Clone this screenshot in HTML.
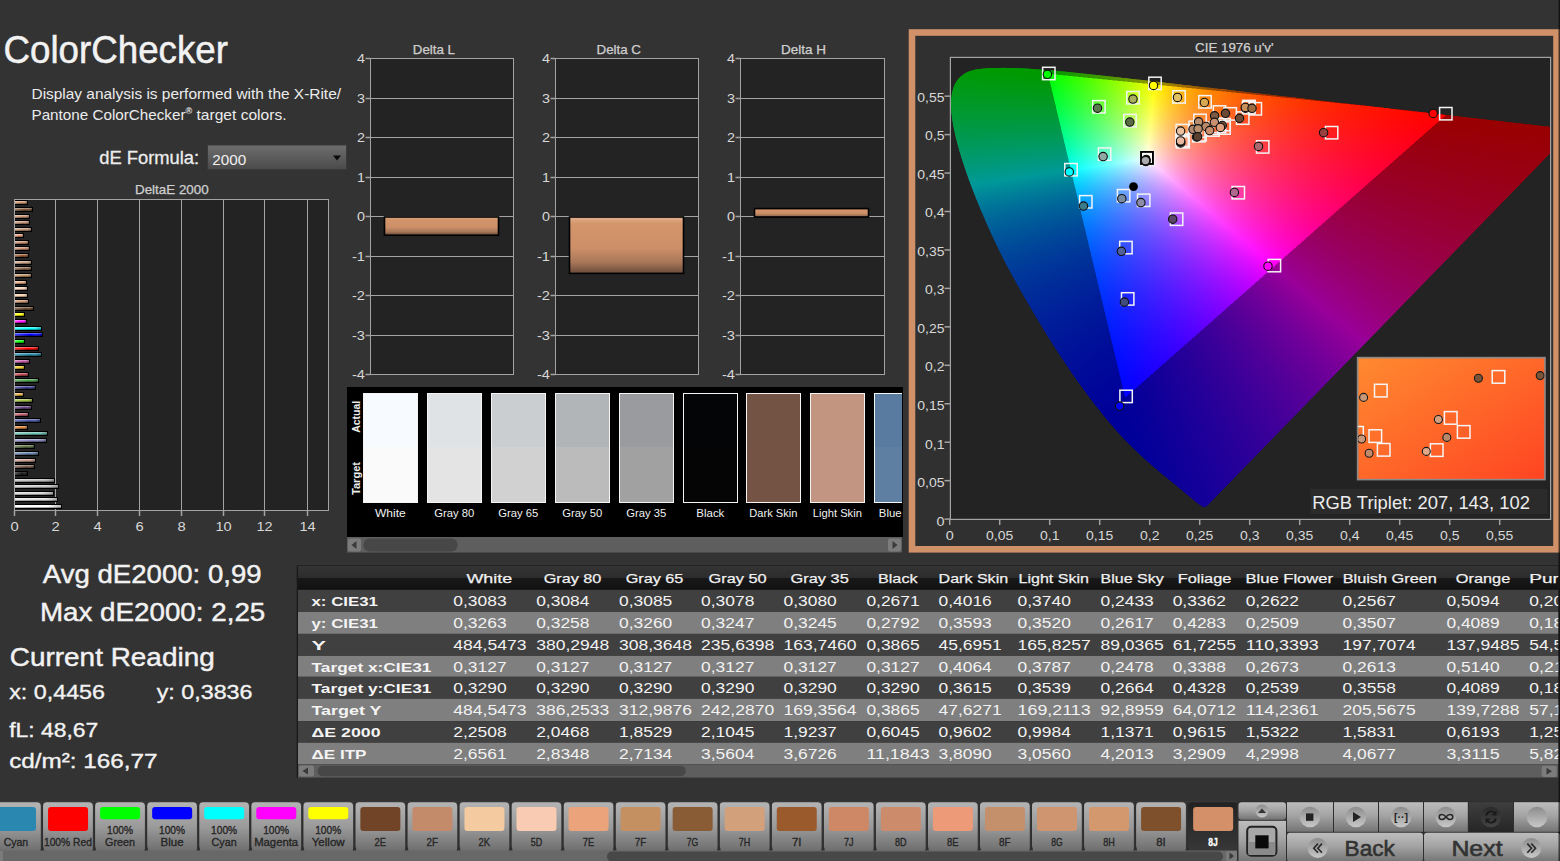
<!DOCTYPE html>
<html><head><meta charset="utf-8"><style>
html,body{margin:0;padding:0;background:#333333;width:1560px;height:861px;overflow:hidden}
svg{position:absolute;left:0;top:0}
text{font-family:"Liberation Sans",sans-serif}
#cie{position:absolute;left:950px;top:57px}
</style></head><body>
<svg width="1560" height="861" viewBox="0 0 1560 861" shape-rendering="auto">
<text x="3.5" y="63" font-size="38" fill="#f2f2f2" text-anchor="start" font-weight="normal" textLength="224.5" lengthAdjust="spacingAndGlyphs" stroke="#f2f2f2" stroke-width="0.5">ColorChecker</text>
<text x="31.5" y="99" font-size="15" fill="#ececec" text-anchor="start" font-weight="normal" textLength="309.5" lengthAdjust="spacingAndGlyphs">Display analysis is performed with the X-Rite/</text>
<text x="31.5" y="119.5" font-size="15" fill="#ececec" text-anchor="start" font-weight="normal" textLength="154" lengthAdjust="spacingAndGlyphs">Pantone ColorChecker</text>
<text x="185.5" y="113.5" font-size="9" fill="#ececec" text-anchor="start" font-weight="bold">®</text>
<text x="196.5" y="119.5" font-size="15" fill="#ececec" text-anchor="start" font-weight="normal" textLength="90" lengthAdjust="spacingAndGlyphs">target colors.</text>
<text x="99.2" y="164.2" font-size="18" fill="#ececec" text-anchor="start" font-weight="normal" textLength="100" lengthAdjust="spacingAndGlyphs" stroke="#ececec" stroke-width="0.3">dE Formula:</text>
<defs><linearGradient id="dd" x1="0" y1="0" x2="0" y2="1"><stop offset="0" stop-color="#6e6e6e"/><stop offset="1" stop-color="#4a4a4a"/></linearGradient></defs>
<rect x="207.5" y="145" width="139" height="24.5" fill="url(#dd)" stroke="#3a3a3a" stroke-width="1"/>
<text x="212.3" y="164.7" font-size="14.5" fill="#f0f0f0" text-anchor="start" font-weight="normal" textLength="34" lengthAdjust="spacingAndGlyphs">2000</text>
<path d="M333 155.5 L341 155.5 L337 160.5 Z" fill="#0a0a0a"/>
<text x="135" y="194" font-size="12.4" fill="#cfcfcf" text-anchor="start" font-weight="normal" textLength="73.7" lengthAdjust="spacingAndGlyphs" stroke="#cfcfcf" stroke-width="0.25">DeltaE 2000</text>
<rect x="14.5" y="199.5" width="314" height="311" fill="#232323"/>
<line x1="55.5" y1="199.5" x2="55.5" y2="510.5" stroke="#a3a3a3" stroke-width="1"/>
<line x1="97.5" y1="199.5" x2="97.5" y2="510.5" stroke="#a3a3a3" stroke-width="1"/>
<line x1="139.5" y1="199.5" x2="139.5" y2="510.5" stroke="#a3a3a3" stroke-width="1"/>
<line x1="181.5" y1="199.5" x2="181.5" y2="510.5" stroke="#a3a3a3" stroke-width="1"/>
<line x1="223.5" y1="199.5" x2="223.5" y2="510.5" stroke="#a3a3a3" stroke-width="1"/>
<line x1="264.5" y1="199.5" x2="264.5" y2="510.5" stroke="#a3a3a3" stroke-width="1"/>
<line x1="307.5" y1="199.5" x2="307.5" y2="510.5" stroke="#a3a3a3" stroke-width="1"/>
<rect x="14.5" y="199.5" width="314" height="311" fill="none" stroke="#a3a3a3" stroke-width="1"/>
<line x1="14.5" y1="510.3" x2="14.5" y2="516" stroke="#a3a3a3" stroke-width="1.5"/>
<text x="14.5" y="531" font-size="13" fill="#d8d8d8" text-anchor="middle" font-weight="normal" textLength="8.2" lengthAdjust="spacingAndGlyphs">0</text>
<line x1="55.5" y1="510.3" x2="55.5" y2="516" stroke="#a3a3a3" stroke-width="1.5"/>
<text x="55.5" y="531" font-size="13" fill="#d8d8d8" text-anchor="middle" font-weight="normal" textLength="8.2" lengthAdjust="spacingAndGlyphs">2</text>
<line x1="97.5" y1="510.3" x2="97.5" y2="516" stroke="#a3a3a3" stroke-width="1.5"/>
<text x="97.5" y="531" font-size="13" fill="#d8d8d8" text-anchor="middle" font-weight="normal" textLength="8.2" lengthAdjust="spacingAndGlyphs">4</text>
<line x1="139.5" y1="510.3" x2="139.5" y2="516" stroke="#a3a3a3" stroke-width="1.5"/>
<text x="139.5" y="531" font-size="13" fill="#d8d8d8" text-anchor="middle" font-weight="normal" textLength="8.2" lengthAdjust="spacingAndGlyphs">6</text>
<line x1="181.5" y1="510.3" x2="181.5" y2="516" stroke="#a3a3a3" stroke-width="1.5"/>
<text x="181.5" y="531" font-size="13" fill="#d8d8d8" text-anchor="middle" font-weight="normal" textLength="8.2" lengthAdjust="spacingAndGlyphs">8</text>
<line x1="223.5" y1="510.3" x2="223.5" y2="516" stroke="#a3a3a3" stroke-width="1.5"/>
<text x="223.5" y="531" font-size="13" fill="#d8d8d8" text-anchor="middle" font-weight="normal" textLength="16.2" lengthAdjust="spacingAndGlyphs">10</text>
<line x1="264.5" y1="510.3" x2="264.5" y2="516" stroke="#a3a3a3" stroke-width="1.5"/>
<text x="264.5" y="531" font-size="13" fill="#d8d8d8" text-anchor="middle" font-weight="normal" textLength="16.2" lengthAdjust="spacingAndGlyphs">12</text>
<line x1="307.5" y1="510.3" x2="307.5" y2="516" stroke="#a3a3a3" stroke-width="1.5"/>
<text x="307.5" y="531" font-size="13" fill="#d8d8d8" text-anchor="middle" font-weight="normal" textLength="16.2" lengthAdjust="spacingAndGlyphs">14</text>
<defs><linearGradient id="dbar" x1="0" y1="0" x2="0" y2="1"><stop offset="0" stop-color="#e2b291"/><stop offset="0.12" stop-color="#d4956a"/><stop offset="0.55" stop-color="#cd8f68"/><stop offset="0.8" stop-color="#a8785a"/><stop offset="1" stop-color="#6a4a38"/></linearGradient></defs>
<text x="433.9" y="54" font-size="12.4" fill="#cfcfcf" text-anchor="middle" font-weight="normal" textLength="42.19999999999999" lengthAdjust="spacingAndGlyphs" stroke="#cfcfcf" stroke-width="0.25">Delta L</text>
<rect x="370.5" y="58.5" width="143.0" height="316" fill="#232323"/>
<line x1="370.5" y1="58.5" x2="513.5" y2="58.5" stroke="#a3a3a3" stroke-width="1"/>
<line x1="365.5" y1="58.5" x2="370.5" y2="58.5" stroke="#a3a3a3" stroke-width="1.5"/>
<text x="365.0" y="62.8" font-size="12" fill="#d8d8d8" text-anchor="end" font-weight="normal" textLength="8" lengthAdjust="spacingAndGlyphs">4</text>
<line x1="370.5" y1="98.5" x2="513.5" y2="98.5" stroke="#a3a3a3" stroke-width="1"/>
<line x1="365.5" y1="98.5" x2="370.5" y2="98.5" stroke="#a3a3a3" stroke-width="1.5"/>
<text x="365.0" y="102.8" font-size="12" fill="#d8d8d8" text-anchor="end" font-weight="normal" textLength="8" lengthAdjust="spacingAndGlyphs">3</text>
<line x1="370.5" y1="137.5" x2="513.5" y2="137.5" stroke="#a3a3a3" stroke-width="1"/>
<line x1="365.5" y1="137.5" x2="370.5" y2="137.5" stroke="#a3a3a3" stroke-width="1.5"/>
<text x="365.0" y="141.8" font-size="12" fill="#d8d8d8" text-anchor="end" font-weight="normal" textLength="8" lengthAdjust="spacingAndGlyphs">2</text>
<line x1="370.5" y1="177.5" x2="513.5" y2="177.5" stroke="#a3a3a3" stroke-width="1"/>
<line x1="365.5" y1="177.5" x2="370.5" y2="177.5" stroke="#a3a3a3" stroke-width="1.5"/>
<text x="365.0" y="181.8" font-size="12" fill="#d8d8d8" text-anchor="end" font-weight="normal" textLength="8" lengthAdjust="spacingAndGlyphs">1</text>
<line x1="370.5" y1="216.5" x2="513.5" y2="216.5" stroke="#a3a3a3" stroke-width="1"/>
<line x1="365.5" y1="216.5" x2="370.5" y2="216.5" stroke="#a3a3a3" stroke-width="1.5"/>
<text x="365.0" y="220.8" font-size="12" fill="#d8d8d8" text-anchor="end" font-weight="normal" textLength="8" lengthAdjust="spacingAndGlyphs">0</text>
<line x1="370.5" y1="256.5" x2="513.5" y2="256.5" stroke="#a3a3a3" stroke-width="1"/>
<line x1="365.5" y1="256.5" x2="370.5" y2="256.5" stroke="#a3a3a3" stroke-width="1.5"/>
<text x="365.0" y="260.8" font-size="12" fill="#d8d8d8" text-anchor="end" font-weight="normal" textLength="13" lengthAdjust="spacingAndGlyphs">-1</text>
<line x1="370.5" y1="295.5" x2="513.5" y2="295.5" stroke="#a3a3a3" stroke-width="1"/>
<line x1="365.5" y1="295.5" x2="370.5" y2="295.5" stroke="#a3a3a3" stroke-width="1.5"/>
<text x="365.0" y="299.8" font-size="12" fill="#d8d8d8" text-anchor="end" font-weight="normal" textLength="13" lengthAdjust="spacingAndGlyphs">-2</text>
<line x1="370.5" y1="335.5" x2="513.5" y2="335.5" stroke="#a3a3a3" stroke-width="1"/>
<line x1="365.5" y1="335.5" x2="370.5" y2="335.5" stroke="#a3a3a3" stroke-width="1.5"/>
<text x="365.0" y="339.8" font-size="12" fill="#d8d8d8" text-anchor="end" font-weight="normal" textLength="13" lengthAdjust="spacingAndGlyphs">-3</text>
<line x1="370.5" y1="374.5" x2="513.5" y2="374.5" stroke="#a3a3a3" stroke-width="1"/>
<line x1="365.5" y1="374.5" x2="370.5" y2="374.5" stroke="#a3a3a3" stroke-width="1.5"/>
<text x="365.0" y="378.8" font-size="12" fill="#d8d8d8" text-anchor="end" font-weight="normal" textLength="13" lengthAdjust="spacingAndGlyphs">-4</text>
<rect x="370.5" y="58.5" width="143.0" height="316" fill="none" stroke="#a3a3a3" stroke-width="1"/>
<rect x="384.5" y="217" width="114.0" height="18.19999999999999" fill="url(#dbar)" stroke="#000" stroke-width="1.6"/>
<text x="618.75" y="54" font-size="12.4" fill="#cfcfcf" text-anchor="middle" font-weight="normal" textLength="44.5" lengthAdjust="spacingAndGlyphs" stroke="#cfcfcf" stroke-width="0.25">Delta C</text>
<rect x="555.5" y="58.5" width="143.0" height="316" fill="#232323"/>
<line x1="555.5" y1="58.5" x2="698.5" y2="58.5" stroke="#a3a3a3" stroke-width="1"/>
<line x1="550.5" y1="58.5" x2="555.5" y2="58.5" stroke="#a3a3a3" stroke-width="1.5"/>
<text x="550.0" y="62.8" font-size="12" fill="#d8d8d8" text-anchor="end" font-weight="normal" textLength="8" lengthAdjust="spacingAndGlyphs">4</text>
<line x1="555.5" y1="98.5" x2="698.5" y2="98.5" stroke="#a3a3a3" stroke-width="1"/>
<line x1="550.5" y1="98.5" x2="555.5" y2="98.5" stroke="#a3a3a3" stroke-width="1.5"/>
<text x="550.0" y="102.8" font-size="12" fill="#d8d8d8" text-anchor="end" font-weight="normal" textLength="8" lengthAdjust="spacingAndGlyphs">3</text>
<line x1="555.5" y1="137.5" x2="698.5" y2="137.5" stroke="#a3a3a3" stroke-width="1"/>
<line x1="550.5" y1="137.5" x2="555.5" y2="137.5" stroke="#a3a3a3" stroke-width="1.5"/>
<text x="550.0" y="141.8" font-size="12" fill="#d8d8d8" text-anchor="end" font-weight="normal" textLength="8" lengthAdjust="spacingAndGlyphs">2</text>
<line x1="555.5" y1="177.5" x2="698.5" y2="177.5" stroke="#a3a3a3" stroke-width="1"/>
<line x1="550.5" y1="177.5" x2="555.5" y2="177.5" stroke="#a3a3a3" stroke-width="1.5"/>
<text x="550.0" y="181.8" font-size="12" fill="#d8d8d8" text-anchor="end" font-weight="normal" textLength="8" lengthAdjust="spacingAndGlyphs">1</text>
<line x1="555.5" y1="216.5" x2="698.5" y2="216.5" stroke="#a3a3a3" stroke-width="1"/>
<line x1="550.5" y1="216.5" x2="555.5" y2="216.5" stroke="#a3a3a3" stroke-width="1.5"/>
<text x="550.0" y="220.8" font-size="12" fill="#d8d8d8" text-anchor="end" font-weight="normal" textLength="8" lengthAdjust="spacingAndGlyphs">0</text>
<line x1="555.5" y1="256.5" x2="698.5" y2="256.5" stroke="#a3a3a3" stroke-width="1"/>
<line x1="550.5" y1="256.5" x2="555.5" y2="256.5" stroke="#a3a3a3" stroke-width="1.5"/>
<text x="550.0" y="260.8" font-size="12" fill="#d8d8d8" text-anchor="end" font-weight="normal" textLength="13" lengthAdjust="spacingAndGlyphs">-1</text>
<line x1="555.5" y1="295.5" x2="698.5" y2="295.5" stroke="#a3a3a3" stroke-width="1"/>
<line x1="550.5" y1="295.5" x2="555.5" y2="295.5" stroke="#a3a3a3" stroke-width="1.5"/>
<text x="550.0" y="299.8" font-size="12" fill="#d8d8d8" text-anchor="end" font-weight="normal" textLength="13" lengthAdjust="spacingAndGlyphs">-2</text>
<line x1="555.5" y1="335.5" x2="698.5" y2="335.5" stroke="#a3a3a3" stroke-width="1"/>
<line x1="550.5" y1="335.5" x2="555.5" y2="335.5" stroke="#a3a3a3" stroke-width="1.5"/>
<text x="550.0" y="339.8" font-size="12" fill="#d8d8d8" text-anchor="end" font-weight="normal" textLength="13" lengthAdjust="spacingAndGlyphs">-3</text>
<line x1="555.5" y1="374.5" x2="698.5" y2="374.5" stroke="#a3a3a3" stroke-width="1"/>
<line x1="550.5" y1="374.5" x2="555.5" y2="374.5" stroke="#a3a3a3" stroke-width="1.5"/>
<text x="550.0" y="378.8" font-size="12" fill="#d8d8d8" text-anchor="end" font-weight="normal" textLength="13" lengthAdjust="spacingAndGlyphs">-4</text>
<rect x="555.5" y="58.5" width="143.0" height="316" fill="none" stroke="#a3a3a3" stroke-width="1"/>
<rect x="569.5" y="217" width="114.0" height="56.39999999999998" fill="url(#dbar)" stroke="#000" stroke-width="1.6"/>
<text x="803.5" y="54" font-size="12.4" fill="#cfcfcf" text-anchor="middle" font-weight="normal" textLength="45" lengthAdjust="spacingAndGlyphs" stroke="#cfcfcf" stroke-width="0.25">Delta H</text>
<rect x="740.5" y="58.5" width="144.0" height="316" fill="#232323"/>
<line x1="740.5" y1="58.5" x2="884.5" y2="58.5" stroke="#a3a3a3" stroke-width="1"/>
<line x1="735.5" y1="58.5" x2="740.5" y2="58.5" stroke="#a3a3a3" stroke-width="1.5"/>
<text x="735.0" y="62.8" font-size="12" fill="#d8d8d8" text-anchor="end" font-weight="normal" textLength="8" lengthAdjust="spacingAndGlyphs">4</text>
<line x1="740.5" y1="98.5" x2="884.5" y2="98.5" stroke="#a3a3a3" stroke-width="1"/>
<line x1="735.5" y1="98.5" x2="740.5" y2="98.5" stroke="#a3a3a3" stroke-width="1.5"/>
<text x="735.0" y="102.8" font-size="12" fill="#d8d8d8" text-anchor="end" font-weight="normal" textLength="8" lengthAdjust="spacingAndGlyphs">3</text>
<line x1="740.5" y1="137.5" x2="884.5" y2="137.5" stroke="#a3a3a3" stroke-width="1"/>
<line x1="735.5" y1="137.5" x2="740.5" y2="137.5" stroke="#a3a3a3" stroke-width="1.5"/>
<text x="735.0" y="141.8" font-size="12" fill="#d8d8d8" text-anchor="end" font-weight="normal" textLength="8" lengthAdjust="spacingAndGlyphs">2</text>
<line x1="740.5" y1="177.5" x2="884.5" y2="177.5" stroke="#a3a3a3" stroke-width="1"/>
<line x1="735.5" y1="177.5" x2="740.5" y2="177.5" stroke="#a3a3a3" stroke-width="1.5"/>
<text x="735.0" y="181.8" font-size="12" fill="#d8d8d8" text-anchor="end" font-weight="normal" textLength="8" lengthAdjust="spacingAndGlyphs">1</text>
<line x1="740.5" y1="216.5" x2="884.5" y2="216.5" stroke="#a3a3a3" stroke-width="1"/>
<line x1="735.5" y1="216.5" x2="740.5" y2="216.5" stroke="#a3a3a3" stroke-width="1.5"/>
<text x="735.0" y="220.8" font-size="12" fill="#d8d8d8" text-anchor="end" font-weight="normal" textLength="8" lengthAdjust="spacingAndGlyphs">0</text>
<line x1="740.5" y1="256.5" x2="884.5" y2="256.5" stroke="#a3a3a3" stroke-width="1"/>
<line x1="735.5" y1="256.5" x2="740.5" y2="256.5" stroke="#a3a3a3" stroke-width="1.5"/>
<text x="735.0" y="260.8" font-size="12" fill="#d8d8d8" text-anchor="end" font-weight="normal" textLength="13" lengthAdjust="spacingAndGlyphs">-1</text>
<line x1="740.5" y1="295.5" x2="884.5" y2="295.5" stroke="#a3a3a3" stroke-width="1"/>
<line x1="735.5" y1="295.5" x2="740.5" y2="295.5" stroke="#a3a3a3" stroke-width="1.5"/>
<text x="735.0" y="299.8" font-size="12" fill="#d8d8d8" text-anchor="end" font-weight="normal" textLength="13" lengthAdjust="spacingAndGlyphs">-2</text>
<line x1="740.5" y1="335.5" x2="884.5" y2="335.5" stroke="#a3a3a3" stroke-width="1"/>
<line x1="735.5" y1="335.5" x2="740.5" y2="335.5" stroke="#a3a3a3" stroke-width="1.5"/>
<text x="735.0" y="339.8" font-size="12" fill="#d8d8d8" text-anchor="end" font-weight="normal" textLength="13" lengthAdjust="spacingAndGlyphs">-3</text>
<line x1="740.5" y1="374.5" x2="884.5" y2="374.5" stroke="#a3a3a3" stroke-width="1"/>
<line x1="735.5" y1="374.5" x2="740.5" y2="374.5" stroke="#a3a3a3" stroke-width="1.5"/>
<text x="735.0" y="378.8" font-size="12" fill="#d8d8d8" text-anchor="end" font-weight="normal" textLength="13" lengthAdjust="spacingAndGlyphs">-4</text>
<rect x="740.5" y="58.5" width="144.0" height="316" fill="none" stroke="#a3a3a3" stroke-width="1"/>
<rect x="754.5" y="208.6" width="114.0" height="8.400000000000006" fill="url(#dbar)" stroke="#000" stroke-width="1.6"/>
<rect x="347" y="387" width="556" height="150" fill="#000000"/>
<clipPath id="swclip"><rect x="347" y="387" width="555" height="150"/></clipPath><g clip-path="url(#swclip)">
<rect x="363" y="393" width="55" height="54" fill="#f7faff"/>
<rect x="363" y="447" width="55" height="56" fill="#fafafa"/>
<rect x="363.5" y="393.5" width="54" height="109" fill="none" stroke="#f4f4f4" stroke-width="1"/>
<text x="390.35" y="516.7" font-size="11" fill="#f0f0f0" text-anchor="middle" font-weight="normal" textLength="30.7" lengthAdjust="spacingAndGlyphs">White</text>
<rect x="427" y="393" width="55" height="54" fill="#e0e3e6"/>
<rect x="427" y="447" width="55" height="56" fill="#e4e4e4"/>
<rect x="427.5" y="393.5" width="54" height="109" fill="none" stroke="#f4f4f4" stroke-width="1"/>
<text x="454.35" y="516.7" font-size="11" fill="#f0f0f0" text-anchor="middle" font-weight="normal" textLength="40" lengthAdjust="spacingAndGlyphs">Gray 80</text>
<rect x="491" y="393" width="55" height="54" fill="#cbced1"/>
<rect x="491" y="447" width="55" height="56" fill="#d1d1d1"/>
<rect x="491.5" y="393.5" width="54" height="109" fill="none" stroke="#f4f4f4" stroke-width="1"/>
<text x="518.35" y="516.7" font-size="11" fill="#f0f0f0" text-anchor="middle" font-weight="normal" textLength="40" lengthAdjust="spacingAndGlyphs">Gray 65</text>
<rect x="555" y="393" width="55" height="54" fill="#b2b5b8"/>
<rect x="555" y="447" width="55" height="56" fill="#bbbbbb"/>
<rect x="555.5" y="393.5" width="54" height="109" fill="none" stroke="#f4f4f4" stroke-width="1"/>
<text x="582.35" y="516.7" font-size="11" fill="#f0f0f0" text-anchor="middle" font-weight="normal" textLength="40" lengthAdjust="spacingAndGlyphs">Gray 50</text>
<rect x="619" y="393" width="55" height="54" fill="#9a9b9e"/>
<rect x="619" y="447" width="55" height="56" fill="#a1a1a1"/>
<rect x="619.5" y="393.5" width="54" height="109" fill="none" stroke="#f4f4f4" stroke-width="1"/>
<text x="646.35" y="516.7" font-size="11" fill="#f0f0f0" text-anchor="middle" font-weight="normal" textLength="40" lengthAdjust="spacingAndGlyphs">Gray 35</text>
<rect x="683" y="393" width="55" height="54" fill="#040507"/>
<rect x="683" y="447" width="55" height="56" fill="#050505"/>
<rect x="683.5" y="393.5" width="54" height="109" fill="none" stroke="#f4f4f4" stroke-width="1"/>
<text x="710.35" y="516.7" font-size="11" fill="#f0f0f0" text-anchor="middle" font-weight="normal" textLength="28" lengthAdjust="spacingAndGlyphs">Black</text>
<rect x="746" y="393" width="55" height="54" fill="#735344"/>
<rect x="746" y="447" width="55" height="56" fill="#745344"/>
<rect x="746.5" y="393.5" width="54" height="109" fill="none" stroke="#f4f4f4" stroke-width="1"/>
<text x="773.35" y="516.7" font-size="11" fill="#f0f0f0" text-anchor="middle" font-weight="normal" textLength="48" lengthAdjust="spacingAndGlyphs">Dark Skin</text>
<rect x="810" y="393" width="55" height="54" fill="#c29581"/>
<rect x="810" y="447" width="55" height="56" fill="#c29582"/>
<rect x="810.5" y="393.5" width="54" height="109" fill="none" stroke="#f4f4f4" stroke-width="1"/>
<text x="837.35" y="516.7" font-size="11" fill="#f0f0f0" text-anchor="middle" font-weight="normal" textLength="49" lengthAdjust="spacingAndGlyphs">Light Skin</text>
<rect x="874" y="393" width="55" height="54" fill="#5a7ba0"/>
<rect x="874" y="447" width="55" height="56" fill="#5e7ea2"/>
<rect x="874.5" y="393.5" width="54" height="109" fill="none" stroke="#f4f4f4" stroke-width="1"/>
<text x="901.35" y="516.7" font-size="11" fill="#f0f0f0" text-anchor="middle" font-weight="normal" textLength="45" lengthAdjust="spacingAndGlyphs">Blue Sky</text>
</g>
<text x="0" y="0" font-size="11" fill="#eeeeee" text-anchor="middle" font-weight="bold" textLength="32" lengthAdjust="spacingAndGlyphs" transform="translate(359.5 416.8) rotate(-90)">Actual</text>
<text x="0" y="0" font-size="11" fill="#eeeeee" text-anchor="middle" font-weight="bold" textLength="33" lengthAdjust="spacingAndGlyphs" transform="translate(359.5 478.5) rotate(-90)">Target</text>
<rect x="347" y="537" width="555" height="15.5" fill="#5e5e5e"/>
<rect x="348" y="538.5" width="13" height="13" rx="2" fill="#7c7c7c"/>
<path d="M351.5 545 L356.5 541 L356.5 549 Z" fill="#3a3a3a"/>
<rect x="363.5" y="538.5" width="94" height="13" rx="6" fill="#474747"/>
<rect x="888" y="538.5" width="13" height="13" rx="2" fill="#7c7c7c"/>
<path d="M897.5 545 L892.5 541 L892.5 549 Z" fill="#3a3a3a"/>
<rect x="912" y="32.5" width="644.5" height="516.8" fill="#303030" stroke="#d09068" stroke-width="6.6"/>
<text x="1234.3" y="52.2" font-size="12.4" fill="#cfcfcf" text-anchor="middle" font-weight="normal" textLength="78.5" lengthAdjust="spacingAndGlyphs" stroke="#cfcfcf" stroke-width="0.25">CIE 1976 u'v'</text>
<rect x="950.4" y="57.4" width="600.2" height="462" fill="#232323"/>
<line x1="944.5" y1="519.1" x2="950.4" y2="519.1" stroke="#a3a3a3" stroke-width="1.5"/>
<text x="944.5" y="525.71" font-size="12.2" fill="#d8d8d8" text-anchor="end" font-weight="normal" textLength="8" lengthAdjust="spacingAndGlyphs">0</text>
<line x1="944.5" y1="480.65000000000003" x2="950.4" y2="480.65000000000003" stroke="#a3a3a3" stroke-width="1.5"/>
<text x="944.5" y="487.15000000000003" font-size="12.2" fill="#d8d8d8" text-anchor="end" font-weight="normal" textLength="27.2" lengthAdjust="spacingAndGlyphs">0,05</text>
<line x1="944.5" y1="442.20000000000005" x2="950.4" y2="442.20000000000005" stroke="#a3a3a3" stroke-width="1.5"/>
<text x="944.5" y="448.59000000000003" font-size="12.2" fill="#d8d8d8" text-anchor="end" font-weight="normal" textLength="19.5" lengthAdjust="spacingAndGlyphs">0,1</text>
<line x1="944.5" y1="403.75" x2="950.4" y2="403.75" stroke="#a3a3a3" stroke-width="1.5"/>
<text x="944.5" y="410.03" font-size="12.2" fill="#d8d8d8" text-anchor="end" font-weight="normal" textLength="27.2" lengthAdjust="spacingAndGlyphs">0,15</text>
<line x1="944.5" y1="365.3" x2="950.4" y2="365.3" stroke="#a3a3a3" stroke-width="1.5"/>
<text x="944.5" y="371.46999999999997" font-size="12.2" fill="#d8d8d8" text-anchor="end" font-weight="normal" textLength="19.5" lengthAdjust="spacingAndGlyphs">0,2</text>
<line x1="944.5" y1="326.85" x2="950.4" y2="326.85" stroke="#a3a3a3" stroke-width="1.5"/>
<text x="944.5" y="332.91" font-size="12.2" fill="#d8d8d8" text-anchor="end" font-weight="normal" textLength="27.2" lengthAdjust="spacingAndGlyphs">0,25</text>
<line x1="944.5" y1="288.4" x2="950.4" y2="288.4" stroke="#a3a3a3" stroke-width="1.5"/>
<text x="944.5" y="294.34999999999997" font-size="12.2" fill="#d8d8d8" text-anchor="end" font-weight="normal" textLength="19.5" lengthAdjust="spacingAndGlyphs">0,3</text>
<line x1="944.5" y1="249.95" x2="950.4" y2="249.95" stroke="#a3a3a3" stroke-width="1.5"/>
<text x="944.5" y="255.79" font-size="12.2" fill="#d8d8d8" text-anchor="end" font-weight="normal" textLength="27.2" lengthAdjust="spacingAndGlyphs">0,35</text>
<line x1="944.5" y1="211.5" x2="950.4" y2="211.5" stroke="#a3a3a3" stroke-width="1.5"/>
<text x="944.5" y="217.23000000000002" font-size="12.2" fill="#d8d8d8" text-anchor="end" font-weight="normal" textLength="19.5" lengthAdjust="spacingAndGlyphs">0,4</text>
<line x1="944.5" y1="173.05" x2="950.4" y2="173.05" stroke="#a3a3a3" stroke-width="1.5"/>
<text x="944.5" y="178.67000000000002" font-size="12.2" fill="#d8d8d8" text-anchor="end" font-weight="normal" textLength="27.2" lengthAdjust="spacingAndGlyphs">0,45</text>
<line x1="944.5" y1="134.60000000000002" x2="950.4" y2="134.60000000000002" stroke="#a3a3a3" stroke-width="1.5"/>
<text x="944.5" y="140.11000000000004" font-size="12.2" fill="#d8d8d8" text-anchor="end" font-weight="normal" textLength="19.5" lengthAdjust="spacingAndGlyphs">0,5</text>
<line x1="944.5" y1="96.14999999999998" x2="950.4" y2="96.14999999999998" stroke="#a3a3a3" stroke-width="1.5"/>
<text x="944.5" y="101.54999999999998" font-size="12.2" fill="#d8d8d8" text-anchor="end" font-weight="normal" textLength="27.2" lengthAdjust="spacingAndGlyphs">0,55</text>
<line x1="949.7" y1="519.4" x2="949.7" y2="525" stroke="#a3a3a3" stroke-width="1.5"/>
<text x="949.7" y="539.5" font-size="12.2" fill="#d8d8d8" text-anchor="middle" font-weight="normal" textLength="8" lengthAdjust="spacingAndGlyphs">0</text>
<line x1="999.7" y1="519.4" x2="999.7" y2="525" stroke="#a3a3a3" stroke-width="1.5"/>
<text x="999.7" y="539.5" font-size="12.2" fill="#d8d8d8" text-anchor="middle" font-weight="normal" textLength="27.2" lengthAdjust="spacingAndGlyphs">0,05</text>
<line x1="1049.7" y1="519.4" x2="1049.7" y2="525" stroke="#a3a3a3" stroke-width="1.5"/>
<text x="1049.7" y="539.5" font-size="12.2" fill="#d8d8d8" text-anchor="middle" font-weight="normal" textLength="19.5" lengthAdjust="spacingAndGlyphs">0,1</text>
<line x1="1099.7" y1="519.4" x2="1099.7" y2="525" stroke="#a3a3a3" stroke-width="1.5"/>
<text x="1099.7" y="539.5" font-size="12.2" fill="#d8d8d8" text-anchor="middle" font-weight="normal" textLength="27.2" lengthAdjust="spacingAndGlyphs">0,15</text>
<line x1="1149.7" y1="519.4" x2="1149.7" y2="525" stroke="#a3a3a3" stroke-width="1.5"/>
<text x="1149.7" y="539.5" font-size="12.2" fill="#d8d8d8" text-anchor="middle" font-weight="normal" textLength="19.5" lengthAdjust="spacingAndGlyphs">0,2</text>
<line x1="1199.7" y1="519.4" x2="1199.7" y2="525" stroke="#a3a3a3" stroke-width="1.5"/>
<text x="1199.7" y="539.5" font-size="12.2" fill="#d8d8d8" text-anchor="middle" font-weight="normal" textLength="27.2" lengthAdjust="spacingAndGlyphs">0,25</text>
<line x1="1249.7" y1="519.4" x2="1249.7" y2="525" stroke="#a3a3a3" stroke-width="1.5"/>
<text x="1249.7" y="539.5" font-size="12.2" fill="#d8d8d8" text-anchor="middle" font-weight="normal" textLength="19.5" lengthAdjust="spacingAndGlyphs">0,3</text>
<line x1="1299.7" y1="519.4" x2="1299.7" y2="525" stroke="#a3a3a3" stroke-width="1.5"/>
<text x="1299.7" y="539.5" font-size="12.2" fill="#d8d8d8" text-anchor="middle" font-weight="normal" textLength="27.2" lengthAdjust="spacingAndGlyphs">0,35</text>
<line x1="1349.7" y1="519.4" x2="1349.7" y2="525" stroke="#a3a3a3" stroke-width="1.5"/>
<text x="1349.7" y="539.5" font-size="12.2" fill="#d8d8d8" text-anchor="middle" font-weight="normal" textLength="19.5" lengthAdjust="spacingAndGlyphs">0,4</text>
<line x1="1399.7" y1="519.4" x2="1399.7" y2="525" stroke="#a3a3a3" stroke-width="1.5"/>
<text x="1399.7" y="539.5" font-size="12.2" fill="#d8d8d8" text-anchor="middle" font-weight="normal" textLength="27.2" lengthAdjust="spacingAndGlyphs">0,45</text>
<line x1="1449.7" y1="519.4" x2="1449.7" y2="525" stroke="#a3a3a3" stroke-width="1.5"/>
<text x="1449.7" y="539.5" font-size="12.2" fill="#d8d8d8" text-anchor="middle" font-weight="normal" textLength="19.5" lengthAdjust="spacingAndGlyphs">0,5</text>
<line x1="1499.7" y1="519.4" x2="1499.7" y2="525" stroke="#a3a3a3" stroke-width="1.5"/>
<text x="1499.7" y="539.5" font-size="12.2" fill="#d8d8d8" text-anchor="middle" font-weight="normal" textLength="27.2" lengthAdjust="spacingAndGlyphs">0,55</text>
<text x="42.8" y="583" font-size="26.3" fill="#f2f2f2" text-anchor="start" font-weight="normal" textLength="218.8" lengthAdjust="spacingAndGlyphs" stroke="#f2f2f2" stroke-width="0.45">Avg dE2000: 0,99</text>
<text x="39.9" y="620.7" font-size="26.3" fill="#f2f2f2" text-anchor="start" font-weight="normal" textLength="225.4" lengthAdjust="spacingAndGlyphs" stroke="#f2f2f2" stroke-width="0.45">Max dE2000: 2,25</text>
<text x="9.8" y="665.6" font-size="26.3" fill="#f2f2f2" text-anchor="start" font-weight="normal" textLength="204.9" lengthAdjust="spacingAndGlyphs" stroke="#f2f2f2" stroke-width="0.45">Current Reading</text>
<text x="9.2" y="698.7" font-size="20" fill="#f2f2f2" text-anchor="start" font-weight="normal" textLength="95.8" lengthAdjust="spacingAndGlyphs" stroke="#f2f2f2" stroke-width="0.35">x: 0,4456</text>
<text x="156.7" y="698.7" font-size="20" fill="#f2f2f2" text-anchor="start" font-weight="normal" textLength="95.8" lengthAdjust="spacingAndGlyphs" stroke="#f2f2f2" stroke-width="0.35">y: 0,3836</text>
<text x="9.2" y="736.7" font-size="20" fill="#f2f2f2" text-anchor="start" font-weight="normal" textLength="89.1" lengthAdjust="spacingAndGlyphs" stroke="#f2f2f2" stroke-width="0.35">fL: 48,67</text>
<text x="9.2" y="768.3" font-size="20" fill="#f2f2f2" text-anchor="start" font-weight="normal" textLength="148.3" lengthAdjust="spacingAndGlyphs" stroke="#f2f2f2" stroke-width="0.35">cd/m²: 166,77</text>
<rect x="296.7" y="565.4" width="1261.7" height="212.3" fill="#1a1a1a"/>
<defs><linearGradient id="thd" x1="0" y1="0" x2="0" y2="1"><stop offset="0" stop-color="#343434"/><stop offset="0.5" stop-color="#2c2c2c"/><stop offset="0.52" stop-color="#181818"/><stop offset="1" stop-color="#111111"/></linearGradient></defs>
<rect x="298" y="566" width="1260.4" height="24" fill="url(#thd)"/>
<rect x="298" y="589.8" width="1260.4" height="22.200000000000045" fill="#404040"/>
<rect x="298" y="612.0" width="1260.4" height="21.899999999999977" fill="#7f7f7f"/>
<rect x="298" y="633.9" width="1260.4" height="22.0" fill="#404040"/>
<rect x="298" y="655.9" width="1260.4" height="20.899999999999977" fill="#7f7f7f"/>
<rect x="298" y="676.8" width="1260.4" height="22.0" fill="#404040"/>
<rect x="298" y="698.8" width="1260.4" height="22.300000000000068" fill="#7f7f7f"/>
<rect x="298" y="721.1" width="1260.4" height="21.600000000000023" fill="#404040"/>
<rect x="298" y="742.7" width="1260.4" height="21.699999999999932" fill="#7f7f7f"/>
<clipPath id="tclip"><rect x="298" y="565" width="1260.4" height="200"/></clipPath><g clip-path="url(#tclip)">
<text x="489.35" y="583" font-size="13.6" fill="#f0f0f0" text-anchor="middle" font-weight="normal" textLength="45.80000000000001" lengthAdjust="spacingAndGlyphs" stroke="#f0f0f0" stroke-width="0.25">White</text>
<text x="572.5" y="583" font-size="13.6" fill="#f0f0f0" text-anchor="middle" font-weight="normal" textLength="57.700000000000045" lengthAdjust="spacingAndGlyphs" stroke="#f0f0f0" stroke-width="0.25">Gray 80</text>
<text x="654.5" y="583" font-size="13.6" fill="#f0f0f0" text-anchor="middle" font-weight="normal" textLength="57.700000000000045" lengthAdjust="spacingAndGlyphs" stroke="#f0f0f0" stroke-width="0.25">Gray 65</text>
<text x="737.5999999999999" y="583" font-size="13.6" fill="#f0f0f0" text-anchor="middle" font-weight="normal" textLength="58.10000000000002" lengthAdjust="spacingAndGlyphs" stroke="#f0f0f0" stroke-width="0.25">Gray 50</text>
<text x="819.65" y="583" font-size="13.6" fill="#f0f0f0" text-anchor="middle" font-weight="normal" textLength="58.200000000000045" lengthAdjust="spacingAndGlyphs" stroke="#f0f0f0" stroke-width="0.25">Gray 35</text>
<text x="897.8" y="583" font-size="13.6" fill="#f0f0f0" text-anchor="middle" font-weight="normal" textLength="39.69999999999993" lengthAdjust="spacingAndGlyphs" stroke="#f0f0f0" stroke-width="0.25">Black</text>
<text x="973.3499999999999" y="583" font-size="13.6" fill="#f0f0f0" text-anchor="middle" font-weight="normal" textLength="69.60000000000002" lengthAdjust="spacingAndGlyphs" stroke="#f0f0f0" stroke-width="0.25">Dark Skin</text>
<text x="1053.75" y="583" font-size="13.6" fill="#f0f0f0" text-anchor="middle" font-weight="normal" textLength="70.40000000000009" lengthAdjust="spacingAndGlyphs" stroke="#f0f0f0" stroke-width="0.25">Light Skin</text>
<text x="1132.1" y="583" font-size="13.6" fill="#f0f0f0" text-anchor="middle" font-weight="normal" textLength="63.100000000000136" lengthAdjust="spacingAndGlyphs" stroke="#f0f0f0" stroke-width="0.25">Blue Sky</text>
<text x="1204.55" y="583" font-size="13.6" fill="#f0f0f0" text-anchor="middle" font-weight="normal" textLength="53.59999999999991" lengthAdjust="spacingAndGlyphs" stroke="#f0f0f0" stroke-width="0.25">Foliage</text>
<text x="1289.25" y="583" font-size="13.6" fill="#f0f0f0" text-anchor="middle" font-weight="normal" textLength="87.59999999999991" lengthAdjust="spacingAndGlyphs" stroke="#f0f0f0" stroke-width="0.25">Blue Flower</text>
<text x="1389.75" y="583" font-size="13.6" fill="#f0f0f0" text-anchor="middle" font-weight="normal" textLength="94.19999999999982" lengthAdjust="spacingAndGlyphs" stroke="#f0f0f0" stroke-width="0.25">Bluish Green</text>
<text x="1483.05" y="583" font-size="13.6" fill="#f0f0f0" text-anchor="middle" font-weight="normal" textLength="54.40000000000009" lengthAdjust="spacingAndGlyphs" stroke="#f0f0f0" stroke-width="0.25">Orange</text>
<text x="1585.5" y="583" font-size="13.6" fill="#f0f0f0" text-anchor="middle" font-weight="normal" textLength="112.5" lengthAdjust="spacingAndGlyphs" stroke="#f0f0f0" stroke-width="0.25">Purplish Blue</text>
<text x="311.5" y="605.8" font-size="13.3" fill="#f4f4f4" text-anchor="start" font-weight="bold" textLength="66.5" lengthAdjust="spacingAndGlyphs">x: CIE31</text>
<text x="453.3" y="605.8" font-size="14" fill="#f2f2f2" text-anchor="start" font-weight="normal" textLength="53.3" lengthAdjust="spacingAndGlyphs">0,3083</text>
<text x="536.2" y="605.8" font-size="14" fill="#f2f2f2" text-anchor="start" font-weight="normal" textLength="53.3" lengthAdjust="spacingAndGlyphs">0,3084</text>
<text x="619" y="605.8" font-size="14" fill="#f2f2f2" text-anchor="start" font-weight="normal" textLength="53.3" lengthAdjust="spacingAndGlyphs">0,3085</text>
<text x="701.1" y="605.8" font-size="14" fill="#f2f2f2" text-anchor="start" font-weight="normal" textLength="53.3" lengthAdjust="spacingAndGlyphs">0,3078</text>
<text x="783.5" y="605.8" font-size="14" fill="#f2f2f2" text-anchor="start" font-weight="normal" textLength="53.3" lengthAdjust="spacingAndGlyphs">0,3080</text>
<text x="866.4" y="605.8" font-size="14" fill="#f2f2f2" text-anchor="start" font-weight="normal" textLength="53.3" lengthAdjust="spacingAndGlyphs">0,2671</text>
<text x="938.5" y="605.8" font-size="14" fill="#f2f2f2" text-anchor="start" font-weight="normal" textLength="53.3" lengthAdjust="spacingAndGlyphs">0,4016</text>
<text x="1017.6" y="605.8" font-size="14" fill="#f2f2f2" text-anchor="start" font-weight="normal" textLength="53.3" lengthAdjust="spacingAndGlyphs">0,3740</text>
<text x="1100.5" y="605.8" font-size="14" fill="#f2f2f2" text-anchor="start" font-weight="normal" textLength="53.3" lengthAdjust="spacingAndGlyphs">0,2433</text>
<text x="1172.7" y="605.8" font-size="14" fill="#f2f2f2" text-anchor="start" font-weight="normal" textLength="53.3" lengthAdjust="spacingAndGlyphs">0,3362</text>
<text x="1245.7" y="605.8" font-size="14" fill="#f2f2f2" text-anchor="start" font-weight="normal" textLength="53.3" lengthAdjust="spacingAndGlyphs">0,2622</text>
<text x="1342.6" y="605.8" font-size="14" fill="#f2f2f2" text-anchor="start" font-weight="normal" textLength="53.3" lengthAdjust="spacingAndGlyphs">0,2567</text>
<text x="1446.4" y="605.8" font-size="14" fill="#f2f2f2" text-anchor="start" font-weight="normal" textLength="53.3" lengthAdjust="spacingAndGlyphs">0,5094</text>
<text x="1529.2" y="605.8" font-size="14" fill="#f2f2f2" text-anchor="start" font-weight="normal" textLength="53.3" lengthAdjust="spacingAndGlyphs">0,2065</text>
<text x="311.5" y="628.0" font-size="13.3" fill="#f4f4f4" text-anchor="start" font-weight="bold" textLength="66.5" lengthAdjust="spacingAndGlyphs">y: CIE31</text>
<text x="453.3" y="628.0" font-size="14" fill="#f2f2f2" text-anchor="start" font-weight="normal" textLength="53.3" lengthAdjust="spacingAndGlyphs">0,3263</text>
<text x="536.2" y="628.0" font-size="14" fill="#f2f2f2" text-anchor="start" font-weight="normal" textLength="53.3" lengthAdjust="spacingAndGlyphs">0,3258</text>
<text x="619" y="628.0" font-size="14" fill="#f2f2f2" text-anchor="start" font-weight="normal" textLength="53.3" lengthAdjust="spacingAndGlyphs">0,3260</text>
<text x="701.1" y="628.0" font-size="14" fill="#f2f2f2" text-anchor="start" font-weight="normal" textLength="53.3" lengthAdjust="spacingAndGlyphs">0,3247</text>
<text x="783.5" y="628.0" font-size="14" fill="#f2f2f2" text-anchor="start" font-weight="normal" textLength="53.3" lengthAdjust="spacingAndGlyphs">0,3245</text>
<text x="866.4" y="628.0" font-size="14" fill="#f2f2f2" text-anchor="start" font-weight="normal" textLength="53.3" lengthAdjust="spacingAndGlyphs">0,2792</text>
<text x="938.5" y="628.0" font-size="14" fill="#f2f2f2" text-anchor="start" font-weight="normal" textLength="53.3" lengthAdjust="spacingAndGlyphs">0,3593</text>
<text x="1017.6" y="628.0" font-size="14" fill="#f2f2f2" text-anchor="start" font-weight="normal" textLength="53.3" lengthAdjust="spacingAndGlyphs">0,3520</text>
<text x="1100.5" y="628.0" font-size="14" fill="#f2f2f2" text-anchor="start" font-weight="normal" textLength="53.3" lengthAdjust="spacingAndGlyphs">0,2617</text>
<text x="1172.7" y="628.0" font-size="14" fill="#f2f2f2" text-anchor="start" font-weight="normal" textLength="53.3" lengthAdjust="spacingAndGlyphs">0,4283</text>
<text x="1245.7" y="628.0" font-size="14" fill="#f2f2f2" text-anchor="start" font-weight="normal" textLength="53.3" lengthAdjust="spacingAndGlyphs">0,2509</text>
<text x="1342.6" y="628.0" font-size="14" fill="#f2f2f2" text-anchor="start" font-weight="normal" textLength="53.3" lengthAdjust="spacingAndGlyphs">0,3507</text>
<text x="1446.4" y="628.0" font-size="14" fill="#f2f2f2" text-anchor="start" font-weight="normal" textLength="53.3" lengthAdjust="spacingAndGlyphs">0,4089</text>
<text x="1529.2" y="628.0" font-size="14" fill="#f2f2f2" text-anchor="start" font-weight="normal" textLength="53.3" lengthAdjust="spacingAndGlyphs">0,1812</text>
<text x="311.5" y="649.9" font-size="13.3" fill="#f4f4f4" text-anchor="start" font-weight="bold" textLength="14.5" lengthAdjust="spacingAndGlyphs">Y</text>
<text x="453.3" y="649.9" font-size="14" fill="#f2f2f2" text-anchor="start" font-weight="normal" textLength="73.1" lengthAdjust="spacingAndGlyphs">484,5473</text>
<text x="536.2" y="649.9" font-size="14" fill="#f2f2f2" text-anchor="start" font-weight="normal" textLength="73.1" lengthAdjust="spacingAndGlyphs">380,2948</text>
<text x="619" y="649.9" font-size="14" fill="#f2f2f2" text-anchor="start" font-weight="normal" textLength="73.1" lengthAdjust="spacingAndGlyphs">308,3648</text>
<text x="701.1" y="649.9" font-size="14" fill="#f2f2f2" text-anchor="start" font-weight="normal" textLength="73.1" lengthAdjust="spacingAndGlyphs">235,6398</text>
<text x="783.5" y="649.9" font-size="14" fill="#f2f2f2" text-anchor="start" font-weight="normal" textLength="73.1" lengthAdjust="spacingAndGlyphs">163,7460</text>
<text x="866.4" y="649.9" font-size="14" fill="#f2f2f2" text-anchor="start" font-weight="normal" textLength="53.3" lengthAdjust="spacingAndGlyphs">0,3865</text>
<text x="938.5" y="649.9" font-size="14" fill="#f2f2f2" text-anchor="start" font-weight="normal" textLength="63.2" lengthAdjust="spacingAndGlyphs">45,6951</text>
<text x="1017.6" y="649.9" font-size="14" fill="#f2f2f2" text-anchor="start" font-weight="normal" textLength="73.1" lengthAdjust="spacingAndGlyphs">165,8257</text>
<text x="1100.5" y="649.9" font-size="14" fill="#f2f2f2" text-anchor="start" font-weight="normal" textLength="63.2" lengthAdjust="spacingAndGlyphs">89,0365</text>
<text x="1172.7" y="649.9" font-size="14" fill="#f2f2f2" text-anchor="start" font-weight="normal" textLength="63.2" lengthAdjust="spacingAndGlyphs">61,7255</text>
<text x="1245.7" y="649.9" font-size="14" fill="#f2f2f2" text-anchor="start" font-weight="normal" textLength="73.1" lengthAdjust="spacingAndGlyphs">110,3393</text>
<text x="1342.6" y="649.9" font-size="14" fill="#f2f2f2" text-anchor="start" font-weight="normal" textLength="73.1" lengthAdjust="spacingAndGlyphs">197,7074</text>
<text x="1446.4" y="649.9" font-size="14" fill="#f2f2f2" text-anchor="start" font-weight="normal" textLength="73.1" lengthAdjust="spacingAndGlyphs">137,9485</text>
<text x="1529.2" y="649.9" font-size="14" fill="#f2f2f2" text-anchor="start" font-weight="normal" textLength="63.2" lengthAdjust="spacingAndGlyphs">54,5121</text>
<text x="311.5" y="671.9" font-size="13.3" fill="#f4f4f4" text-anchor="start" font-weight="bold" textLength="120" lengthAdjust="spacingAndGlyphs">Target x:CIE31</text>
<text x="453.3" y="671.9" font-size="14" fill="#f2f2f2" text-anchor="start" font-weight="normal" textLength="53.3" lengthAdjust="spacingAndGlyphs">0,3127</text>
<text x="536.2" y="671.9" font-size="14" fill="#f2f2f2" text-anchor="start" font-weight="normal" textLength="53.3" lengthAdjust="spacingAndGlyphs">0,3127</text>
<text x="619" y="671.9" font-size="14" fill="#f2f2f2" text-anchor="start" font-weight="normal" textLength="53.3" lengthAdjust="spacingAndGlyphs">0,3127</text>
<text x="701.1" y="671.9" font-size="14" fill="#f2f2f2" text-anchor="start" font-weight="normal" textLength="53.3" lengthAdjust="spacingAndGlyphs">0,3127</text>
<text x="783.5" y="671.9" font-size="14" fill="#f2f2f2" text-anchor="start" font-weight="normal" textLength="53.3" lengthAdjust="spacingAndGlyphs">0,3127</text>
<text x="866.4" y="671.9" font-size="14" fill="#f2f2f2" text-anchor="start" font-weight="normal" textLength="53.3" lengthAdjust="spacingAndGlyphs">0,3127</text>
<text x="938.5" y="671.9" font-size="14" fill="#f2f2f2" text-anchor="start" font-weight="normal" textLength="53.3" lengthAdjust="spacingAndGlyphs">0,4064</text>
<text x="1017.6" y="671.9" font-size="14" fill="#f2f2f2" text-anchor="start" font-weight="normal" textLength="53.3" lengthAdjust="spacingAndGlyphs">0,3787</text>
<text x="1100.5" y="671.9" font-size="14" fill="#f2f2f2" text-anchor="start" font-weight="normal" textLength="53.3" lengthAdjust="spacingAndGlyphs">0,2478</text>
<text x="1172.7" y="671.9" font-size="14" fill="#f2f2f2" text-anchor="start" font-weight="normal" textLength="53.3" lengthAdjust="spacingAndGlyphs">0,3388</text>
<text x="1245.7" y="671.9" font-size="14" fill="#f2f2f2" text-anchor="start" font-weight="normal" textLength="53.3" lengthAdjust="spacingAndGlyphs">0,2673</text>
<text x="1342.6" y="671.9" font-size="14" fill="#f2f2f2" text-anchor="start" font-weight="normal" textLength="53.3" lengthAdjust="spacingAndGlyphs">0,2613</text>
<text x="1446.4" y="671.9" font-size="14" fill="#f2f2f2" text-anchor="start" font-weight="normal" textLength="53.3" lengthAdjust="spacingAndGlyphs">0,5140</text>
<text x="1529.2" y="671.9" font-size="14" fill="#f2f2f2" text-anchor="start" font-weight="normal" textLength="53.3" lengthAdjust="spacingAndGlyphs">0,2112</text>
<text x="311.5" y="692.8" font-size="13.3" fill="#f4f4f4" text-anchor="start" font-weight="bold" textLength="120" lengthAdjust="spacingAndGlyphs">Target y:CIE31</text>
<text x="453.3" y="692.8" font-size="14" fill="#f2f2f2" text-anchor="start" font-weight="normal" textLength="53.3" lengthAdjust="spacingAndGlyphs">0,3290</text>
<text x="536.2" y="692.8" font-size="14" fill="#f2f2f2" text-anchor="start" font-weight="normal" textLength="53.3" lengthAdjust="spacingAndGlyphs">0,3290</text>
<text x="619" y="692.8" font-size="14" fill="#f2f2f2" text-anchor="start" font-weight="normal" textLength="53.3" lengthAdjust="spacingAndGlyphs">0,3290</text>
<text x="701.1" y="692.8" font-size="14" fill="#f2f2f2" text-anchor="start" font-weight="normal" textLength="53.3" lengthAdjust="spacingAndGlyphs">0,3290</text>
<text x="783.5" y="692.8" font-size="14" fill="#f2f2f2" text-anchor="start" font-weight="normal" textLength="53.3" lengthAdjust="spacingAndGlyphs">0,3290</text>
<text x="866.4" y="692.8" font-size="14" fill="#f2f2f2" text-anchor="start" font-weight="normal" textLength="53.3" lengthAdjust="spacingAndGlyphs">0,3290</text>
<text x="938.5" y="692.8" font-size="14" fill="#f2f2f2" text-anchor="start" font-weight="normal" textLength="53.3" lengthAdjust="spacingAndGlyphs">0,3615</text>
<text x="1017.6" y="692.8" font-size="14" fill="#f2f2f2" text-anchor="start" font-weight="normal" textLength="53.3" lengthAdjust="spacingAndGlyphs">0,3539</text>
<text x="1100.5" y="692.8" font-size="14" fill="#f2f2f2" text-anchor="start" font-weight="normal" textLength="53.3" lengthAdjust="spacingAndGlyphs">0,2664</text>
<text x="1172.7" y="692.8" font-size="14" fill="#f2f2f2" text-anchor="start" font-weight="normal" textLength="53.3" lengthAdjust="spacingAndGlyphs">0,4328</text>
<text x="1245.7" y="692.8" font-size="14" fill="#f2f2f2" text-anchor="start" font-weight="normal" textLength="53.3" lengthAdjust="spacingAndGlyphs">0,2539</text>
<text x="1342.6" y="692.8" font-size="14" fill="#f2f2f2" text-anchor="start" font-weight="normal" textLength="53.3" lengthAdjust="spacingAndGlyphs">0,3558</text>
<text x="1446.4" y="692.8" font-size="14" fill="#f2f2f2" text-anchor="start" font-weight="normal" textLength="53.3" lengthAdjust="spacingAndGlyphs">0,4089</text>
<text x="1529.2" y="692.8" font-size="14" fill="#f2f2f2" text-anchor="start" font-weight="normal" textLength="53.3" lengthAdjust="spacingAndGlyphs">0,1867</text>
<text x="311.5" y="714.8" font-size="13.3" fill="#f4f4f4" text-anchor="start" font-weight="bold" textLength="70" lengthAdjust="spacingAndGlyphs">Target Y</text>
<text x="453.3" y="714.8" font-size="14" fill="#f2f2f2" text-anchor="start" font-weight="normal" textLength="73.1" lengthAdjust="spacingAndGlyphs">484,5473</text>
<text x="536.2" y="714.8" font-size="14" fill="#f2f2f2" text-anchor="start" font-weight="normal" textLength="73.1" lengthAdjust="spacingAndGlyphs">386,2533</text>
<text x="619" y="714.8" font-size="14" fill="#f2f2f2" text-anchor="start" font-weight="normal" textLength="73.1" lengthAdjust="spacingAndGlyphs">312,9876</text>
<text x="701.1" y="714.8" font-size="14" fill="#f2f2f2" text-anchor="start" font-weight="normal" textLength="73.1" lengthAdjust="spacingAndGlyphs">242,2870</text>
<text x="783.5" y="714.8" font-size="14" fill="#f2f2f2" text-anchor="start" font-weight="normal" textLength="73.1" lengthAdjust="spacingAndGlyphs">169,3564</text>
<text x="866.4" y="714.8" font-size="14" fill="#f2f2f2" text-anchor="start" font-weight="normal" textLength="53.3" lengthAdjust="spacingAndGlyphs">0,3865</text>
<text x="938.5" y="714.8" font-size="14" fill="#f2f2f2" text-anchor="start" font-weight="normal" textLength="63.2" lengthAdjust="spacingAndGlyphs">47,6271</text>
<text x="1017.6" y="714.8" font-size="14" fill="#f2f2f2" text-anchor="start" font-weight="normal" textLength="73.1" lengthAdjust="spacingAndGlyphs">169,2113</text>
<text x="1100.5" y="714.8" font-size="14" fill="#f2f2f2" text-anchor="start" font-weight="normal" textLength="63.2" lengthAdjust="spacingAndGlyphs">92,8959</text>
<text x="1172.7" y="714.8" font-size="14" fill="#f2f2f2" text-anchor="start" font-weight="normal" textLength="63.2" lengthAdjust="spacingAndGlyphs">64,0712</text>
<text x="1245.7" y="714.8" font-size="14" fill="#f2f2f2" text-anchor="start" font-weight="normal" textLength="73.1" lengthAdjust="spacingAndGlyphs">114,2361</text>
<text x="1342.6" y="714.8" font-size="14" fill="#f2f2f2" text-anchor="start" font-weight="normal" textLength="73.1" lengthAdjust="spacingAndGlyphs">205,5675</text>
<text x="1446.4" y="714.8" font-size="14" fill="#f2f2f2" text-anchor="start" font-weight="normal" textLength="73.1" lengthAdjust="spacingAndGlyphs">139,7288</text>
<text x="1529.2" y="714.8" font-size="14" fill="#f2f2f2" text-anchor="start" font-weight="normal" textLength="63.2" lengthAdjust="spacingAndGlyphs">57,1043</text>
<text x="311.5" y="737.1" font-size="13.3" fill="#f4f4f4" text-anchor="start" font-weight="bold" textLength="69" lengthAdjust="spacingAndGlyphs">ΔE 2000</text>
<text x="453.3" y="737.1" font-size="14" fill="#f2f2f2" text-anchor="start" font-weight="normal" textLength="53.3" lengthAdjust="spacingAndGlyphs">2,2508</text>
<text x="536.2" y="737.1" font-size="14" fill="#f2f2f2" text-anchor="start" font-weight="normal" textLength="53.3" lengthAdjust="spacingAndGlyphs">2,0468</text>
<text x="619" y="737.1" font-size="14" fill="#f2f2f2" text-anchor="start" font-weight="normal" textLength="53.3" lengthAdjust="spacingAndGlyphs">1,8529</text>
<text x="701.1" y="737.1" font-size="14" fill="#f2f2f2" text-anchor="start" font-weight="normal" textLength="53.3" lengthAdjust="spacingAndGlyphs">2,1045</text>
<text x="783.5" y="737.1" font-size="14" fill="#f2f2f2" text-anchor="start" font-weight="normal" textLength="53.3" lengthAdjust="spacingAndGlyphs">1,9237</text>
<text x="866.4" y="737.1" font-size="14" fill="#f2f2f2" text-anchor="start" font-weight="normal" textLength="53.3" lengthAdjust="spacingAndGlyphs">0,6045</text>
<text x="938.5" y="737.1" font-size="14" fill="#f2f2f2" text-anchor="start" font-weight="normal" textLength="53.3" lengthAdjust="spacingAndGlyphs">0,9602</text>
<text x="1017.6" y="737.1" font-size="14" fill="#f2f2f2" text-anchor="start" font-weight="normal" textLength="53.3" lengthAdjust="spacingAndGlyphs">0,9984</text>
<text x="1100.5" y="737.1" font-size="14" fill="#f2f2f2" text-anchor="start" font-weight="normal" textLength="53.3" lengthAdjust="spacingAndGlyphs">1,1371</text>
<text x="1172.7" y="737.1" font-size="14" fill="#f2f2f2" text-anchor="start" font-weight="normal" textLength="53.3" lengthAdjust="spacingAndGlyphs">0,9615</text>
<text x="1245.7" y="737.1" font-size="14" fill="#f2f2f2" text-anchor="start" font-weight="normal" textLength="53.3" lengthAdjust="spacingAndGlyphs">1,5322</text>
<text x="1342.6" y="737.1" font-size="14" fill="#f2f2f2" text-anchor="start" font-weight="normal" textLength="53.3" lengthAdjust="spacingAndGlyphs">1,5831</text>
<text x="1446.4" y="737.1" font-size="14" fill="#f2f2f2" text-anchor="start" font-weight="normal" textLength="53.3" lengthAdjust="spacingAndGlyphs">0,6193</text>
<text x="1529.2" y="737.1" font-size="14" fill="#f2f2f2" text-anchor="start" font-weight="normal" textLength="53.3" lengthAdjust="spacingAndGlyphs">1,2534</text>
<text x="311.5" y="758.7" font-size="13.3" fill="#f4f4f4" text-anchor="start" font-weight="bold" textLength="55" lengthAdjust="spacingAndGlyphs">ΔE ITP</text>
<text x="453.3" y="758.7" font-size="14" fill="#f2f2f2" text-anchor="start" font-weight="normal" textLength="53.3" lengthAdjust="spacingAndGlyphs">2,6561</text>
<text x="536.2" y="758.7" font-size="14" fill="#f2f2f2" text-anchor="start" font-weight="normal" textLength="53.3" lengthAdjust="spacingAndGlyphs">2,8348</text>
<text x="619" y="758.7" font-size="14" fill="#f2f2f2" text-anchor="start" font-weight="normal" textLength="53.3" lengthAdjust="spacingAndGlyphs">2,7134</text>
<text x="701.1" y="758.7" font-size="14" fill="#f2f2f2" text-anchor="start" font-weight="normal" textLength="53.3" lengthAdjust="spacingAndGlyphs">3,5604</text>
<text x="783.5" y="758.7" font-size="14" fill="#f2f2f2" text-anchor="start" font-weight="normal" textLength="53.3" lengthAdjust="spacingAndGlyphs">3,6726</text>
<text x="866.4" y="758.7" font-size="14" fill="#f2f2f2" text-anchor="start" font-weight="normal" textLength="63.2" lengthAdjust="spacingAndGlyphs">11,1843</text>
<text x="938.5" y="758.7" font-size="14" fill="#f2f2f2" text-anchor="start" font-weight="normal" textLength="53.3" lengthAdjust="spacingAndGlyphs">3,8090</text>
<text x="1017.6" y="758.7" font-size="14" fill="#f2f2f2" text-anchor="start" font-weight="normal" textLength="53.3" lengthAdjust="spacingAndGlyphs">3,0560</text>
<text x="1100.5" y="758.7" font-size="14" fill="#f2f2f2" text-anchor="start" font-weight="normal" textLength="53.3" lengthAdjust="spacingAndGlyphs">4,2013</text>
<text x="1172.7" y="758.7" font-size="14" fill="#f2f2f2" text-anchor="start" font-weight="normal" textLength="53.3" lengthAdjust="spacingAndGlyphs">3,2909</text>
<text x="1245.7" y="758.7" font-size="14" fill="#f2f2f2" text-anchor="start" font-weight="normal" textLength="53.3" lengthAdjust="spacingAndGlyphs">4,2998</text>
<text x="1342.6" y="758.7" font-size="14" fill="#f2f2f2" text-anchor="start" font-weight="normal" textLength="53.3" lengthAdjust="spacingAndGlyphs">4,0677</text>
<text x="1446.4" y="758.7" font-size="14" fill="#f2f2f2" text-anchor="start" font-weight="normal" textLength="53.3" lengthAdjust="spacingAndGlyphs">3,3115</text>
<text x="1529.2" y="758.7" font-size="14" fill="#f2f2f2" text-anchor="start" font-weight="normal" textLength="53.3" lengthAdjust="spacingAndGlyphs">5,8234</text>
</g>
<rect x="298" y="764.4" width="1260.4" height="13.3" fill="#5e5e5e"/>
<rect x="299" y="765.5" width="15" height="11" rx="2" fill="#7c7c7c"/><path d="M302.5 771 L308 767.5 L308 774.5 Z" fill="#3a3a3a"/>
<rect x="317.7" y="765.8" width="368" height="10.5" rx="5" fill="#474747"/>
<rect x="1541.6" y="765.7" width="15.2" height="11.2" rx="2" fill="#7c7c7c"/><path d="M1552 771.3 L1546.5 767.8 L1546.5 774.8 Z" fill="#3a3a3a"/>
<defs><linearGradient id="bsh" x1="0" y1="0" x2="0" y2="1"><stop offset="0" stop-color="#fff" stop-opacity="0.35"/><stop offset="0.5" stop-color="#fff" stop-opacity="0"/><stop offset="1" stop-color="#000" stop-opacity="0.45"/></linearGradient><linearGradient id="bsh2" x1="0" y1="0" x2="1" y2="0"><stop offset="0" stop-color="#fff" stop-opacity="0.25"/><stop offset="0.6" stop-color="#fff" stop-opacity="0"/><stop offset="1" stop-color="#000" stop-opacity="0.3"/></linearGradient></defs>
<rect x="15" y="200" width="13" height="5" fill="#000"/>
<rect x="15" y="201" width="12" height="1" fill="#e0b79d"/>
<rect x="15" y="202" width="12" height="1" fill="#d09068"/>
<rect x="15" y="203" width="12" height="1" fill="#875e44"/>
<rect x="15" y="201" width="12" height="3" fill="url(#bsh2)"/>
<rect x="15" y="207" width="18" height="5" fill="#000"/>
<rect x="15" y="208" width="17" height="1" fill="#a98d78"/>
<rect x="15" y="209" width="17" height="1" fill="#7a5030"/>
<rect x="15" y="210" width="17" height="1" fill="#4f341f"/>
<rect x="15" y="208" width="17" height="3" fill="url(#bsh2)"/>
<rect x="15" y="214" width="15" height="5" fill="#000"/>
<rect x="15" y="215" width="14" height="1" fill="#dbb7a2"/>
<rect x="15" y="216" width="14" height="1" fill="#c89070"/>
<rect x="15" y="217" width="14" height="1" fill="#825e49"/>
<rect x="15" y="215" width="14" height="3" fill="url(#bsh2)"/>
<rect x="15" y="220" width="15" height="5" fill="#000"/>
<rect x="15" y="221" width="14" height="1" fill="#dbb7a2"/>
<rect x="15" y="222" width="14" height="1" fill="#c89070"/>
<rect x="15" y="223" width="14" height="1" fill="#825e49"/>
<rect x="15" y="221" width="14" height="3" fill="url(#bsh2)"/>
<rect x="15" y="227" width="17" height="5" fill="#000"/>
<rect x="15" y="228" width="16" height="1" fill="#d6b7a2"/>
<rect x="15" y="229" width="16" height="1" fill="#c09070"/>
<rect x="15" y="230" width="16" height="1" fill="#7d5e49"/>
<rect x="15" y="228" width="16" height="3" fill="url(#bsh2)"/>
<rect x="15" y="233" width="9" height="5" fill="#000"/>
<rect x="15" y="234" width="8" height="1" fill="#f0bca7"/>
<rect x="15" y="235" width="8" height="1" fill="#e89878"/>
<rect x="15" y="236" width="8" height="1" fill="#97634e"/>
<rect x="15" y="234" width="8" height="3" fill="url(#bsh2)"/>
<rect x="15" y="240" width="14" height="5" fill="#000"/>
<rect x="15" y="241" width="13" height="1" fill="#dbb29d"/>
<rect x="15" y="242" width="13" height="1" fill="#c88868"/>
<rect x="15" y="243" width="13" height="1" fill="#825844"/>
<rect x="15" y="241" width="13" height="3" fill="url(#bsh2)"/>
<rect x="15" y="246" width="15" height="5" fill="#000"/>
<rect x="15" y="247" width="14" height="1" fill="#dbb29d"/>
<rect x="15" y="248" width="14" height="1" fill="#c88868"/>
<rect x="15" y="249" width="14" height="1" fill="#825844"/>
<rect x="15" y="247" width="14" height="3" fill="url(#bsh2)"/>
<rect x="15" y="253" width="14" height="5" fill="#000"/>
<rect x="15" y="254" width="13" height="1" fill="#bd9478"/>
<rect x="15" y="255" width="13" height="1" fill="#9a5a30"/>
<rect x="15" y="256" width="13" height="1" fill="#643a1f"/>
<rect x="15" y="254" width="13" height="3" fill="url(#bsh2)"/>
<rect x="15" y="260" width="17" height="5" fill="#000"/>
<rect x="15" y="261" width="16" height="1" fill="#dbc1ac"/>
<rect x="15" y="262" width="16" height="1" fill="#c8a080"/>
<rect x="15" y="263" width="16" height="1" fill="#826853"/>
<rect x="15" y="261" width="16" height="3" fill="url(#bsh2)"/>
<rect x="15" y="266" width="17" height="5" fill="#000"/>
<rect x="15" y="267" width="16" height="1" fill="#b39883"/>
<rect x="15" y="268" width="16" height="1" fill="#8a6040"/>
<rect x="15" y="269" width="16" height="1" fill="#5a3e2a"/>
<rect x="15" y="267" width="16" height="3" fill="url(#bsh2)"/>
<rect x="15" y="273" width="17" height="5" fill="#000"/>
<rect x="15" y="274" width="16" height="1" fill="#d6b798"/>
<rect x="15" y="275" width="16" height="1" fill="#c09060"/>
<rect x="15" y="276" width="16" height="1" fill="#7d5e3e"/>
<rect x="15" y="274" width="16" height="3" fill="url(#bsh2)"/>
<rect x="15" y="280" width="12" height="5" fill="#000"/>
<rect x="15" y="281" width="11" height="1" fill="#f0c6ac"/>
<rect x="15" y="282" width="11" height="1" fill="#e8a880"/>
<rect x="15" y="283" width="11" height="1" fill="#976d53"/>
<rect x="15" y="281" width="11" height="3" fill="url(#bsh2)"/>
<rect x="15" y="286" width="13" height="5" fill="#000"/>
<rect x="15" y="287" width="12" height="1" fill="#fae0d1"/>
<rect x="15" y="288" width="12" height="1" fill="#f8d0b8"/>
<rect x="15" y="289" width="12" height="1" fill="#a18778"/>
<rect x="15" y="287" width="12" height="3" fill="url(#bsh2)"/>
<rect x="15" y="293" width="13" height="5" fill="#000"/>
<rect x="15" y="294" width="12" height="1" fill="#fae0c6"/>
<rect x="15" y="295" width="12" height="1" fill="#f8d0a8"/>
<rect x="15" y="296" width="12" height="1" fill="#a1876d"/>
<rect x="15" y="294" width="12" height="3" fill="url(#bsh2)"/>
<rect x="15" y="299" width="14" height="5" fill="#000"/>
<rect x="15" y="300" width="13" height="1" fill="#dbb49d"/>
<rect x="15" y="301" width="13" height="1" fill="#c88c68"/>
<rect x="15" y="302" width="13" height="1" fill="#825b44"/>
<rect x="15" y="300" width="13" height="3" fill="url(#bsh2)"/>
<rect x="15" y="306" width="19" height="5" fill="#000"/>
<rect x="15" y="307" width="18" height="1" fill="#9e8573"/>
<rect x="15" y="308" width="18" height="1" fill="#6a4428"/>
<rect x="15" y="309" width="18" height="1" fill="#452c1a"/>
<rect x="15" y="307" width="18" height="3" fill="url(#bsh2)"/>
<rect x="15" y="312" width="10" height="5" fill="#000"/>
<rect x="15" y="313" width="9" height="1" fill="#ffff59"/>
<rect x="15" y="314" width="9" height="1" fill="#ffff00"/>
<rect x="15" y="315" width="9" height="1" fill="#a6a600"/>
<rect x="15" y="313" width="9" height="3" fill="url(#bsh2)"/>
<rect x="15" y="319" width="12" height="5" fill="#000"/>
<rect x="15" y="320" width="11" height="1" fill="#ff59ff"/>
<rect x="15" y="321" width="11" height="1" fill="#ff00ff"/>
<rect x="15" y="322" width="11" height="1" fill="#a600a6"/>
<rect x="15" y="320" width="11" height="3" fill="url(#bsh2)"/>
<rect x="15" y="326" width="27" height="5" fill="#000"/>
<rect x="15" y="327" width="26" height="1" fill="#59ffff"/>
<rect x="15" y="328" width="26" height="1" fill="#00ffff"/>
<rect x="15" y="329" width="26" height="1" fill="#00a6a6"/>
<rect x="15" y="327" width="26" height="3" fill="url(#bsh2)"/>
<rect x="15" y="332" width="28" height="5" fill="#000"/>
<rect x="15" y="333" width="27" height="1" fill="#5959ff"/>
<rect x="15" y="334" width="27" height="1" fill="#0000ff"/>
<rect x="15" y="335" width="27" height="1" fill="#0000a6"/>
<rect x="15" y="333" width="27" height="3" fill="url(#bsh2)"/>
<rect x="15" y="339" width="10" height="5" fill="#000"/>
<rect x="15" y="340" width="9" height="1" fill="#59ff59"/>
<rect x="15" y="341" width="9" height="1" fill="#00ff00"/>
<rect x="15" y="342" width="9" height="1" fill="#00a600"/>
<rect x="15" y="340" width="9" height="3" fill="url(#bsh2)"/>
<rect x="15" y="346" width="24" height="5" fill="#000"/>
<rect x="15" y="347" width="23" height="1" fill="#ff5959"/>
<rect x="15" y="348" width="23" height="1" fill="#ff0000"/>
<rect x="15" y="349" width="23" height="1" fill="#a60000"/>
<rect x="15" y="347" width="23" height="3" fill="url(#bsh2)"/>
<rect x="15" y="352" width="27" height="5" fill="#000"/>
<rect x="15" y="353" width="26" height="1" fill="#6eb2c6"/>
<rect x="15" y="354" width="26" height="1" fill="#2088a8"/>
<rect x="15" y="355" width="26" height="1" fill="#15586d"/>
<rect x="15" y="353" width="26" height="3" fill="url(#bsh2)"/>
<rect x="15" y="359" width="15" height="5" fill="#000"/>
<rect x="15" y="360" width="14" height="1" fill="#d68dc1"/>
<rect x="15" y="361" width="14" height="1" fill="#c050a0"/>
<rect x="15" y="362" width="14" height="1" fill="#7d3468"/>
<rect x="15" y="360" width="14" height="3" fill="url(#bsh2)"/>
<rect x="15" y="365" width="10" height="5" fill="#000"/>
<rect x="15" y="366" width="9" height="1" fill="#f5db6e"/>
<rect x="15" y="367" width="9" height="1" fill="#f0c820"/>
<rect x="15" y="368" width="9" height="1" fill="#9c8215"/>
<rect x="15" y="366" width="9" height="3" fill="url(#bsh2)"/>
<rect x="15" y="372" width="14" height="5" fill="#000"/>
<rect x="15" y="373" width="13" height="1" fill="#d68388"/>
<rect x="15" y="374" width="13" height="1" fill="#c04048"/>
<rect x="15" y="375" width="13" height="1" fill="#7d2a2f"/>
<rect x="15" y="373" width="13" height="3" fill="url(#bsh2)"/>
<rect x="15" y="378" width="24" height="5" fill="#000"/>
<rect x="15" y="379" width="23" height="1" fill="#88c188"/>
<rect x="15" y="380" width="23" height="1" fill="#48a048"/>
<rect x="15" y="381" width="23" height="1" fill="#2f682f"/>
<rect x="15" y="379" width="23" height="3" fill="url(#bsh2)"/>
<rect x="15" y="385" width="21" height="5" fill="#000"/>
<rect x="15" y="386" width="20" height="1" fill="#7e7eb7"/>
<rect x="15" y="387" width="20" height="1" fill="#383890"/>
<rect x="15" y="388" width="20" height="1" fill="#24245e"/>
<rect x="15" y="386" width="20" height="3" fill="url(#bsh2)"/>
<rect x="15" y="392" width="9" height="5" fill="#000"/>
<rect x="15" y="393" width="8" height="1" fill="#f0cc83"/>
<rect x="15" y="394" width="8" height="1" fill="#e8b040"/>
<rect x="15" y="395" width="8" height="1" fill="#97722a"/>
<rect x="15" y="393" width="8" height="3" fill="url(#bsh2)"/>
<rect x="15" y="398" width="18" height="5" fill="#000"/>
<rect x="15" y="399" width="17" height="1" fill="#c1d683"/>
<rect x="15" y="400" width="17" height="1" fill="#a0c040"/>
<rect x="15" y="401" width="17" height="1" fill="#687d2a"/>
<rect x="15" y="399" width="17" height="3" fill="url(#bsh2)"/>
<rect x="15" y="405" width="17" height="5" fill="#000"/>
<rect x="15" y="406" width="16" height="1" fill="#9883ac"/>
<rect x="15" y="407" width="16" height="1" fill="#604080"/>
<rect x="15" y="408" width="16" height="1" fill="#3e2a53"/>
<rect x="15" y="406" width="16" height="3" fill="url(#bsh2)"/>
<rect x="15" y="412" width="14" height="5" fill="#000"/>
<rect x="15" y="413" width="13" height="1" fill="#d6929d"/>
<rect x="15" y="414" width="13" height="1" fill="#c05868"/>
<rect x="15" y="415" width="13" height="1" fill="#7d3944"/>
<rect x="15" y="413" width="13" height="3" fill="url(#bsh2)"/>
<rect x="15" y="418" width="26" height="5" fill="#000"/>
<rect x="15" y="419" width="25" height="1" fill="#8892c6"/>
<rect x="15" y="420" width="25" height="1" fill="#4858a8"/>
<rect x="15" y="421" width="25" height="1" fill="#2f396d"/>
<rect x="15" y="419" width="25" height="3" fill="url(#bsh2)"/>
<rect x="15" y="425" width="13" height="5" fill="#000"/>
<rect x="15" y="426" width="12" height="1" fill="#ebac78"/>
<rect x="15" y="427" width="12" height="1" fill="#e08030"/>
<rect x="15" y="428" width="12" height="1" fill="#92531f"/>
<rect x="15" y="426" width="12" height="3" fill="url(#bsh2)"/>
<rect x="15" y="431" width="33" height="5" fill="#000"/>
<rect x="15" y="432" width="32" height="1" fill="#9dd6cc"/>
<rect x="15" y="433" width="32" height="1" fill="#68c0b0"/>
<rect x="15" y="434" width="32" height="1" fill="#447d72"/>
<rect x="15" y="432" width="32" height="3" fill="url(#bsh2)"/>
<rect x="15" y="438" width="32" height="5" fill="#000"/>
<rect x="15" y="439" width="31" height="1" fill="#b2b2d6"/>
<rect x="15" y="440" width="31" height="1" fill="#8888c0"/>
<rect x="15" y="441" width="31" height="1" fill="#58587d"/>
<rect x="15" y="439" width="31" height="3" fill="url(#bsh2)"/>
<rect x="15" y="444" width="20" height="5" fill="#000"/>
<rect x="15" y="445" width="19" height="1" fill="#92a283"/>
<rect x="15" y="446" width="19" height="1" fill="#587040"/>
<rect x="15" y="447" width="19" height="1" fill="#39492a"/>
<rect x="15" y="445" width="19" height="3" fill="url(#bsh2)"/>
<rect x="15" y="451" width="24" height="5" fill="#000"/>
<rect x="15" y="452" width="23" height="1" fill="#98acc6"/>
<rect x="15" y="453" width="23" height="1" fill="#6080a8"/>
<rect x="15" y="454" width="23" height="1" fill="#3e536d"/>
<rect x="15" y="452" width="23" height="3" fill="url(#bsh2)"/>
<rect x="15" y="458" width="21" height="5" fill="#000"/>
<rect x="15" y="459" width="20" height="1" fill="#dbbcb2"/>
<rect x="15" y="460" width="20" height="1" fill="#c89888"/>
<rect x="15" y="461" width="20" height="1" fill="#826358"/>
<rect x="15" y="459" width="20" height="3" fill="url(#bsh2)"/>
<rect x="15" y="464" width="20" height="5" fill="#000"/>
<rect x="15" y="465" width="19" height="1" fill="#a79288"/>
<rect x="15" y="466" width="19" height="1" fill="#785848"/>
<rect x="15" y="467" width="19" height="1" fill="#4e392f"/>
<rect x="15" y="465" width="19" height="3" fill="url(#bsh2)"/>
<rect x="15" y="471" width="13" height="5" fill="#000"/>
<rect x="15" y="472" width="12" height="1" fill="#2f2f2f"/>
<rect x="15" y="473" width="12" height="1" fill="#181818"/>
<rect x="15" y="474" width="12" height="1" fill="#101010"/>
<rect x="15" y="472" width="12" height="3" fill="url(#bsh2)"/>
<rect x="15" y="478" width="40" height="5" fill="#000"/>
<rect x="15" y="479" width="39" height="1" fill="#d1d1d1"/>
<rect x="15" y="480" width="39" height="1" fill="#b8b8b8"/>
<rect x="15" y="481" width="39" height="1" fill="#787878"/>
<rect x="15" y="479" width="39" height="3" fill="url(#bsh2)"/>
<rect x="15" y="484" width="44" height="5" fill="#000"/>
<rect x="15" y="485" width="43" height="1" fill="#dbdbdb"/>
<rect x="15" y="486" width="43" height="1" fill="#c8c8c8"/>
<rect x="15" y="487" width="43" height="1" fill="#828282"/>
<rect x="15" y="485" width="43" height="3" fill="url(#bsh2)"/>
<rect x="15" y="491" width="39" height="5" fill="#000"/>
<rect x="15" y="492" width="38" height="1" fill="#e3e3e3"/>
<rect x="15" y="493" width="38" height="1" fill="#d4d4d4"/>
<rect x="15" y="494" width="38" height="1" fill="#8a8a8a"/>
<rect x="15" y="492" width="38" height="3" fill="url(#bsh2)"/>
<rect x="15" y="497" width="43" height="5" fill="#000"/>
<rect x="15" y="498" width="42" height="1" fill="#ebebeb"/>
<rect x="15" y="499" width="42" height="1" fill="#e0e0e0"/>
<rect x="15" y="500" width="42" height="1" fill="#929292"/>
<rect x="15" y="498" width="42" height="3" fill="url(#bsh2)"/>
<rect x="15" y="504" width="47" height="5" fill="#000"/>
<rect x="15" y="505" width="46" height="1" fill="#ffffff"/>
<rect x="15" y="506" width="46" height="1" fill="#ffffff"/>
<rect x="15" y="507" width="46" height="1" fill="#a6a6a6"/>
<rect x="15" y="505" width="46" height="3" fill="url(#bsh2)"/>
<line x1="14.5" y1="199.5" x2="14.5" y2="510.5" stroke="#a3a3a3" stroke-width="1"/>
<defs><linearGradient id="tile" x1="0" y1="0" x2="0" y2="1"><stop offset="0" stop-color="#b4b4b4"/><stop offset="0.5" stop-color="#9a9a9a"/><stop offset="1" stop-color="#6c6c6c"/></linearGradient><linearGradient id="tsel" x1="0" y1="0" x2="0" y2="1"><stop offset="0" stop-color="#222"/><stop offset="1" stop-color="#383838"/></linearGradient></defs>
<rect x="0" y="801" width="1238" height="50" fill="#383838"/>
<rect x="-9.10" y="802.2" width="49.9" height="50" rx="4" fill="url(#tile)"/>
<rect x="-4.00" y="807" width="40" height="24" rx="3" fill="#2a88b0"/>
<text x="15.9" y="845.7" font-size="10.8" fill="#262626" text-anchor="middle" font-weight="normal" textLength="24.5" lengthAdjust="spacingAndGlyphs" stroke="#262626" stroke-width="0.35">Cyan</text>
<path d="M-11.40 850.5 L-10.30 846 L-10.30 802 L-9.00 802 L-9.00 846 L-7.90 850.5 Z" fill="#2e2e2e"/>
<rect x="42.95" y="802.2" width="49.9" height="50" rx="4" fill="url(#tile)"/>
<rect x="48.05" y="807" width="40" height="24" rx="3" fill="#ff0000"/>
<text x="67.94999999999999" y="845.7" font-size="10.8" fill="#262626" text-anchor="middle" font-weight="normal" textLength="48" lengthAdjust="spacingAndGlyphs" stroke="#262626" stroke-width="0.35">100% Red</text>
<path d="M40.65 850.5 L41.75 846 L41.75 802 L43.05 802 L43.05 846 L44.15 850.5 Z" fill="#2e2e2e"/>
<rect x="95.00" y="802.2" width="49.9" height="50" rx="4" fill="url(#tile)"/>
<rect x="100.10" y="807" width="40" height="12.3" rx="3" fill="#00ff00"/>
<text x="120.0" y="833.6" font-size="10.8" fill="#262626" text-anchor="middle" font-weight="normal" textLength="26" lengthAdjust="spacingAndGlyphs" stroke="#262626" stroke-width="0.35">100%</text>
<text x="120.0" y="845.7" font-size="10.8" fill="#262626" text-anchor="middle" font-weight="normal" textLength="30" lengthAdjust="spacingAndGlyphs" stroke="#262626" stroke-width="0.35">Green</text>
<path d="M92.70 850.5 L93.80 846 L93.80 802 L95.10 802 L95.10 846 L96.20 850.5 Z" fill="#2e2e2e"/>
<rect x="147.05" y="802.2" width="49.9" height="50" rx="4" fill="url(#tile)"/>
<rect x="152.15" y="807" width="40" height="12.3" rx="3" fill="#0000ff"/>
<text x="172.04999999999998" y="833.6" font-size="10.8" fill="#262626" text-anchor="middle" font-weight="normal" textLength="26" lengthAdjust="spacingAndGlyphs" stroke="#262626" stroke-width="0.35">100%</text>
<text x="172.04999999999998" y="845.7" font-size="10.8" fill="#262626" text-anchor="middle" font-weight="normal" textLength="23" lengthAdjust="spacingAndGlyphs" stroke="#262626" stroke-width="0.35">Blue</text>
<path d="M144.75 850.5 L145.85 846 L145.85 802 L147.15 802 L147.15 846 L148.25 850.5 Z" fill="#2e2e2e"/>
<rect x="199.10" y="802.2" width="49.9" height="50" rx="4" fill="url(#tile)"/>
<rect x="204.20" y="807" width="40" height="12.3" rx="3" fill="#00ffff"/>
<text x="224.1" y="833.6" font-size="10.8" fill="#262626" text-anchor="middle" font-weight="normal" textLength="26" lengthAdjust="spacingAndGlyphs" stroke="#262626" stroke-width="0.35">100%</text>
<text x="224.1" y="845.7" font-size="10.8" fill="#262626" text-anchor="middle" font-weight="normal" textLength="25" lengthAdjust="spacingAndGlyphs" stroke="#262626" stroke-width="0.35">Cyan</text>
<path d="M196.80 850.5 L197.90 846 L197.90 802 L199.20 802 L199.20 846 L200.30 850.5 Z" fill="#2e2e2e"/>
<rect x="251.15" y="802.2" width="49.9" height="50" rx="4" fill="url(#tile)"/>
<rect x="256.25" y="807" width="40" height="12.3" rx="3" fill="#ff00ff"/>
<text x="276.15" y="833.6" font-size="10.8" fill="#262626" text-anchor="middle" font-weight="normal" textLength="26" lengthAdjust="spacingAndGlyphs" stroke="#262626" stroke-width="0.35">100%</text>
<text x="276.15" y="845.7" font-size="10.8" fill="#262626" text-anchor="middle" font-weight="normal" textLength="44" lengthAdjust="spacingAndGlyphs" stroke="#262626" stroke-width="0.35">Magenta</text>
<path d="M248.85 850.5 L249.95 846 L249.95 802 L251.25 802 L251.25 846 L252.35 850.5 Z" fill="#2e2e2e"/>
<rect x="303.20" y="802.2" width="49.9" height="50" rx="4" fill="url(#tile)"/>
<rect x="308.30" y="807" width="40" height="12.3" rx="3" fill="#ffff00"/>
<text x="328.19999999999993" y="833.6" font-size="10.8" fill="#262626" text-anchor="middle" font-weight="normal" textLength="26" lengthAdjust="spacingAndGlyphs" stroke="#262626" stroke-width="0.35">100%</text>
<text x="328.19999999999993" y="845.7" font-size="10.8" fill="#262626" text-anchor="middle" font-weight="normal" textLength="33" lengthAdjust="spacingAndGlyphs" stroke="#262626" stroke-width="0.35">Yellow</text>
<path d="M300.90 850.5 L302.00 846 L302.00 802 L303.30 802 L303.30 846 L304.40 850.5 Z" fill="#2e2e2e"/>
<rect x="355.25" y="802.2" width="49.9" height="50" rx="4" fill="url(#tile)"/>
<rect x="360.35" y="807" width="40" height="24" rx="3" fill="#714428"/>
<text x="380.24999999999994" y="845.7" font-size="10.8" fill="#262626" text-anchor="middle" font-weight="normal" textLength="11.5" lengthAdjust="spacingAndGlyphs" stroke="#262626" stroke-width="0.35">2E</text>
<path d="M352.95 850.5 L354.05 846 L354.05 802 L355.35 802 L355.35 846 L356.45 850.5 Z" fill="#2e2e2e"/>
<rect x="407.30" y="802.2" width="49.9" height="50" rx="4" fill="url(#tile)"/>
<rect x="412.40" y="807" width="40" height="24" rx="3" fill="#c38b6a"/>
<text x="432.29999999999995" y="845.7" font-size="10.8" fill="#262626" text-anchor="middle" font-weight="normal" textLength="11.5" lengthAdjust="spacingAndGlyphs" stroke="#262626" stroke-width="0.35">2F</text>
<path d="M405.00 850.5 L406.10 846 L406.10 802 L407.40 802 L407.40 846 L408.50 850.5 Z" fill="#2e2e2e"/>
<rect x="459.35" y="802.2" width="49.9" height="50" rx="4" fill="url(#tile)"/>
<rect x="464.45" y="807" width="40" height="24" rx="3" fill="#f4cba0"/>
<text x="484.34999999999997" y="845.7" font-size="10.8" fill="#262626" text-anchor="middle" font-weight="normal" textLength="11.5" lengthAdjust="spacingAndGlyphs" stroke="#262626" stroke-width="0.35">2K</text>
<path d="M457.05 850.5 L458.15 846 L458.15 802 L459.45 802 L459.45 846 L460.55 850.5 Z" fill="#2e2e2e"/>
<rect x="511.40" y="802.2" width="49.9" height="50" rx="4" fill="url(#tile)"/>
<rect x="516.50" y="807" width="40" height="24" rx="3" fill="#f8cbb2"/>
<text x="536.4" y="845.7" font-size="10.8" fill="#262626" text-anchor="middle" font-weight="normal" textLength="11.5" lengthAdjust="spacingAndGlyphs" stroke="#262626" stroke-width="0.35">5D</text>
<path d="M509.10 850.5 L510.20 846 L510.20 802 L511.50 802 L511.50 846 L512.60 850.5 Z" fill="#2e2e2e"/>
<rect x="563.45" y="802.2" width="49.9" height="50" rx="4" fill="url(#tile)"/>
<rect x="568.55" y="807" width="40" height="24" rx="3" fill="#eba37c"/>
<text x="588.4499999999999" y="845.7" font-size="10.8" fill="#262626" text-anchor="middle" font-weight="normal" textLength="11.5" lengthAdjust="spacingAndGlyphs" stroke="#262626" stroke-width="0.35">7E</text>
<path d="M561.15 850.5 L562.25 846 L562.25 802 L563.55 802 L563.55 846 L564.65 850.5 Z" fill="#2e2e2e"/>
<rect x="615.50" y="802.2" width="49.9" height="50" rx="4" fill="url(#tile)"/>
<rect x="620.60" y="807" width="40" height="24" rx="3" fill="#c49062"/>
<text x="640.4999999999999" y="845.7" font-size="10.8" fill="#262626" text-anchor="middle" font-weight="normal" textLength="11.5" lengthAdjust="spacingAndGlyphs" stroke="#262626" stroke-width="0.35">7F</text>
<path d="M613.20 850.5 L614.30 846 L614.30 802 L615.60 802 L615.60 846 L616.70 850.5 Z" fill="#2e2e2e"/>
<rect x="667.55" y="802.2" width="49.9" height="50" rx="4" fill="url(#tile)"/>
<rect x="672.65" y="807" width="40" height="24" rx="3" fill="#8a5c36"/>
<text x="692.55" y="845.7" font-size="10.8" fill="#262626" text-anchor="middle" font-weight="normal" textLength="11.5" lengthAdjust="spacingAndGlyphs" stroke="#262626" stroke-width="0.35">7G</text>
<path d="M665.25 850.5 L666.35 846 L666.35 802 L667.65 802 L667.65 846 L668.75 850.5 Z" fill="#2e2e2e"/>
<rect x="719.60" y="802.2" width="49.9" height="50" rx="4" fill="url(#tile)"/>
<rect x="724.70" y="807" width="40" height="24" rx="3" fill="#d3a07c"/>
<text x="744.5999999999999" y="845.7" font-size="10.8" fill="#262626" text-anchor="middle" font-weight="normal" textLength="11.5" lengthAdjust="spacingAndGlyphs" stroke="#262626" stroke-width="0.35">7H</text>
<path d="M717.30 850.5 L718.40 846 L718.40 802 L719.70 802 L719.70 846 L720.80 850.5 Z" fill="#2e2e2e"/>
<rect x="771.65" y="802.2" width="49.9" height="50" rx="4" fill="url(#tile)"/>
<rect x="776.75" y="807" width="40" height="24" rx="3" fill="#9a5a2c"/>
<text x="796.65" y="845.7" font-size="10.8" fill="#262626" text-anchor="middle" font-weight="normal" textLength="9.5" lengthAdjust="spacingAndGlyphs" stroke="#262626" stroke-width="0.35">7I</text>
<path d="M769.35 850.5 L770.45 846 L770.45 802 L771.75 802 L771.75 846 L772.85 850.5 Z" fill="#2e2e2e"/>
<rect x="823.70" y="802.2" width="49.9" height="50" rx="4" fill="url(#tile)"/>
<rect x="828.80" y="807" width="40" height="24" rx="3" fill="#cf8866"/>
<text x="848.6999999999999" y="845.7" font-size="10.8" fill="#262626" text-anchor="middle" font-weight="normal" textLength="9.5" lengthAdjust="spacingAndGlyphs" stroke="#262626" stroke-width="0.35">7J</text>
<path d="M821.40 850.5 L822.50 846 L822.50 802 L823.80 802 L823.80 846 L824.90 850.5 Z" fill="#2e2e2e"/>
<rect x="875.75" y="802.2" width="49.9" height="50" rx="4" fill="url(#tile)"/>
<rect x="880.85" y="807" width="40" height="24" rx="3" fill="#cc8c6c"/>
<text x="900.7499999999999" y="845.7" font-size="10.8" fill="#262626" text-anchor="middle" font-weight="normal" textLength="11.5" lengthAdjust="spacingAndGlyphs" stroke="#262626" stroke-width="0.35">8D</text>
<path d="M873.45 850.5 L874.55 846 L874.55 802 L875.85 802 L875.85 846 L876.95 850.5 Z" fill="#2e2e2e"/>
<rect x="927.80" y="802.2" width="49.9" height="50" rx="4" fill="url(#tile)"/>
<rect x="932.90" y="807" width="40" height="24" rx="3" fill="#ec9a78"/>
<text x="952.8" y="845.7" font-size="10.8" fill="#262626" text-anchor="middle" font-weight="normal" textLength="11.5" lengthAdjust="spacingAndGlyphs" stroke="#262626" stroke-width="0.35">8E</text>
<path d="M925.50 850.5 L926.60 846 L926.60 802 L927.90 802 L927.90 846 L929.00 850.5 Z" fill="#2e2e2e"/>
<rect x="979.85" y="802.2" width="49.9" height="50" rx="4" fill="url(#tile)"/>
<rect x="984.95" y="807" width="40" height="24" rx="3" fill="#c4906c"/>
<text x="1004.8499999999999" y="845.7" font-size="10.8" fill="#262626" text-anchor="middle" font-weight="normal" textLength="11.5" lengthAdjust="spacingAndGlyphs" stroke="#262626" stroke-width="0.35">8F</text>
<path d="M977.55 850.5 L978.65 846 L978.65 802 L979.95 802 L979.95 846 L981.05 850.5 Z" fill="#2e2e2e"/>
<rect x="1031.90" y="802.2" width="49.9" height="50" rx="4" fill="url(#tile)"/>
<rect x="1037.00" y="807" width="40" height="24" rx="3" fill="#cf9470"/>
<text x="1056.9" y="845.7" font-size="10.8" fill="#262626" text-anchor="middle" font-weight="normal" textLength="11.5" lengthAdjust="spacingAndGlyphs" stroke="#262626" stroke-width="0.35">8G</text>
<path d="M1029.60 850.5 L1030.70 846 L1030.70 802 L1032.00 802 L1032.00 846 L1033.10 850.5 Z" fill="#2e2e2e"/>
<rect x="1083.95" y="802.2" width="49.9" height="50" rx="4" fill="url(#tile)"/>
<rect x="1089.05" y="807" width="40" height="24" rx="3" fill="#d4986e"/>
<text x="1108.95" y="845.7" font-size="10.8" fill="#262626" text-anchor="middle" font-weight="normal" textLength="11.5" lengthAdjust="spacingAndGlyphs" stroke="#262626" stroke-width="0.35">8H</text>
<path d="M1081.65 850.5 L1082.75 846 L1082.75 802 L1084.05 802 L1084.05 846 L1085.15 850.5 Z" fill="#2e2e2e"/>
<rect x="1136.00" y="802.2" width="49.9" height="50" rx="4" fill="url(#tile)"/>
<rect x="1141.10" y="807" width="40" height="24" rx="3" fill="#7e502c"/>
<text x="1161.0" y="845.7" font-size="10.8" fill="#262626" text-anchor="middle" font-weight="normal" textLength="9.5" lengthAdjust="spacingAndGlyphs" stroke="#262626" stroke-width="0.35">8I</text>
<path d="M1133.70 850.5 L1134.80 846 L1134.80 802 L1136.10 802 L1136.10 846 L1137.20 850.5 Z" fill="#2e2e2e"/>
<rect x="1188.05" y="802.2" width="49.9" height="50" rx="4" fill="url(#tsel)"/>
<rect x="1193.15" y="807" width="40" height="24" rx="3" fill="#d49068"/>
<text x="1213.05" y="845.7" font-size="10.8" fill="#ffffff" text-anchor="middle" font-weight="bold" textLength="9.5" lengthAdjust="spacingAndGlyphs" stroke="#ffffff" stroke-width="0.35">8J</text>
<path d="M1185.75 850.5 L1186.85 846 L1186.85 802 L1188.15 802 L1188.15 846 L1189.25 850.5 Z" fill="#2e2e2e"/>
<rect x="0" y="850.5" width="1238" height="10.5" fill="#686868"/>
<rect x="607" y="851.6" width="616" height="10" rx="5" fill="#484848"/>
<rect x="0" y="851" width="3" height="10" fill="#7a7a7a"/>
<rect x="1226" y="851" width="11" height="10" rx="1.5" fill="#7a7a7a"/><path d="M1234 856 L1229.5 852.5 L1229.5 859.5 Z" fill="#3a3a3a"/>
<defs><linearGradient id="btn" x1="0" y1="0" x2="0" y2="1"><stop offset="0" stop-color="#bdbdbd"/><stop offset="0.45" stop-color="#a4a4a4"/><stop offset="1" stop-color="#747474"/></linearGradient><linearGradient id="bsel" x1="0" y1="0" x2="0" y2="1"><stop offset="0" stop-color="#3e3e3e"/><stop offset="1" stop-color="#262626"/></linearGradient><linearGradient id="circ" x1="0" y1="0" x2="0" y2="1"><stop offset="0" stop-color="#8c8c8c"/><stop offset="1" stop-color="#c8c8c8"/></linearGradient><linearGradient id="circd" x1="0" y1="0" x2="0" y2="1"><stop offset="0" stop-color="#2a2a2a"/><stop offset="1" stop-color="#444"/></linearGradient></defs>
<rect x="1237" y="801" width="323" height="60" fill="#2f2f2f"/>
<rect x="1238.5" y="802.2" width="47.5" height="17.5" rx="3" fill="url(#btn)"/>
<circle cx="1262" cy="811" r="6.5" fill="url(#circ)"/><path d="M1258 813 L1262 808.5 L1266 813 Z" fill="#333"/>
<rect x="1238.5" y="820.8" width="47.5" height="41" fill="url(#btn)"/>
<rect x="1247.2" y="826.8" width="29.2" height="29" rx="4" fill="#a8a8a8" stroke="#222" stroke-width="2"/>
<rect x="1248.5" y="842" width="26.6" height="13" fill="#8a8a8a"/>
<rect x="1255.3" y="835.3" width="13.3" height="13.1" fill="#0a0a0a"/>
<rect x="1287" y="802.2" width="46" height="29.6" fill="url(#btn)"/>
<circle cx="1310.0" cy="817" r="10.3" fill="url(#circ)"/>
<rect x="1334" y="802.2" width="44" height="29.6" fill="url(#btn)"/>
<circle cx="1356.0" cy="817" r="10.3" fill="url(#circ)"/>
<rect x="1379" y="802.2" width="44" height="29.6" fill="url(#btn)"/>
<circle cx="1401.0" cy="817" r="10.3" fill="url(#circ)"/>
<rect x="1424" y="802.2" width="43.799999999999955" height="29.6" fill="url(#btn)"/>
<circle cx="1445.9" cy="817" r="10.3" fill="url(#circ)"/>
<rect x="1468.8" y="802.2" width="44.200000000000045" height="29.6" fill="url(#bsel)"/>
<circle cx="1490.9" cy="817" r="10.3" fill="url(#circd)"/>
<rect x="1514" y="802.2" width="46" height="29.6" fill="url(#btn)"/>
<circle cx="1537.0" cy="817" r="10.3" fill="url(#circ)"/>
<rect x="1306" y="813.4" width="7.4" height="7.4" fill="#222"/>
<path d="M1353 812 L1361 817 L1353 822 Z" fill="#222"/>
<text x="1401" y="820.5" font-size="10" fill="#222" text-anchor="middle" font-weight="bold" textLength="14" lengthAdjust="spacingAndGlyphs">[··]</text>
<path d="M1446 817 c-2.2 -3.2 -6.8 -3.2 -6.8 0 c0 3.2 4.6 3.2 6.8 0 c2.2 -3.2 6.8 -3.2 6.8 0 c0 3.2 -4.6 3.2 -6.8 0 z" fill="none" stroke="#262626" stroke-width="1.5"/>
<path d="M1486.2 815.5 a5 5 0 0 1 8.6 -2.5 M1495.8 818.5 a5 5 0 0 1 -8.6 2.5" fill="none" stroke="#1a1a1a" stroke-width="1.8"/>
<path d="M1496.5 810.5 L1496.5 815.5 L1491.5 815.2 Z M1485.5 823.5 L1485.5 818.5 L1490.5 818.8 Z" fill="#1a1a1a"/>
<rect x="1287" y="832.8" width="136" height="29" rx="3" fill="url(#btn)"/>
<rect x="1424" y="832.8" width="136" height="29" rx="3" fill="url(#btn)"/>
<circle cx="1317.7" cy="848" r="10" fill="url(#circ)"/><circle cx="1531.3" cy="848" r="10" fill="url(#circ)"/>
<path d="M1527.3 843.6 L1531.5 848.2 L1527.3 852.8 M1531.3 843.6 L1535.5 848.2 L1531.3 852.8" fill="none" stroke="#2a2a2a" stroke-width="1.7"/>
<path d="M1322 843.6 L1317.8 848.2 L1322 852.8 M1318 843.6 L1313.8 848.2 L1318 852.8" fill="none" stroke="#2a2a2a" stroke-width="1.7"/>
<text x="1344.6" y="855.7" font-size="22" fill="#333" text-anchor="start" font-weight="normal" textLength="50.3" lengthAdjust="spacingAndGlyphs" stroke="#333" stroke-width="0.6">Back</text>
<text x="1451.4" y="855.7" font-size="22" fill="#333" text-anchor="start" font-weight="normal" textLength="51.2" lengthAdjust="spacingAndGlyphs" stroke="#333" stroke-width="0.6">Next</text>
<clipPath id="pclip"><rect x="950.4" y="57.4" width="600.2" height="462"/></clipPath><clipPath id="lclip"><path d="M1206.5 506.3 L1205.4 506.8 L1204.2 506.9 L1201.9 506.1 L1199.3 504.4 L1195.8 501.7 L1193.5 499.8 L1190.8 497.6 L1187.8 495.1 L1184.4 492.2 L1181.9 490.1 L1179.3 487.9 L1176.3 485.5 L1173.9 483.5 L1171.3 481.4 L1168.6 479.2 L1165.8 476.8 L1163.4 474.9 L1161.0 472.9 L1158.4 470.8 L1155.8 468.6 L1153.0 466.2 L1151.0 464.4 L1148.9 462.6 L1146.7 460.7 L1144.5 458.7 L1142.2 456.6 L1139.8 454.4 L1137.4 452.1 L1135.3 450.0 L1133.1 447.9 L1130.9 445.8 L1128.6 443.6 L1126.3 441.2 L1123.9 438.7 L1121.3 436.0 L1118.7 433.0 L1116.8 430.9 L1114.9 428.8 L1113.0 426.5 L1111.0 424.2 L1109.0 421.8 L1106.9 419.4 L1104.8 416.8 L1102.6 414.2 L1100.5 411.5 L1098.3 408.8 L1096.0 405.9 L1093.8 403.0 L1092.1 400.7 L1090.3 398.5 L1088.6 396.1 L1086.8 393.7 L1085.0 391.3 L1083.2 388.8 L1081.4 386.3 L1079.5 383.8 L1077.7 381.2 L1075.8 378.6 L1073.9 375.9 L1072.0 373.2 L1070.1 370.4 L1068.2 367.6 L1066.3 364.8 L1064.4 361.9 L1062.9 359.6 L1061.3 357.3 L1059.7 354.9 L1058.2 352.4 L1056.6 350.0 L1055.0 347.5 L1053.4 345.0 L1051.8 342.4 L1050.2 339.9 L1048.5 337.3 L1046.9 334.7 L1045.3 332.1 L1043.7 329.4 L1042.1 326.8 L1040.5 324.1 L1038.9 321.5 L1037.3 318.8 L1035.7 316.2 L1034.1 313.5 L1032.5 310.8 L1031.0 308.3 L1029.5 305.7 L1028.0 303.1 L1026.5 300.5 L1025.0 297.9 L1023.5 295.3 L1022.0 292.6 L1020.4 290.0 L1018.9 287.3 L1017.4 284.7 L1015.9 282.0 L1014.5 279.3 L1013.0 276.7 L1011.5 274.0 L1010.1 271.3 L1008.7 268.7 L1007.2 266.0 L1005.9 263.4 L1004.5 260.8 L1003.1 258.2 L1001.8 255.6 L1000.4 252.7 L999.0 249.9 L997.6 247.0 L996.2 244.1 L994.8 241.2 L993.5 238.4 L992.2 235.5 L990.9 232.7 L989.6 229.8 L988.3 227.0 L987.1 224.2 L985.8 221.4 L984.6 218.6 L983.4 215.8 L982.3 213.1 L981.1 210.4 L980.0 207.7 L978.9 205.1 L977.9 202.5 L976.5 199.3 L975.2 196.0 L974.0 192.9 L972.8 189.7 L971.6 186.6 L970.4 183.5 L969.3 180.4 L968.2 177.4 L967.2 174.5 L966.1 171.5 L965.2 168.7 L964.2 165.9 L963.3 163.1 L962.4 160.4 L961.6 157.8 L960.5 154.3 L959.5 150.9 L958.6 147.6 L957.7 144.4 L956.9 141.3 L956.1 138.3 L955.4 135.4 L954.8 132.6 L954.2 129.8 L953.7 127.2 L953.2 124.6 L952.5 120.7 L952.0 117.0 L951.6 113.5 L951.3 110.3 L951.2 107.2 L951.1 104.2 L951.1 101.4 L951.4 97.7 L951.8 94.2 L952.5 91.1 L953.3 88.2 L954.3 85.5 L955.9 82.5 L957.7 79.8 L959.7 77.5 L962.0 75.4 L965.3 73.2 L968.9 71.6 L972.8 70.3 L975.9 69.5 L979.1 69.0 L982.4 68.7 L985.7 68.4 L989.1 68.1 L992.6 68.0 L996.2 67.9 L999.8 67.9 L1003.3 67.9 L1006.8 67.9 L1010.4 68.0 L1014.0 68.1 L1017.7 68.2 L1021.4 68.4 L1025.1 68.5 L1028.9 68.8 L1032.0 69.0 L1035.2 69.2 L1038.4 69.4 L1041.7 69.7 L1045.0 69.9 L1048.3 70.2 L1051.8 70.5 L1055.2 70.8 L1058.8 71.1 L1062.4 71.5 L1065.5 71.8 L1068.6 72.1 L1071.7 72.4 L1075.0 72.7 L1078.2 73.1 L1081.6 73.4 L1084.5 73.7 L1087.4 74.0 L1090.4 74.4 L1093.4 74.7 L1096.5 75.0 L1099.6 75.4 L1102.8 75.7 L1106.0 76.1 L1109.3 76.4 L1112.6 76.8 L1115.9 77.2 L1119.3 77.5 L1122.8 77.9 L1126.3 78.3 L1129.4 78.7 L1132.6 79.0 L1135.7 79.4 L1139.0 79.8 L1142.2 80.1 L1145.6 80.5 L1148.9 80.9 L1152.3 81.3 L1155.3 81.6 L1158.4 82.0 L1161.5 82.3 L1164.7 82.7 L1167.9 83.0 L1171.1 83.4 L1174.3 83.8 L1177.6 84.2 L1180.9 84.5 L1183.9 84.9 L1186.9 85.2 L1190.0 85.6 L1193.0 85.9 L1196.1 86.3 L1199.3 86.7 L1202.4 87.0 L1205.6 87.4 L1208.8 87.7 L1212.0 88.1 L1215.0 88.5 L1218.0 88.8 L1221.0 89.1 L1224.0 89.5 L1227.0 89.8 L1230.1 90.2 L1233.2 90.6 L1236.3 90.9 L1239.4 91.3 L1242.5 91.6 L1245.7 92.0 L1248.8 92.4 L1252.0 92.7 L1255.2 93.1 L1258.4 93.4 L1261.6 93.8 L1264.9 94.2 L1268.1 94.6 L1271.4 94.9 L1274.7 95.3 L1278.0 95.7 L1281.2 96.1 L1284.2 96.4 L1287.3 96.8 L1290.3 97.1 L1293.4 97.5 L1296.4 97.8 L1299.5 98.2 L1302.6 98.5 L1305.6 98.9 L1308.7 99.2 L1311.7 99.6 L1314.8 99.9 L1317.8 100.3 L1321.0 100.7 L1324.3 101.0 L1327.5 101.4 L1330.8 101.8 L1334.0 102.1 L1337.2 102.5 L1340.4 102.9 L1343.6 103.3 L1346.8 103.6 L1350.0 104.0 L1353.2 104.4 L1356.4 104.7 L1359.5 105.1 L1362.7 105.5 L1365.9 105.8 L1369.1 106.2 L1372.2 106.5 L1375.4 106.9 L1378.5 107.3 L1381.6 107.6 L1384.6 108.0 L1387.6 108.3 L1390.9 108.7 L1394.2 109.1 L1397.4 109.4 L1400.5 109.8 L1403.7 110.1 L1406.8 110.5 L1409.9 110.8 L1412.9 111.2 L1415.9 111.5 L1418.9 111.9 L1422.1 112.2 L1425.3 112.6 L1428.5 113.0 L1431.6 113.3 L1434.7 113.7 L1437.7 114.0 L1440.7 114.4 L1443.6 114.7 L1446.5 115.1 L1450.1 115.5 L1453.6 115.9 L1457.0 116.3 L1460.4 116.7 L1463.6 117.0 L1466.8 117.4 L1470.0 117.8 L1473.5 118.2 L1476.9 118.6 L1480.2 118.9 L1483.4 119.3 L1486.6 119.7 L1489.6 120.0 L1493.2 120.4 L1496.6 120.8 L1499.9 121.2 L1503.1 121.6 L1506.2 121.9 L1510.0 122.4 L1513.7 122.8 L1517.2 123.2 L1520.6 123.6 L1523.7 123.9 L1526.5 124.3 L1529.4 124.6 L1532.7 125.0 L1536.0 125.4 L1539.7 125.8 L1543.5 126.2 L1547.1 126.6 L1550.2 127.0 L1554.2 127.4 L1557.5 127.8 L1560.6 128.2 L1563.9 128.5 L1567.1 128.9 L1569.6 129.2 L1573.1 129.6 Z"/></clipPath><g clip-path="url(#pclip)"><g clip-path="url(#lclip)"><rect x="974" y="57" width="64" height="8" fill="#090"/><rect x="950" y="65" width="104" height="8" fill="#090"/><rect x="1054" y="65" width="16" height="8" fill="#190"/><rect x="1070" y="65" width="16" height="8" fill="#290"/><rect x="1086" y="65" width="8" height="8" fill="#390"/><rect x="1094" y="65" width="16" height="8" fill="#490"/><rect x="1110" y="65" width="8" height="8" fill="#590"/><rect x="1118" y="65" width="8" height="8" fill="#690"/><rect x="950" y="73" width="32" height="8" fill="#091"/><rect x="982" y="73" width="64" height="8" fill="#090"/><rect x="1046" y="73" width="8" height="8" fill="#0f0"/><rect x="1054" y="73" width="8" height="8" fill="#1f0"/><rect x="1062" y="73" width="8" height="8" fill="#2f0"/><rect x="1070" y="73" width="16" height="8" fill="#290"/><rect x="1086" y="73" width="8" height="8" fill="#390"/><rect x="1094" y="73" width="16" height="8" fill="#490"/><rect x="1110" y="73" width="8" height="8" fill="#590"/><rect x="1118" y="73" width="16" height="8" fill="#690"/><rect x="1134" y="73" width="8" height="8" fill="#790"/><rect x="1142" y="73" width="8" height="8" fill="#890"/><rect x="1150" y="73" width="8" height="8" fill="#990"/><rect x="1158" y="73" width="16" height="8" fill="#980"/><rect x="1174" y="73" width="8" height="8" fill="#970"/><rect x="1182" y="73" width="8" height="8" fill="#960"/><rect x="950" y="81" width="104" height="8" fill="#091"/><rect x="1054" y="81" width="8" height="8" fill="#1f1"/><rect x="1062" y="81" width="8" height="8" fill="#2f1"/><rect x="1070" y="81" width="8" height="8" fill="#3f1"/><rect x="1078" y="81" width="8" height="8" fill="#4f1"/><rect x="1086" y="81" width="8" height="8" fill="#5f1"/><rect x="1094" y="81" width="8" height="8" fill="#6f1"/><rect x="1102" y="81" width="8" height="8" fill="#7f1"/><rect x="1110" y="81" width="8" height="8" fill="#8f0"/><rect x="1118" y="81" width="8" height="8" fill="#9f0"/><rect x="1126" y="81" width="8" height="8" fill="#bf0"/><rect x="1134" y="81" width="8" height="8" fill="#cf0"/><rect x="1142" y="81" width="8" height="8" fill="#df0"/><rect x="1150" y="81" width="8" height="8" fill="#990"/><rect x="1158" y="81" width="8" height="8" fill="#980"/><rect x="1166" y="81" width="16" height="8" fill="#970"/><rect x="1182" y="81" width="16" height="8" fill="#960"/><rect x="1198" y="81" width="16" height="8" fill="#950"/><rect x="1214" y="81" width="32" height="8" fill="#940"/><rect x="1246" y="81" width="16" height="8" fill="#930"/><rect x="950" y="89" width="32" height="8" fill="#092"/><rect x="982" y="89" width="72" height="8" fill="#091"/><rect x="1054" y="89" width="8" height="8" fill="#1f2"/><rect x="1062" y="89" width="8" height="8" fill="#2f2"/><rect x="1070" y="89" width="8" height="8" fill="#3f2"/><rect x="1078" y="89" width="8" height="8" fill="#4f2"/><rect x="1086" y="89" width="8" height="8" fill="#5f2"/><rect x="1094" y="89" width="8" height="8" fill="#6f2"/><rect x="1102" y="89" width="8" height="8" fill="#7f2"/><rect x="1110" y="89" width="8" height="8" fill="#8f2"/><rect x="1118" y="89" width="8" height="8" fill="#9f2"/><rect x="1126" y="89" width="8" height="8" fill="#bf1"/><rect x="1134" y="89" width="8" height="8" fill="#cf1"/><rect x="1142" y="89" width="8" height="8" fill="#df1"/><rect x="1150" y="89" width="8" height="8" fill="#ff1"/><rect x="1158" y="89" width="8" height="8" fill="#fd1"/><rect x="1166" y="89" width="8" height="8" fill="#fc1"/><rect x="1174" y="89" width="8" height="8" fill="#fb1"/><rect x="1182" y="89" width="8" height="8" fill="#fa0"/><rect x="1190" y="89" width="16" height="8" fill="#f90"/><rect x="1206" y="89" width="8" height="8" fill="#f80"/><rect x="1214" y="89" width="16" height="8" fill="#f70"/><rect x="1230" y="89" width="8" height="8" fill="#940"/><rect x="1238" y="89" width="40" height="8" fill="#930"/><rect x="1278" y="89" width="48" height="8" fill="#920"/><rect x="1326" y="89" width="8" height="8" fill="#910"/><rect x="950" y="97" width="104" height="8" fill="#092"/><rect x="1054" y="97" width="8" height="8" fill="#0f3"/><rect x="1062" y="97" width="8" height="8" fill="#1f3"/><rect x="1070" y="97" width="8" height="8" fill="#2f3"/><rect x="1078" y="97" width="8" height="8" fill="#3f3"/><rect x="1086" y="97" width="8" height="8" fill="#4f3"/><rect x="1094" y="97" width="8" height="8" fill="#6f3"/><rect x="1102" y="97" width="8" height="8" fill="#7f3"/><rect x="1110" y="97" width="8" height="8" fill="#8f3"/><rect x="1118" y="97" width="8" height="8" fill="#9f3"/><rect x="1126" y="97" width="8" height="8" fill="#bf3"/><rect x="1134" y="97" width="8" height="8" fill="#cf3"/><rect x="1142" y="97" width="8" height="8" fill="#ef3"/><rect x="1150" y="97" width="8" height="8" fill="#ff2"/><rect x="1158" y="97" width="8" height="8" fill="#fd2"/><rect x="1166" y="97" width="8" height="8" fill="#fc2"/><rect x="1174" y="97" width="8" height="8" fill="#fb2"/><rect x="1182" y="97" width="8" height="8" fill="#fa1"/><rect x="1190" y="97" width="8" height="8" fill="#f91"/><rect x="1198" y="97" width="16" height="8" fill="#f81"/><rect x="1214" y="97" width="16" height="8" fill="#f71"/><rect x="1230" y="97" width="16" height="8" fill="#f61"/><rect x="1246" y="97" width="16" height="8" fill="#f50"/><rect x="1262" y="97" width="24" height="8" fill="#f40"/><rect x="1286" y="97" width="24" height="8" fill="#f30"/><rect x="1310" y="97" width="8" height="8" fill="#920"/><rect x="1318" y="97" width="80" height="8" fill="#910"/><rect x="950" y="105" width="104" height="8" fill="#093"/><rect x="1054" y="105" width="8" height="8" fill="#0f4"/><rect x="1062" y="105" width="8" height="8" fill="#1f4"/><rect x="1070" y="105" width="8" height="8" fill="#2f4"/><rect x="1078" y="105" width="8" height="8" fill="#3f4"/><rect x="1086" y="105" width="8" height="8" fill="#4f4"/><rect x="1094" y="105" width="8" height="8" fill="#5f4"/><rect x="1102" y="105" width="8" height="8" fill="#7f4"/><rect x="1110" y="105" width="8" height="8" fill="#8f4"/><rect x="1118" y="105" width="8" height="8" fill="#9f4"/><rect x="1126" y="105" width="8" height="8" fill="#bf4"/><rect x="1134" y="105" width="8" height="8" fill="#cf4"/><rect x="1142" y="105" width="8" height="8" fill="#ef4"/><rect x="1150" y="105" width="8" height="8" fill="#ff4"/><rect x="1158" y="105" width="8" height="8" fill="#fd3"/><rect x="1166" y="105" width="8" height="8" fill="#fc3"/><rect x="1174" y="105" width="8" height="8" fill="#fb3"/><rect x="1182" y="105" width="8" height="8" fill="#fa2"/><rect x="1190" y="105" width="8" height="8" fill="#f92"/><rect x="1198" y="105" width="16" height="8" fill="#f82"/><rect x="1214" y="105" width="8" height="8" fill="#f72"/><rect x="1222" y="105" width="8" height="8" fill="#f62"/><rect x="1230" y="105" width="8" height="8" fill="#f61"/><rect x="1238" y="105" width="24" height="8" fill="#f51"/><rect x="1262" y="105" width="24" height="8" fill="#f41"/><rect x="1286" y="105" width="16" height="8" fill="#f31"/><rect x="1302" y="105" width="16" height="8" fill="#f30"/><rect x="1318" y="105" width="40" height="8" fill="#f20"/><rect x="1358" y="105" width="32" height="8" fill="#f10"/><rect x="1390" y="105" width="80" height="8" fill="#900"/><rect x="950" y="113" width="112" height="8" fill="#093"/><rect x="1062" y="113" width="8" height="8" fill="#1f5"/><rect x="1070" y="113" width="8" height="8" fill="#2f5"/><rect x="1078" y="113" width="8" height="8" fill="#3f5"/><rect x="1086" y="113" width="8" height="8" fill="#4f5"/><rect x="1094" y="113" width="8" height="8" fill="#5f5"/><rect x="1102" y="113" width="8" height="8" fill="#7f5"/><rect x="1110" y="113" width="8" height="8" fill="#8f5"/><rect x="1118" y="113" width="8" height="8" fill="#9f5"/><rect x="1126" y="113" width="8" height="8" fill="#bf5"/><rect x="1134" y="113" width="8" height="8" fill="#cf5"/><rect x="1142" y="113" width="8" height="8" fill="#ef5"/><rect x="1150" y="113" width="8" height="8" fill="#fe5"/><rect x="1158" y="113" width="8" height="8" fill="#fd5"/><rect x="1166" y="113" width="8" height="8" fill="#fc4"/><rect x="1174" y="113" width="8" height="8" fill="#fb4"/><rect x="1182" y="113" width="8" height="8" fill="#fa4"/><rect x="1190" y="113" width="8" height="8" fill="#f93"/><rect x="1198" y="113" width="8" height="8" fill="#f83"/><rect x="1206" y="113" width="8" height="8" fill="#f73"/><rect x="1214" y="113" width="8" height="8" fill="#f72"/><rect x="1222" y="113" width="16" height="8" fill="#f62"/><rect x="1238" y="113" width="16" height="8" fill="#f52"/><rect x="1254" y="113" width="16" height="8" fill="#f42"/><rect x="1270" y="113" width="8" height="8" fill="#f41"/><rect x="1278" y="113" width="32" height="8" fill="#f31"/><rect x="1310" y="113" width="40" height="8" fill="#f21"/><rect x="1350" y="113" width="16" height="8" fill="#f11"/><rect x="1366" y="113" width="40" height="8" fill="#f10"/><rect x="1406" y="113" width="40" height="8" fill="#f00"/><rect x="1446" y="113" width="96" height="8" fill="#900"/><rect x="950" y="121" width="112" height="8" fill="#094"/><rect x="1062" y="121" width="8" height="8" fill="#1f7"/><rect x="1070" y="121" width="8" height="8" fill="#2f7"/><rect x="1078" y="121" width="8" height="8" fill="#3f7"/><rect x="1086" y="121" width="8" height="8" fill="#4f7"/><rect x="1094" y="121" width="8" height="8" fill="#5f7"/><rect x="1102" y="121" width="8" height="8" fill="#7f7"/><rect x="1110" y="121" width="8" height="8" fill="#8f7"/><rect x="1118" y="121" width="8" height="8" fill="#9f7"/><rect x="1126" y="121" width="8" height="8" fill="#bf7"/><rect x="1134" y="121" width="8" height="8" fill="#cf7"/><rect x="1142" y="121" width="8" height="8" fill="#ef7"/><rect x="1150" y="121" width="8" height="8" fill="#fe7"/><rect x="1158" y="121" width="8" height="8" fill="#fd6"/><rect x="1166" y="121" width="8" height="8" fill="#fb6"/><rect x="1174" y="121" width="8" height="8" fill="#fa5"/><rect x="1182" y="121" width="8" height="8" fill="#f95"/><rect x="1190" y="121" width="8" height="8" fill="#f94"/><rect x="1198" y="121" width="8" height="8" fill="#f84"/><rect x="1206" y="121" width="8" height="8" fill="#f74"/><rect x="1214" y="121" width="8" height="8" fill="#f73"/><rect x="1222" y="121" width="8" height="8" fill="#f63"/><rect x="1230" y="121" width="16" height="8" fill="#f53"/><rect x="1246" y="121" width="8" height="8" fill="#f52"/><rect x="1254" y="121" width="24" height="8" fill="#f42"/><rect x="1278" y="121" width="24" height="8" fill="#f32"/><rect x="1302" y="121" width="8" height="8" fill="#f22"/><rect x="1310" y="121" width="32" height="8" fill="#f21"/><rect x="1342" y="121" width="56" height="8" fill="#f11"/><rect x="1398" y="121" width="24" height="8" fill="#f01"/><rect x="1422" y="121" width="16" height="8" fill="#f00"/><rect x="1438" y="121" width="120" height="8" fill="#900"/><rect x="950" y="129" width="64" height="8" fill="#094"/><rect x="1014" y="129" width="48" height="8" fill="#095"/><rect x="1062" y="129" width="8" height="8" fill="#0f8"/><rect x="1070" y="129" width="8" height="8" fill="#2f8"/><rect x="1078" y="129" width="8" height="8" fill="#3f8"/><rect x="1086" y="129" width="8" height="8" fill="#4f8"/><rect x="1094" y="129" width="8" height="8" fill="#5f8"/><rect x="1102" y="129" width="8" height="8" fill="#6f8"/><rect x="1110" y="129" width="8" height="8" fill="#8f8"/><rect x="1118" y="129" width="8" height="8" fill="#9f8"/><rect x="1126" y="129" width="8" height="8" fill="#bf8"/><rect x="1134" y="129" width="8" height="8" fill="#cf9"/><rect x="1142" y="129" width="8" height="8" fill="#ef9"/><rect x="1150" y="129" width="8" height="8" fill="#fe8"/><rect x="1158" y="129" width="8" height="8" fill="#fd7"/><rect x="1166" y="129" width="8" height="8" fill="#fb7"/><rect x="1174" y="129" width="8" height="8" fill="#fa6"/><rect x="1182" y="129" width="8" height="8" fill="#f96"/><rect x="1190" y="129" width="16" height="8" fill="#f85"/><rect x="1206" y="129" width="8" height="8" fill="#f75"/><rect x="1214" y="129" width="16" height="8" fill="#f64"/><rect x="1230" y="129" width="8" height="8" fill="#f54"/><rect x="1238" y="129" width="8" height="8" fill="#f53"/><rect x="1246" y="129" width="24" height="8" fill="#f43"/><rect x="1270" y="129" width="8" height="8" fill="#f33"/><rect x="1278" y="129" width="24" height="8" fill="#f32"/><rect x="1302" y="129" width="32" height="8" fill="#f22"/><rect x="1334" y="129" width="16" height="8" fill="#f12"/><rect x="1350" y="129" width="40" height="8" fill="#f11"/><rect x="1390" y="129" width="32" height="8" fill="#f01"/><rect x="1422" y="129" width="8" height="8" fill="#901"/><rect x="1430" y="129" width="128" height="8" fill="#900"/><rect x="950" y="137" width="112" height="8" fill="#095"/><rect x="1062" y="137" width="8" height="8" fill="#0f9"/><rect x="1070" y="137" width="8" height="8" fill="#1f9"/><rect x="1078" y="137" width="8" height="8" fill="#2f9"/><rect x="1086" y="137" width="8" height="8" fill="#4fa"/><rect x="1094" y="137" width="8" height="8" fill="#5fa"/><rect x="1102" y="137" width="8" height="8" fill="#6fa"/><rect x="1110" y="137" width="8" height="8" fill="#8fa"/><rect x="1118" y="137" width="8" height="8" fill="#9fa"/><rect x="1126" y="137" width="8" height="8" fill="#bfa"/><rect x="1134" y="137" width="8" height="8" fill="#cfa"/><rect x="1142" y="137" width="8" height="8" fill="#efa"/><rect x="1150" y="137" width="8" height="8" fill="#fea"/><rect x="1158" y="137" width="8" height="8" fill="#fc9"/><rect x="1166" y="137" width="8" height="8" fill="#fb8"/><rect x="1174" y="137" width="8" height="8" fill="#fa7"/><rect x="1182" y="137" width="8" height="8" fill="#f97"/><rect x="1190" y="137" width="8" height="8" fill="#f86"/><rect x="1198" y="137" width="8" height="8" fill="#f76"/><rect x="1206" y="137" width="8" height="8" fill="#f75"/><rect x="1214" y="137" width="16" height="8" fill="#f65"/><rect x="1230" y="137" width="16" height="8" fill="#f54"/><rect x="1246" y="137" width="16" height="8" fill="#f44"/><rect x="1262" y="137" width="8" height="8" fill="#f43"/><rect x="1270" y="137" width="24" height="8" fill="#f33"/><rect x="1294" y="137" width="16" height="8" fill="#f23"/><rect x="1310" y="137" width="24" height="8" fill="#f22"/><rect x="1334" y="137" width="48" height="8" fill="#f12"/><rect x="1382" y="137" width="8" height="8" fill="#f02"/><rect x="1390" y="137" width="24" height="8" fill="#f01"/><rect x="1414" y="137" width="64" height="8" fill="#901"/><rect x="1478" y="137" width="80" height="8" fill="#900"/><rect x="950" y="145" width="112" height="8" fill="#096"/><rect x="1062" y="145" width="8" height="8" fill="#0fb"/><rect x="1070" y="145" width="8" height="8" fill="#1fb"/><rect x="1078" y="145" width="8" height="8" fill="#2fb"/><rect x="1086" y="145" width="8" height="8" fill="#4fb"/><rect x="1094" y="145" width="8" height="8" fill="#5fb"/><rect x="1102" y="145" width="8" height="8" fill="#6fb"/><rect x="1110" y="145" width="8" height="8" fill="#8fc"/><rect x="1118" y="145" width="8" height="8" fill="#9fc"/><rect x="1126" y="145" width="8" height="8" fill="#bfc"/><rect x="1134" y="145" width="8" height="8" fill="#dfc"/><rect x="1142" y="145" width="8" height="8" fill="#efc"/><rect x="1150" y="145" width="8" height="8" fill="#fec"/><rect x="1158" y="145" width="8" height="8" fill="#fca"/><rect x="1166" y="145" width="8" height="8" fill="#fba"/><rect x="1174" y="145" width="8" height="8" fill="#fa9"/><rect x="1182" y="145" width="8" height="8" fill="#f98"/><rect x="1190" y="145" width="8" height="8" fill="#f87"/><rect x="1198" y="145" width="8" height="8" fill="#f77"/><rect x="1206" y="145" width="8" height="8" fill="#f76"/><rect x="1214" y="145" width="8" height="8" fill="#f66"/><rect x="1222" y="145" width="8" height="8" fill="#f56"/><rect x="1230" y="145" width="8" height="8" fill="#f55"/><rect x="1238" y="145" width="16" height="8" fill="#f45"/><rect x="1254" y="145" width="8" height="8" fill="#f44"/><rect x="1262" y="145" width="24" height="8" fill="#f34"/><rect x="1286" y="145" width="8" height="8" fill="#f24"/><rect x="1294" y="145" width="32" height="8" fill="#f23"/><rect x="1326" y="145" width="16" height="8" fill="#f13"/><rect x="1342" y="145" width="32" height="8" fill="#f12"/><rect x="1374" y="145" width="32" height="8" fill="#f02"/><rect x="1406" y="145" width="128" height="8" fill="#901"/><rect x="1534" y="145" width="24" height="8" fill="#900"/><rect x="950" y="153" width="40" height="8" fill="#096"/><rect x="990" y="153" width="80" height="8" fill="#097"/><rect x="1070" y="153" width="8" height="8" fill="#1fc"/><rect x="1078" y="153" width="8" height="8" fill="#2fc"/><rect x="1086" y="153" width="8" height="8" fill="#3fd"/><rect x="1094" y="153" width="8" height="8" fill="#5fd"/><rect x="1102" y="153" width="8" height="8" fill="#6fd"/><rect x="1110" y="153" width="8" height="8" fill="#8fd"/><rect x="1118" y="153" width="8" height="8" fill="#9fe"/><rect x="1126" y="153" width="8" height="8" fill="#bfe"/><rect x="1134" y="153" width="8" height="8" fill="#dfe"/><rect x="1142" y="153" width="8" height="8" fill="#ffe"/><rect x="1150" y="153" width="8" height="8" fill="#fed"/><rect x="1158" y="153" width="8" height="8" fill="#fcc"/><rect x="1166" y="153" width="8" height="8" fill="#fbb"/><rect x="1174" y="153" width="8" height="8" fill="#faa"/><rect x="1182" y="153" width="8" height="8" fill="#f99"/><rect x="1190" y="153" width="8" height="8" fill="#f89"/><rect x="1198" y="153" width="8" height="8" fill="#f78"/><rect x="1206" y="153" width="16" height="8" fill="#f67"/><rect x="1222" y="153" width="16" height="8" fill="#f56"/><rect x="1238" y="153" width="8" height="8" fill="#f46"/><rect x="1246" y="153" width="8" height="8" fill="#f45"/><rect x="1254" y="153" width="24" height="8" fill="#f35"/><rect x="1278" y="153" width="8" height="8" fill="#f34"/><rect x="1286" y="153" width="32" height="8" fill="#f24"/><rect x="1318" y="153" width="48" height="8" fill="#f13"/><rect x="1366" y="153" width="8" height="8" fill="#f03"/><rect x="1374" y="153" width="24" height="8" fill="#f02"/><rect x="1398" y="153" width="160" height="8" fill="#901"/><rect x="950" y="161" width="64" height="8" fill="#097"/><rect x="1014" y="161" width="56" height="8" fill="#098"/><rect x="1070" y="161" width="8" height="8" fill="#1fe"/><rect x="1078" y="161" width="8" height="8" fill="#2fe"/><rect x="1086" y="161" width="8" height="8" fill="#3fe"/><rect x="1094" y="161" width="8" height="8" fill="#5ff"/><rect x="1102" y="161" width="8" height="8" fill="#6ff"/><rect x="1110" y="161" width="8" height="8" fill="#7ff"/><rect x="1118" y="161" width="8" height="8" fill="#9ef"/><rect x="1126" y="161" width="8" height="8" fill="#aef"/><rect x="1134" y="161" width="8" height="8" fill="#cef"/><rect x="1142" y="161" width="8" height="8" fill="#def"/><rect x="1150" y="161" width="8" height="8" fill="#fdf"/><rect x="1158" y="161" width="8" height="8" fill="#fce"/><rect x="1166" y="161" width="8" height="8" fill="#fac"/><rect x="1174" y="161" width="8" height="8" fill="#f9b"/><rect x="1182" y="161" width="8" height="8" fill="#f8a"/><rect x="1190" y="161" width="8" height="8" fill="#f7a"/><rect x="1198" y="161" width="8" height="8" fill="#f79"/><rect x="1206" y="161" width="8" height="8" fill="#f68"/><rect x="1214" y="161" width="8" height="8" fill="#f58"/><rect x="1222" y="161" width="8" height="8" fill="#f57"/><rect x="1230" y="161" width="16" height="8" fill="#f47"/><rect x="1246" y="161" width="8" height="8" fill="#f46"/><rect x="1254" y="161" width="16" height="8" fill="#f36"/><rect x="1270" y="161" width="8" height="8" fill="#f35"/><rect x="1278" y="161" width="24" height="8" fill="#f25"/><rect x="1302" y="161" width="8" height="8" fill="#f24"/><rect x="1310" y="161" width="32" height="8" fill="#f14"/><rect x="1342" y="161" width="16" height="8" fill="#f13"/><rect x="1358" y="161" width="32" height="8" fill="#f03"/><rect x="1390" y="161" width="16" height="8" fill="#902"/><rect x="1406" y="161" width="152" height="8" fill="#901"/><rect x="958" y="169" width="64" height="8" fill="#098"/><rect x="1022" y="169" width="48" height="8" fill="#099"/><rect x="1070" y="169" width="8" height="8" fill="#0ef"/><rect x="1078" y="169" width="8" height="8" fill="#2ef"/><rect x="1086" y="169" width="8" height="8" fill="#3ef"/><rect x="1094" y="169" width="8" height="8" fill="#4ef"/><rect x="1102" y="169" width="8" height="8" fill="#5df"/><rect x="1110" y="169" width="8" height="8" fill="#6df"/><rect x="1118" y="169" width="8" height="8" fill="#8df"/><rect x="1126" y="169" width="8" height="8" fill="#9cf"/><rect x="1134" y="169" width="8" height="8" fill="#acf"/><rect x="1142" y="169" width="8" height="8" fill="#ccf"/><rect x="1150" y="169" width="8" height="8" fill="#dcf"/><rect x="1158" y="169" width="8" height="8" fill="#fbf"/><rect x="1166" y="169" width="8" height="8" fill="#fae"/><rect x="1174" y="169" width="8" height="8" fill="#f9d"/><rect x="1182" y="169" width="8" height="8" fill="#f8c"/><rect x="1190" y="169" width="8" height="8" fill="#f7b"/><rect x="1198" y="169" width="8" height="8" fill="#f7a"/><rect x="1206" y="169" width="8" height="8" fill="#f69"/><rect x="1214" y="169" width="8" height="8" fill="#f59"/><rect x="1222" y="169" width="8" height="8" fill="#f58"/><rect x="1230" y="169" width="8" height="8" fill="#f48"/><rect x="1238" y="169" width="8" height="8" fill="#f47"/><rect x="1246" y="169" width="16" height="8" fill="#f37"/><rect x="1262" y="169" width="8" height="8" fill="#f36"/><rect x="1270" y="169" width="16" height="8" fill="#f26"/><rect x="1286" y="169" width="16" height="8" fill="#f25"/><rect x="1302" y="169" width="16" height="8" fill="#f15"/><rect x="1318" y="169" width="32" height="8" fill="#f14"/><rect x="1350" y="169" width="24" height="8" fill="#f04"/><rect x="1374" y="169" width="8" height="8" fill="#f03"/><rect x="1382" y="169" width="56" height="8" fill="#902"/><rect x="1438" y="169" width="112" height="8" fill="#901"/><rect x="958" y="177" width="8" height="8" fill="#098"/><rect x="966" y="177" width="64" height="8" fill="#099"/><rect x="1030" y="177" width="40" height="8" fill="#089"/><rect x="1070" y="177" width="8" height="8" fill="#0df"/><rect x="1078" y="177" width="8" height="8" fill="#1df"/><rect x="1086" y="177" width="8" height="8" fill="#2cf"/><rect x="1094" y="177" width="8" height="8" fill="#3cf"/><rect x="1102" y="177" width="8" height="8" fill="#5cf"/><rect x="1110" y="177" width="8" height="8" fill="#6cf"/><rect x="1118" y="177" width="8" height="8" fill="#7bf"/><rect x="1126" y="177" width="8" height="8" fill="#8bf"/><rect x="1134" y="177" width="8" height="8" fill="#9bf"/><rect x="1142" y="177" width="8" height="8" fill="#baf"/><rect x="1150" y="177" width="8" height="8" fill="#caf"/><rect x="1158" y="177" width="8" height="8" fill="#daf"/><rect x="1166" y="177" width="8" height="8" fill="#eaf"/><rect x="1174" y="177" width="8" height="8" fill="#f9e"/><rect x="1182" y="177" width="8" height="8" fill="#f8d"/><rect x="1190" y="177" width="8" height="8" fill="#f7c"/><rect x="1198" y="177" width="16" height="8" fill="#f6b"/><rect x="1214" y="177" width="8" height="8" fill="#f5a"/><rect x="1222" y="177" width="8" height="8" fill="#f59"/><rect x="1230" y="177" width="8" height="8" fill="#f49"/><rect x="1238" y="177" width="8" height="8" fill="#f48"/><rect x="1246" y="177" width="8" height="8" fill="#f38"/><rect x="1254" y="177" width="16" height="8" fill="#f37"/><rect x="1270" y="177" width="8" height="8" fill="#f27"/><rect x="1278" y="177" width="24" height="8" fill="#f26"/><rect x="1302" y="177" width="8" height="8" fill="#f16"/><rect x="1310" y="177" width="32" height="8" fill="#f15"/><rect x="1342" y="177" width="32" height="8" fill="#f04"/><rect x="1374" y="177" width="96" height="8" fill="#902"/><rect x="1470" y="177" width="72" height="8" fill="#901"/><rect x="958" y="185" width="16" height="8" fill="#099"/><rect x="974" y="185" width="64" height="8" fill="#089"/><rect x="1038" y="185" width="40" height="8" fill="#079"/><rect x="1078" y="185" width="8" height="8" fill="#1bf"/><rect x="1086" y="185" width="8" height="8" fill="#2bf"/><rect x="1094" y="185" width="8" height="8" fill="#3bf"/><rect x="1102" y="185" width="8" height="8" fill="#4bf"/><rect x="1110" y="185" width="8" height="8" fill="#5af"/><rect x="1118" y="185" width="8" height="8" fill="#6af"/><rect x="1126" y="185" width="8" height="8" fill="#7af"/><rect x="1134" y="185" width="8" height="8" fill="#8af"/><rect x="1142" y="185" width="8" height="8" fill="#99f"/><rect x="1150" y="185" width="8" height="8" fill="#b9f"/><rect x="1158" y="185" width="8" height="8" fill="#c9f"/><rect x="1166" y="185" width="8" height="8" fill="#d8f"/><rect x="1174" y="185" width="8" height="8" fill="#e8f"/><rect x="1182" y="185" width="8" height="8" fill="#f8f"/><rect x="1190" y="185" width="8" height="8" fill="#f7d"/><rect x="1198" y="185" width="8" height="8" fill="#f6c"/><rect x="1206" y="185" width="8" height="8" fill="#f5c"/><rect x="1214" y="185" width="8" height="8" fill="#f5b"/><rect x="1222" y="185" width="16" height="8" fill="#f4a"/><rect x="1238" y="185" width="16" height="8" fill="#f39"/><rect x="1254" y="185" width="8" height="8" fill="#f38"/><rect x="1262" y="185" width="8" height="8" fill="#f28"/><rect x="1270" y="185" width="24" height="8" fill="#f27"/><rect x="1294" y="185" width="32" height="8" fill="#f16"/><rect x="1326" y="185" width="8" height="8" fill="#f15"/><rect x="1334" y="185" width="32" height="8" fill="#f05"/><rect x="1366" y="185" width="16" height="8" fill="#903"/><rect x="1382" y="185" width="120" height="8" fill="#902"/><rect x="1502" y="185" width="32" height="8" fill="#901"/><rect x="966" y="193" width="32" height="8" fill="#089"/><rect x="998" y="193" width="64" height="8" fill="#079"/><rect x="1062" y="193" width="16" height="8" fill="#069"/><rect x="1078" y="193" width="16" height="8" fill="#1af"/><rect x="1094" y="193" width="8" height="8" fill="#2af"/><rect x="1102" y="193" width="8" height="8" fill="#39f"/><rect x="1110" y="193" width="8" height="8" fill="#49f"/><rect x="1118" y="193" width="8" height="8" fill="#59f"/><rect x="1126" y="193" width="8" height="8" fill="#69f"/><rect x="1134" y="193" width="8" height="8" fill="#78f"/><rect x="1142" y="193" width="8" height="8" fill="#98f"/><rect x="1150" y="193" width="8" height="8" fill="#a8f"/><rect x="1158" y="193" width="8" height="8" fill="#b8f"/><rect x="1166" y="193" width="8" height="8" fill="#c7f"/><rect x="1174" y="193" width="8" height="8" fill="#d7f"/><rect x="1182" y="193" width="8" height="8" fill="#e7f"/><rect x="1190" y="193" width="8" height="8" fill="#f6f"/><rect x="1198" y="193" width="8" height="8" fill="#f6e"/><rect x="1206" y="193" width="8" height="8" fill="#f5d"/><rect x="1214" y="193" width="8" height="8" fill="#f5c"/><rect x="1222" y="193" width="16" height="8" fill="#f4b"/><rect x="1238" y="193" width="8" height="8" fill="#f3a"/><rect x="1246" y="193" width="8" height="8" fill="#f39"/><rect x="1254" y="193" width="8" height="8" fill="#f29"/><rect x="1262" y="193" width="24" height="8" fill="#f28"/><rect x="1286" y="193" width="24" height="8" fill="#f17"/><rect x="1310" y="193" width="16" height="8" fill="#f16"/><rect x="1326" y="193" width="16" height="8" fill="#f06"/><rect x="1342" y="193" width="8" height="8" fill="#f05"/><rect x="1350" y="193" width="56" height="8" fill="#903"/><rect x="1406" y="193" width="120" height="8" fill="#902"/><rect x="966" y="201" width="56" height="8" fill="#079"/><rect x="1022" y="201" width="56" height="8" fill="#069"/><rect x="1078" y="201" width="8" height="8" fill="#09f"/><rect x="1086" y="201" width="8" height="8" fill="#19f"/><rect x="1094" y="201" width="8" height="8" fill="#29f"/><rect x="1102" y="201" width="8" height="8" fill="#39f"/><rect x="1110" y="201" width="8" height="8" fill="#48f"/><rect x="1118" y="201" width="8" height="8" fill="#58f"/><rect x="1126" y="201" width="8" height="8" fill="#68f"/><rect x="1134" y="201" width="8" height="8" fill="#78f"/><rect x="1142" y="201" width="8" height="8" fill="#87f"/><rect x="1150" y="201" width="8" height="8" fill="#97f"/><rect x="1158" y="201" width="8" height="8" fill="#a7f"/><rect x="1166" y="201" width="8" height="8" fill="#b7f"/><rect x="1174" y="201" width="8" height="8" fill="#c6f"/><rect x="1182" y="201" width="8" height="8" fill="#d6f"/><rect x="1190" y="201" width="8" height="8" fill="#e6f"/><rect x="1198" y="201" width="8" height="8" fill="#f5f"/><rect x="1206" y="201" width="8" height="8" fill="#f5e"/><rect x="1214" y="201" width="8" height="8" fill="#f4d"/><rect x="1222" y="201" width="8" height="8" fill="#f4c"/><rect x="1230" y="201" width="8" height="8" fill="#f3c"/><rect x="1238" y="201" width="8" height="8" fill="#f3b"/><rect x="1246" y="201" width="8" height="8" fill="#f3a"/><rect x="1254" y="201" width="8" height="8" fill="#f2a"/><rect x="1262" y="201" width="16" height="8" fill="#f29"/><rect x="1278" y="201" width="24" height="8" fill="#f18"/><rect x="1302" y="201" width="16" height="8" fill="#f17"/><rect x="1318" y="201" width="8" height="8" fill="#f07"/><rect x="1326" y="201" width="16" height="8" fill="#f06"/><rect x="1342" y="201" width="8" height="8" fill="#904"/><rect x="1350" y="201" width="80" height="8" fill="#903"/><rect x="1430" y="201" width="88" height="8" fill="#902"/><rect x="974" y="209" width="8" height="8" fill="#079"/><rect x="982" y="209" width="72" height="8" fill="#069"/><rect x="1054" y="209" width="24" height="8" fill="#059"/><rect x="1078" y="209" width="8" height="8" fill="#08f"/><rect x="1086" y="209" width="8" height="8" fill="#18f"/><rect x="1094" y="209" width="8" height="8" fill="#28f"/><rect x="1102" y="209" width="8" height="8" fill="#38f"/><rect x="1110" y="209" width="8" height="8" fill="#37f"/><rect x="1118" y="209" width="8" height="8" fill="#47f"/><rect x="1126" y="209" width="8" height="8" fill="#57f"/><rect x="1134" y="209" width="8" height="8" fill="#67f"/><rect x="1142" y="209" width="8" height="8" fill="#77f"/><rect x="1150" y="209" width="8" height="8" fill="#86f"/><rect x="1158" y="209" width="8" height="8" fill="#96f"/><rect x="1166" y="209" width="8" height="8" fill="#a6f"/><rect x="1174" y="209" width="8" height="8" fill="#b6f"/><rect x="1182" y="209" width="8" height="8" fill="#c5f"/><rect x="1190" y="209" width="8" height="8" fill="#d5f"/><rect x="1198" y="209" width="8" height="8" fill="#e5f"/><rect x="1206" y="209" width="8" height="8" fill="#f5f"/><rect x="1214" y="209" width="8" height="8" fill="#f4e"/><rect x="1222" y="209" width="8" height="8" fill="#f4d"/><rect x="1230" y="209" width="8" height="8" fill="#f3d"/><rect x="1238" y="209" width="8" height="8" fill="#f3c"/><rect x="1246" y="209" width="16" height="8" fill="#f2b"/><rect x="1262" y="209" width="8" height="8" fill="#f2a"/><rect x="1270" y="209" width="8" height="8" fill="#f1a"/><rect x="1278" y="209" width="16" height="8" fill="#f19"/><rect x="1294" y="209" width="16" height="8" fill="#f18"/><rect x="1310" y="209" width="8" height="8" fill="#f08"/><rect x="1318" y="209" width="16" height="8" fill="#f07"/><rect x="1334" y="209" width="32" height="8" fill="#904"/><rect x="1366" y="209" width="88" height="8" fill="#903"/><rect x="1454" y="209" width="56" height="8" fill="#902"/><rect x="974" y="217" width="48" height="8" fill="#069"/><rect x="1022" y="217" width="64" height="8" fill="#059"/><rect x="1086" y="217" width="16" height="8" fill="#17f"/><rect x="1102" y="217" width="8" height="8" fill="#27f"/><rect x="1110" y="217" width="8" height="8" fill="#37f"/><rect x="1118" y="217" width="8" height="8" fill="#47f"/><rect x="1126" y="217" width="8" height="8" fill="#56f"/><rect x="1134" y="217" width="16" height="8" fill="#66f"/><rect x="1150" y="217" width="8" height="8" fill="#76f"/><rect x="1158" y="217" width="8" height="8" fill="#85f"/><rect x="1166" y="217" width="8" height="8" fill="#95f"/><rect x="1174" y="217" width="8" height="8" fill="#a5f"/><rect x="1182" y="217" width="8" height="8" fill="#b5f"/><rect x="1190" y="217" width="8" height="8" fill="#c4f"/><rect x="1198" y="217" width="8" height="8" fill="#d4f"/><rect x="1206" y="217" width="8" height="8" fill="#e4f"/><rect x="1214" y="217" width="8" height="8" fill="#f4f"/><rect x="1222" y="217" width="16" height="8" fill="#f3e"/><rect x="1238" y="217" width="8" height="8" fill="#f2d"/><rect x="1246" y="217" width="8" height="8" fill="#f2c"/><rect x="1254" y="217" width="16" height="8" fill="#f2b"/><rect x="1270" y="217" width="16" height="8" fill="#f1a"/><rect x="1286" y="217" width="16" height="8" fill="#f19"/><rect x="1302" y="217" width="8" height="8" fill="#f09"/><rect x="1310" y="217" width="16" height="8" fill="#f08"/><rect x="1326" y="217" width="8" height="8" fill="#905"/><rect x="1334" y="217" width="56" height="8" fill="#904"/><rect x="1390" y="217" width="88" height="8" fill="#903"/><rect x="1478" y="217" width="24" height="8" fill="#902"/><rect x="974" y="225" width="8" height="8" fill="#069"/><rect x="982" y="225" width="80" height="8" fill="#059"/><rect x="1062" y="225" width="24" height="8" fill="#049"/><rect x="1086" y="225" width="8" height="8" fill="#07f"/><rect x="1094" y="225" width="8" height="8" fill="#17f"/><rect x="1102" y="225" width="8" height="8" fill="#26f"/><rect x="1110" y="225" width="8" height="8" fill="#36f"/><rect x="1118" y="225" width="16" height="8" fill="#46f"/><rect x="1134" y="225" width="8" height="8" fill="#55f"/><rect x="1142" y="225" width="8" height="8" fill="#65f"/><rect x="1150" y="225" width="8" height="8" fill="#75f"/><rect x="1158" y="225" width="16" height="8" fill="#85f"/><rect x="1174" y="225" width="8" height="8" fill="#94f"/><rect x="1182" y="225" width="8" height="8" fill="#a4f"/><rect x="1190" y="225" width="8" height="8" fill="#b4f"/><rect x="1198" y="225" width="8" height="8" fill="#c4f"/><rect x="1206" y="225" width="8" height="8" fill="#d3f"/><rect x="1214" y="225" width="16" height="8" fill="#e3f"/><rect x="1230" y="225" width="8" height="8" fill="#f3f"/><rect x="1238" y="225" width="8" height="8" fill="#f2e"/><rect x="1246" y="225" width="8" height="8" fill="#f2d"/><rect x="1254" y="225" width="8" height="8" fill="#f2c"/><rect x="1262" y="225" width="8" height="8" fill="#f1c"/><rect x="1270" y="225" width="16" height="8" fill="#f1b"/><rect x="1286" y="225" width="8" height="8" fill="#f1a"/><rect x="1294" y="225" width="8" height="8" fill="#f0a"/><rect x="1302" y="225" width="16" height="8" fill="#f09"/><rect x="1318" y="225" width="32" height="8" fill="#905"/><rect x="1350" y="225" width="56" height="8" fill="#904"/><rect x="1406" y="225" width="88" height="8" fill="#903"/><rect x="982" y="233" width="48" height="8" fill="#059"/><rect x="1030" y="233" width="56" height="8" fill="#049"/><rect x="1086" y="233" width="8" height="8" fill="#06f"/><rect x="1094" y="233" width="8" height="8" fill="#16f"/><rect x="1102" y="233" width="16" height="8" fill="#26f"/><rect x="1118" y="233" width="8" height="8" fill="#35f"/><rect x="1126" y="233" width="8" height="8" fill="#45f"/><rect x="1134" y="233" width="16" height="8" fill="#55f"/><rect x="1150" y="233" width="8" height="8" fill="#65f"/><rect x="1158" y="233" width="8" height="8" fill="#74f"/><rect x="1166" y="233" width="8" height="8" fill="#84f"/><rect x="1174" y="233" width="16" height="8" fill="#94f"/><rect x="1190" y="233" width="8" height="8" fill="#a3f"/><rect x="1198" y="233" width="8" height="8" fill="#b3f"/><rect x="1206" y="233" width="8" height="8" fill="#c3f"/><rect x="1214" y="233" width="8" height="8" fill="#d3f"/><rect x="1222" y="233" width="16" height="8" fill="#e2f"/><rect x="1238" y="233" width="8" height="8" fill="#f2f"/><rect x="1246" y="233" width="8" height="8" fill="#f2e"/><rect x="1254" y="233" width="16" height="8" fill="#f1d"/><rect x="1270" y="233" width="8" height="8" fill="#f1c"/><rect x="1278" y="233" width="8" height="8" fill="#f1b"/><rect x="1286" y="233" width="8" height="8" fill="#f0b"/><rect x="1294" y="233" width="16" height="8" fill="#f0a"/><rect x="1310" y="233" width="8" height="8" fill="#906"/><rect x="1318" y="233" width="48" height="8" fill="#905"/><rect x="1366" y="233" width="56" height="8" fill="#904"/><rect x="1422" y="233" width="64" height="8" fill="#903"/><rect x="982" y="241" width="24" height="8" fill="#059"/><rect x="1006" y="241" width="72" height="8" fill="#049"/><rect x="1078" y="241" width="8" height="8" fill="#039"/><rect x="1086" y="241" width="8" height="8" fill="#06f"/><rect x="1094" y="241" width="16" height="8" fill="#15f"/><rect x="1110" y="241" width="8" height="8" fill="#25f"/><rect x="1118" y="241" width="8" height="8" fill="#35f"/><rect x="1126" y="241" width="8" height="8" fill="#45f"/><rect x="1134" y="241" width="8" height="8" fill="#44f"/><rect x="1142" y="241" width="8" height="8" fill="#54f"/><rect x="1150" y="241" width="16" height="8" fill="#64f"/><rect x="1166" y="241" width="8" height="8" fill="#74f"/><rect x="1174" y="241" width="8" height="8" fill="#83f"/><rect x="1182" y="241" width="16" height="8" fill="#93f"/><rect x="1198" y="241" width="8" height="8" fill="#a3f"/><rect x="1206" y="241" width="8" height="8" fill="#b3f"/><rect x="1214" y="241" width="8" height="8" fill="#c2f"/><rect x="1222" y="241" width="16" height="8" fill="#d2f"/><rect x="1238" y="241" width="8" height="8" fill="#e2f"/><rect x="1246" y="241" width="8" height="8" fill="#f1f"/><rect x="1254" y="241" width="8" height="8" fill="#f1e"/><rect x="1262" y="241" width="16" height="8" fill="#f1d"/><rect x="1278" y="241" width="16" height="8" fill="#f0c"/><rect x="1294" y="241" width="8" height="8" fill="#f0b"/><rect x="1302" y="241" width="32" height="8" fill="#906"/><rect x="1334" y="241" width="48" height="8" fill="#905"/><rect x="1382" y="241" width="64" height="8" fill="#904"/><rect x="1446" y="241" width="32" height="8" fill="#903"/><rect x="990" y="249" width="64" height="8" fill="#049"/><rect x="1054" y="249" width="40" height="8" fill="#039"/><rect x="1094" y="249" width="16" height="8" fill="#15f"/><rect x="1110" y="249" width="8" height="8" fill="#25f"/><rect x="1118" y="249" width="16" height="8" fill="#34f"/><rect x="1134" y="249" width="8" height="8" fill="#44f"/><rect x="1142" y="249" width="16" height="8" fill="#54f"/><rect x="1158" y="249" width="8" height="8" fill="#63f"/><rect x="1166" y="249" width="16" height="8" fill="#73f"/><rect x="1182" y="249" width="8" height="8" fill="#83f"/><rect x="1190" y="249" width="8" height="8" fill="#93f"/><rect x="1198" y="249" width="16" height="8" fill="#a2f"/><rect x="1214" y="249" width="8" height="8" fill="#b2f"/><rect x="1222" y="249" width="8" height="8" fill="#c2f"/><rect x="1230" y="249" width="8" height="8" fill="#d2f"/><rect x="1238" y="249" width="8" height="8" fill="#d1f"/><rect x="1246" y="249" width="8" height="8" fill="#e1f"/><rect x="1254" y="249" width="8" height="8" fill="#f1f"/><rect x="1262" y="249" width="8" height="8" fill="#f1e"/><rect x="1270" y="249" width="8" height="8" fill="#f0e"/><rect x="1278" y="249" width="8" height="8" fill="#f0d"/><rect x="1286" y="249" width="24" height="8" fill="#907"/><rect x="1310" y="249" width="40" height="8" fill="#906"/><rect x="1350" y="249" width="48" height="8" fill="#905"/><rect x="1398" y="249" width="64" height="8" fill="#904"/><rect x="1462" y="249" width="8" height="8" fill="#903"/><rect x="990" y="257" width="40" height="8" fill="#049"/><rect x="1030" y="257" width="64" height="8" fill="#039"/><rect x="1094" y="257" width="8" height="8" fill="#04f"/><rect x="1102" y="257" width="8" height="8" fill="#14f"/><rect x="1110" y="257" width="16" height="8" fill="#24f"/><rect x="1126" y="257" width="8" height="8" fill="#34f"/><rect x="1134" y="257" width="8" height="8" fill="#44f"/><rect x="1142" y="257" width="8" height="8" fill="#43f"/><rect x="1150" y="257" width="8" height="8" fill="#53f"/><rect x="1158" y="257" width="16" height="8" fill="#63f"/><rect x="1174" y="257" width="8" height="8" fill="#73f"/><rect x="1182" y="257" width="16" height="8" fill="#82f"/><rect x="1198" y="257" width="8" height="8" fill="#92f"/><rect x="1206" y="257" width="16" height="8" fill="#a2f"/><rect x="1222" y="257" width="8" height="8" fill="#b1f"/><rect x="1230" y="257" width="8" height="8" fill="#c1f"/><rect x="1238" y="257" width="16" height="8" fill="#d1f"/><rect x="1254" y="257" width="8" height="8" fill="#e1f"/><rect x="1262" y="257" width="8" height="8" fill="#f0f"/><rect x="1270" y="257" width="8" height="8" fill="#f0e"/><rect x="1278" y="257" width="24" height="8" fill="#908"/><rect x="1302" y="257" width="24" height="8" fill="#907"/><rect x="1326" y="257" width="32" height="8" fill="#906"/><rect x="1358" y="257" width="56" height="8" fill="#905"/><rect x="1414" y="257" width="48" height="8" fill="#904"/><rect x="998" y="265" width="16" height="8" fill="#049"/><rect x="1014" y="265" width="80" height="8" fill="#039"/><rect x="1094" y="265" width="8" height="8" fill="#04f"/><rect x="1102" y="265" width="16" height="8" fill="#14f"/><rect x="1118" y="265" width="8" height="8" fill="#24f"/><rect x="1126" y="265" width="16" height="8" fill="#33f"/><rect x="1142" y="265" width="8" height="8" fill="#43f"/><rect x="1150" y="265" width="16" height="8" fill="#53f"/><rect x="1166" y="265" width="16" height="8" fill="#62f"/><rect x="1182" y="265" width="8" height="8" fill="#72f"/><rect x="1190" y="265" width="16" height="8" fill="#82f"/><rect x="1206" y="265" width="8" height="8" fill="#92f"/><rect x="1214" y="265" width="16" height="8" fill="#a1f"/><rect x="1230" y="265" width="8" height="8" fill="#b1f"/><rect x="1238" y="265" width="8" height="8" fill="#c1f"/><rect x="1246" y="265" width="8" height="8" fill="#d1f"/><rect x="1254" y="265" width="8" height="8" fill="#d0f"/><rect x="1262" y="265" width="8" height="8" fill="#e0f"/><rect x="1270" y="265" width="16" height="8" fill="#909"/><rect x="1286" y="265" width="24" height="8" fill="#908"/><rect x="1310" y="265" width="24" height="8" fill="#907"/><rect x="1334" y="265" width="40" height="8" fill="#906"/><rect x="1374" y="265" width="56" height="8" fill="#905"/><rect x="1430" y="265" width="24" height="8" fill="#904"/><rect x="998" y="273" width="72" height="8" fill="#039"/><rect x="1070" y="273" width="24" height="8" fill="#029"/><rect x="1094" y="273" width="8" height="8" fill="#04f"/><rect x="1102" y="273" width="8" height="8" fill="#14f"/><rect x="1110" y="273" width="8" height="8" fill="#13f"/><rect x="1118" y="273" width="16" height="8" fill="#23f"/><rect x="1134" y="273" width="8" height="8" fill="#33f"/><rect x="1142" y="273" width="8" height="8" fill="#43f"/><rect x="1150" y="273" width="8" height="8" fill="#42f"/><rect x="1158" y="273" width="16" height="8" fill="#52f"/><rect x="1174" y="273" width="8" height="8" fill="#62f"/><rect x="1182" y="273" width="16" height="8" fill="#72f"/><rect x="1198" y="273" width="8" height="8" fill="#81f"/><rect x="1206" y="273" width="16" height="8" fill="#91f"/><rect x="1222" y="273" width="16" height="8" fill="#a1f"/><rect x="1238" y="273" width="8" height="8" fill="#b0f"/><rect x="1246" y="273" width="16" height="8" fill="#c0f"/><rect x="1262" y="273" width="16" height="8" fill="#809"/><rect x="1278" y="273" width="16" height="8" fill="#909"/><rect x="1294" y="273" width="24" height="8" fill="#908"/><rect x="1318" y="273" width="32" height="8" fill="#907"/><rect x="1350" y="273" width="40" height="8" fill="#906"/><rect x="1390" y="273" width="48" height="8" fill="#905"/><rect x="1438" y="273" width="8" height="8" fill="#904"/><rect x="1006" y="281" width="48" height="8" fill="#039"/><rect x="1054" y="281" width="48" height="8" fill="#029"/><rect x="1102" y="281" width="8" height="8" fill="#03f"/><rect x="1110" y="281" width="8" height="8" fill="#13f"/><rect x="1118" y="281" width="16" height="8" fill="#23f"/><rect x="1134" y="281" width="8" height="8" fill="#33f"/><rect x="1142" y="281" width="8" height="8" fill="#32f"/><rect x="1150" y="281" width="16" height="8" fill="#42f"/><rect x="1166" y="281" width="8" height="8" fill="#52f"/><rect x="1174" y="281" width="8" height="8" fill="#62f"/><rect x="1182" y="281" width="8" height="8" fill="#61f"/><rect x="1190" y="281" width="16" height="8" fill="#71f"/><rect x="1206" y="281" width="8" height="8" fill="#81f"/><rect x="1214" y="281" width="16" height="8" fill="#91f"/><rect x="1230" y="281" width="8" height="8" fill="#a0f"/><rect x="1238" y="281" width="16" height="8" fill="#b0f"/><rect x="1254" y="281" width="16" height="8" fill="#709"/><rect x="1270" y="281" width="16" height="8" fill="#809"/><rect x="1286" y="281" width="24" height="8" fill="#909"/><rect x="1310" y="281" width="24" height="8" fill="#908"/><rect x="1334" y="281" width="24" height="8" fill="#907"/><rect x="1358" y="281" width="40" height="8" fill="#906"/><rect x="1398" y="281" width="40" height="8" fill="#905"/><rect x="1006" y="289" width="32" height="8" fill="#039"/><rect x="1038" y="289" width="64" height="8" fill="#029"/><rect x="1102" y="289" width="8" height="8" fill="#03f"/><rect x="1110" y="289" width="16" height="8" fill="#13f"/><rect x="1126" y="289" width="8" height="8" fill="#22f"/><rect x="1134" y="289" width="16" height="8" fill="#32f"/><rect x="1150" y="289" width="16" height="8" fill="#42f"/><rect x="1166" y="289" width="8" height="8" fill="#52f"/><rect x="1174" y="289" width="8" height="8" fill="#51f"/><rect x="1182" y="289" width="16" height="8" fill="#61f"/><rect x="1198" y="289" width="8" height="8" fill="#71f"/><rect x="1206" y="289" width="16" height="8" fill="#81f"/><rect x="1222" y="289" width="16" height="8" fill="#90f"/><rect x="1238" y="289" width="8" height="8" fill="#a0f"/><rect x="1246" y="289" width="8" height="8" fill="#609"/><rect x="1254" y="289" width="24" height="8" fill="#709"/><rect x="1278" y="289" width="16" height="8" fill="#809"/><rect x="1294" y="289" width="24" height="8" fill="#909"/><rect x="1318" y="289" width="24" height="8" fill="#908"/><rect x="1342" y="289" width="32" height="8" fill="#907"/><rect x="1374" y="289" width="40" height="8" fill="#906"/><rect x="1414" y="289" width="16" height="8" fill="#905"/><rect x="1014" y="297" width="8" height="8" fill="#039"/><rect x="1022" y="297" width="80" height="8" fill="#029"/><rect x="1102" y="297" width="8" height="8" fill="#03f"/><rect x="1110" y="297" width="16" height="8" fill="#12f"/><rect x="1126" y="297" width="16" height="8" fill="#22f"/><rect x="1142" y="297" width="16" height="8" fill="#32f"/><rect x="1158" y="297" width="16" height="8" fill="#41f"/><rect x="1174" y="297" width="8" height="8" fill="#51f"/><rect x="1182" y="297" width="16" height="8" fill="#61f"/><rect x="1198" y="297" width="16" height="8" fill="#71f"/><rect x="1214" y="297" width="16" height="8" fill="#80f"/><rect x="1230" y="297" width="8" height="8" fill="#90f"/><rect x="1238" y="297" width="24" height="8" fill="#609"/><rect x="1262" y="297" width="24" height="8" fill="#709"/><rect x="1286" y="297" width="16" height="8" fill="#809"/><rect x="1302" y="297" width="24" height="8" fill="#909"/><rect x="1326" y="297" width="24" height="8" fill="#908"/><rect x="1350" y="297" width="32" height="8" fill="#907"/><rect x="1382" y="297" width="40" height="8" fill="#906"/><rect x="1022" y="305" width="72" height="8" fill="#029"/><rect x="1094" y="305" width="8" height="8" fill="#019"/><rect x="1102" y="305" width="8" height="8" fill="#02f"/><rect x="1110" y="305" width="16" height="8" fill="#12f"/><rect x="1126" y="305" width="16" height="8" fill="#22f"/><rect x="1142" y="305" width="8" height="8" fill="#32f"/><rect x="1150" y="305" width="8" height="8" fill="#31f"/><rect x="1158" y="305" width="16" height="8" fill="#41f"/><rect x="1174" y="305" width="16" height="8" fill="#51f"/><rect x="1190" y="305" width="8" height="8" fill="#61f"/><rect x="1198" y="305" width="8" height="8" fill="#60f"/><rect x="1206" y="305" width="16" height="8" fill="#70f"/><rect x="1222" y="305" width="24" height="8" fill="#509"/><rect x="1246" y="305" width="24" height="8" fill="#609"/><rect x="1270" y="305" width="24" height="8" fill="#709"/><rect x="1294" y="305" width="24" height="8" fill="#809"/><rect x="1318" y="305" width="16" height="8" fill="#909"/><rect x="1334" y="305" width="32" height="8" fill="#908"/><rect x="1366" y="305" width="32" height="8" fill="#907"/><rect x="1398" y="305" width="16" height="8" fill="#906"/><rect x="1022" y="313" width="56" height="8" fill="#029"/><rect x="1078" y="313" width="24" height="8" fill="#019"/><rect x="1102" y="313" width="16" height="8" fill="#02f"/><rect x="1118" y="313" width="16" height="8" fill="#12f"/><rect x="1134" y="313" width="16" height="8" fill="#21f"/><rect x="1150" y="313" width="16" height="8" fill="#31f"/><rect x="1166" y="313" width="16" height="8" fill="#41f"/><rect x="1182" y="313" width="8" height="8" fill="#51f"/><rect x="1190" y="313" width="8" height="8" fill="#50f"/><rect x="1198" y="313" width="16" height="8" fill="#60f"/><rect x="1214" y="313" width="16" height="8" fill="#409"/><rect x="1230" y="313" width="24" height="8" fill="#509"/><rect x="1254" y="313" width="24" height="8" fill="#609"/><rect x="1278" y="313" width="24" height="8" fill="#709"/><rect x="1302" y="313" width="24" height="8" fill="#809"/><rect x="1326" y="313" width="16" height="8" fill="#909"/><rect x="1342" y="313" width="32" height="8" fill="#908"/><rect x="1374" y="313" width="32" height="8" fill="#907"/><rect x="1030" y="321" width="40" height="8" fill="#029"/><rect x="1070" y="321" width="40" height="8" fill="#019"/><rect x="1110" y="321" width="8" height="8" fill="#02f"/><rect x="1118" y="321" width="8" height="8" fill="#12f"/><rect x="1126" y="321" width="8" height="8" fill="#11f"/><rect x="1134" y="321" width="16" height="8" fill="#21f"/><rect x="1150" y="321" width="16" height="8" fill="#31f"/><rect x="1166" y="321" width="16" height="8" fill="#41f"/><rect x="1182" y="321" width="16" height="8" fill="#50f"/><rect x="1198" y="321" width="8" height="8" fill="#60f"/><rect x="1206" y="321" width="24" height="8" fill="#409"/><rect x="1230" y="321" width="32" height="8" fill="#509"/><rect x="1262" y="321" width="24" height="8" fill="#609"/><rect x="1286" y="321" width="24" height="8" fill="#709"/><rect x="1310" y="321" width="24" height="8" fill="#809"/><rect x="1334" y="321" width="24" height="8" fill="#909"/><rect x="1358" y="321" width="24" height="8" fill="#908"/><rect x="1382" y="321" width="16" height="8" fill="#907"/><rect x="1030" y="329" width="24" height="8" fill="#029"/><rect x="1054" y="329" width="56" height="8" fill="#019"/><rect x="1110" y="329" width="8" height="8" fill="#01f"/><rect x="1118" y="329" width="16" height="8" fill="#11f"/><rect x="1134" y="329" width="24" height="8" fill="#21f"/><rect x="1158" y="329" width="8" height="8" fill="#31f"/><rect x="1166" y="329" width="8" height="8" fill="#30f"/><rect x="1174" y="329" width="16" height="8" fill="#40f"/><rect x="1190" y="329" width="8" height="8" fill="#50f"/><rect x="1198" y="329" width="16" height="8" fill="#309"/><rect x="1214" y="329" width="24" height="8" fill="#409"/><rect x="1238" y="329" width="24" height="8" fill="#509"/><rect x="1262" y="329" width="32" height="8" fill="#609"/><rect x="1294" y="329" width="24" height="8" fill="#709"/><rect x="1318" y="329" width="24" height="8" fill="#809"/><rect x="1342" y="329" width="24" height="8" fill="#909"/><rect x="1366" y="329" width="24" height="8" fill="#908"/><rect x="1038" y="337" width="72" height="8" fill="#019"/><rect x="1110" y="337" width="8" height="8" fill="#01f"/><rect x="1118" y="337" width="24" height="8" fill="#11f"/><rect x="1142" y="337" width="16" height="8" fill="#21f"/><rect x="1158" y="337" width="16" height="8" fill="#30f"/><rect x="1174" y="337" width="16" height="8" fill="#40f"/><rect x="1190" y="337" width="24" height="8" fill="#309"/><rect x="1214" y="337" width="32" height="8" fill="#409"/><rect x="1246" y="337" width="24" height="8" fill="#509"/><rect x="1270" y="337" width="32" height="8" fill="#609"/><rect x="1302" y="337" width="24" height="8" fill="#709"/><rect x="1326" y="337" width="24" height="8" fill="#809"/><rect x="1350" y="337" width="24" height="8" fill="#909"/><rect x="1374" y="337" width="8" height="8" fill="#908"/><rect x="1046" y="345" width="64" height="8" fill="#019"/><rect x="1110" y="345" width="16" height="8" fill="#01f"/><rect x="1126" y="345" width="16" height="8" fill="#11f"/><rect x="1142" y="345" width="8" height="8" fill="#21f"/><rect x="1150" y="345" width="8" height="8" fill="#20f"/><rect x="1158" y="345" width="24" height="8" fill="#30f"/><rect x="1182" y="345" width="8" height="8" fill="#209"/><rect x="1190" y="345" width="32" height="8" fill="#309"/><rect x="1222" y="345" width="32" height="8" fill="#409"/><rect x="1254" y="345" width="24" height="8" fill="#509"/><rect x="1278" y="345" width="32" height="8" fill="#609"/><rect x="1310" y="345" width="24" height="8" fill="#709"/><rect x="1334" y="345" width="24" height="8" fill="#809"/><rect x="1358" y="345" width="16" height="8" fill="#909"/><rect x="1046" y="353" width="72" height="8" fill="#019"/><rect x="1118" y="353" width="8" height="8" fill="#01f"/><rect x="1126" y="353" width="16" height="8" fill="#11f"/><rect x="1142" y="353" width="24" height="8" fill="#20f"/><rect x="1166" y="353" width="8" height="8" fill="#30f"/><rect x="1174" y="353" width="24" height="8" fill="#209"/><rect x="1198" y="353" width="32" height="8" fill="#309"/><rect x="1230" y="353" width="24" height="8" fill="#409"/><rect x="1254" y="353" width="32" height="8" fill="#509"/><rect x="1286" y="353" width="24" height="8" fill="#609"/><rect x="1310" y="353" width="32" height="8" fill="#709"/><rect x="1342" y="353" width="24" height="8" fill="#809"/><rect x="1054" y="361" width="56" height="8" fill="#019"/><rect x="1110" y="361" width="8" height="8" fill="#009"/><rect x="1118" y="361" width="8" height="8" fill="#01f"/><rect x="1126" y="361" width="24" height="8" fill="#10f"/><rect x="1150" y="361" width="16" height="8" fill="#20f"/><rect x="1166" y="361" width="32" height="8" fill="#209"/><rect x="1198" y="361" width="32" height="8" fill="#309"/><rect x="1230" y="361" width="32" height="8" fill="#409"/><rect x="1262" y="361" width="32" height="8" fill="#509"/><rect x="1294" y="361" width="24" height="8" fill="#609"/><rect x="1318" y="361" width="32" height="8" fill="#709"/><rect x="1350" y="361" width="8" height="8" fill="#809"/><rect x="1062" y="369" width="32" height="8" fill="#019"/><rect x="1094" y="369" width="24" height="8" fill="#009"/><rect x="1118" y="369" width="16" height="8" fill="#00f"/><rect x="1134" y="369" width="16" height="8" fill="#10f"/><rect x="1150" y="369" width="24" height="8" fill="#109"/><rect x="1174" y="369" width="32" height="8" fill="#209"/><rect x="1206" y="369" width="32" height="8" fill="#309"/><rect x="1238" y="369" width="32" height="8" fill="#409"/><rect x="1270" y="369" width="32" height="8" fill="#509"/><rect x="1302" y="369" width="24" height="8" fill="#609"/><rect x="1326" y="369" width="24" height="8" fill="#709"/><rect x="1062" y="377" width="24" height="8" fill="#019"/><rect x="1086" y="377" width="32" height="8" fill="#009"/><rect x="1118" y="377" width="16" height="8" fill="#00f"/><rect x="1134" y="377" width="8" height="8" fill="#10f"/><rect x="1142" y="377" width="32" height="8" fill="#109"/><rect x="1174" y="377" width="32" height="8" fill="#209"/><rect x="1206" y="377" width="32" height="8" fill="#309"/><rect x="1238" y="377" width="32" height="8" fill="#409"/><rect x="1270" y="377" width="32" height="8" fill="#509"/><rect x="1302" y="377" width="32" height="8" fill="#609"/><rect x="1334" y="377" width="8" height="8" fill="#709"/><rect x="1070" y="385" width="56" height="8" fill="#009"/><rect x="1126" y="385" width="8" height="8" fill="#00f"/><rect x="1134" y="385" width="8" height="8" fill="#009"/><rect x="1142" y="385" width="32" height="8" fill="#109"/><rect x="1174" y="385" width="40" height="8" fill="#209"/><rect x="1214" y="385" width="32" height="8" fill="#309"/><rect x="1246" y="385" width="32" height="8" fill="#409"/><rect x="1278" y="385" width="32" height="8" fill="#509"/><rect x="1310" y="385" width="24" height="8" fill="#609"/><rect x="1078" y="393" width="64" height="8" fill="#009"/><rect x="1142" y="393" width="40" height="8" fill="#109"/><rect x="1182" y="393" width="32" height="8" fill="#209"/><rect x="1214" y="393" width="40" height="8" fill="#309"/><rect x="1254" y="393" width="32" height="8" fill="#409"/><rect x="1286" y="393" width="32" height="8" fill="#509"/><rect x="1318" y="393" width="8" height="8" fill="#609"/><rect x="1078" y="401" width="72" height="8" fill="#009"/><rect x="1150" y="401" width="32" height="8" fill="#109"/><rect x="1182" y="401" width="40" height="8" fill="#209"/><rect x="1222" y="401" width="32" height="8" fill="#309"/><rect x="1254" y="401" width="40" height="8" fill="#409"/><rect x="1294" y="401" width="24" height="8" fill="#509"/><rect x="1086" y="409" width="64" height="8" fill="#009"/><rect x="1150" y="409" width="40" height="8" fill="#109"/><rect x="1190" y="409" width="32" height="8" fill="#209"/><rect x="1222" y="409" width="40" height="8" fill="#309"/><rect x="1262" y="409" width="32" height="8" fill="#409"/><rect x="1294" y="409" width="16" height="8" fill="#509"/><rect x="1094" y="417" width="56" height="8" fill="#009"/><rect x="1150" y="417" width="40" height="8" fill="#109"/><rect x="1190" y="417" width="40" height="8" fill="#209"/><rect x="1230" y="417" width="40" height="8" fill="#309"/><rect x="1270" y="417" width="32" height="8" fill="#409"/><rect x="1102" y="425" width="56" height="8" fill="#009"/><rect x="1158" y="425" width="40" height="8" fill="#109"/><rect x="1198" y="425" width="32" height="8" fill="#209"/><rect x="1230" y="425" width="40" height="8" fill="#309"/><rect x="1270" y="425" width="24" height="8" fill="#409"/><rect x="1110" y="433" width="48" height="8" fill="#009"/><rect x="1158" y="433" width="40" height="8" fill="#109"/><rect x="1198" y="433" width="40" height="8" fill="#209"/><rect x="1238" y="433" width="40" height="8" fill="#309"/><rect x="1278" y="433" width="8" height="8" fill="#409"/><rect x="1118" y="441" width="40" height="8" fill="#009"/><rect x="1158" y="441" width="40" height="8" fill="#109"/><rect x="1198" y="441" width="40" height="8" fill="#209"/><rect x="1238" y="441" width="40" height="8" fill="#309"/><rect x="1126" y="449" width="32" height="8" fill="#009"/><rect x="1158" y="449" width="48" height="8" fill="#109"/><rect x="1206" y="449" width="40" height="8" fill="#209"/><rect x="1246" y="449" width="32" height="8" fill="#309"/><rect x="1134" y="457" width="32" height="8" fill="#009"/><rect x="1166" y="457" width="40" height="8" fill="#109"/><rect x="1206" y="457" width="48" height="8" fill="#209"/><rect x="1254" y="457" width="16" height="8" fill="#309"/><rect x="1142" y="465" width="24" height="8" fill="#009"/><rect x="1166" y="465" width="48" height="8" fill="#109"/><rect x="1214" y="465" width="40" height="8" fill="#209"/><rect x="1254" y="465" width="8" height="8" fill="#309"/><rect x="1150" y="473" width="16" height="8" fill="#009"/><rect x="1166" y="473" width="48" height="8" fill="#109"/><rect x="1214" y="473" width="40" height="8" fill="#209"/><rect x="1158" y="481" width="16" height="8" fill="#009"/><rect x="1174" y="481" width="40" height="8" fill="#109"/><rect x="1214" y="481" width="32" height="8" fill="#209"/><rect x="1166" y="489" width="8" height="8" fill="#009"/><rect x="1174" y="489" width="48" height="8" fill="#109"/><rect x="1222" y="489" width="16" height="8" fill="#209"/><rect x="1174" y="497" width="48" height="8" fill="#109"/><rect x="1222" y="497" width="8" height="8" fill="#209"/><rect x="1190" y="505" width="32" height="8" fill="#109"/></g></g>
</svg>
<canvas id="cie" width="601" height="463"></canvas>
<svg width="1560" height="861" viewBox="0 0 1560 861">
<rect x="1141.3" y="152.8" width="12.4" height="12.4" fill="none" stroke="#f4f4f4" stroke-width="1.5"/>
<rect x="1141.3" y="152.8" width="12.4" height="12.4" fill="none" stroke="#f4f4f4" stroke-width="1.5"/>
<rect x="1141.3" y="152.8" width="12.4" height="12.4" fill="none" stroke="#f4f4f4" stroke-width="1.5"/>
<rect x="1141.3" y="152.8" width="12.4" height="12.4" fill="none" stroke="#f4f4f4" stroke-width="1.5"/>
<rect x="1141.3" y="152.8" width="12.4" height="12.4" fill="none" stroke="#f4f4f4" stroke-width="1.5"/>
<rect x="1192.6" y="129.5" width="12.4" height="12.4" fill="none" stroke="#f4f4f4" stroke-width="1.5"/>
<rect x="1176.9" y="135.5" width="12.4" height="12.4" fill="none" stroke="#f4f4f4" stroke-width="1.5"/>
<rect x="1117.4" y="189.5" width="12.4" height="12.4" fill="none" stroke="#f4f4f4" stroke-width="1.5"/>
<rect x="1123.8" y="114.4" width="12.4" height="12.4" fill="none" stroke="#f4f4f4" stroke-width="1.5"/>
<rect x="1137.5" y="194.1" width="12.4" height="12.4" fill="none" stroke="#f4f4f4" stroke-width="1.5"/>
<rect x="1098.4" y="147.9" width="12.4" height="12.4" fill="none" stroke="#f4f4f4" stroke-width="1.5"/>
<rect x="1242.4" y="101.5" width="12.4" height="12.4" fill="none" stroke="#f4f4f4" stroke-width="1.5"/>
<rect x="1170.4" y="213.0" width="12.4" height="12.4" fill="none" stroke="#f4f4f4" stroke-width="1.5"/>
<rect x="1256.5" y="140.7" width="12.4" height="12.4" fill="none" stroke="#f4f4f4" stroke-width="1.5"/>
<rect x="1232.1" y="186.5" width="12.4" height="12.4" fill="none" stroke="#f4f4f4" stroke-width="1.5"/>
<rect x="1126.8" y="91.5" width="12.4" height="12.4" fill="none" stroke="#f4f4f4" stroke-width="1.5"/>
<rect x="1119.7" y="241.4" width="12.4" height="12.4" fill="none" stroke="#f4f4f4" stroke-width="1.5"/>
<rect x="1121.5" y="292.7" width="12.4" height="12.4" fill="none" stroke="#f4f4f4" stroke-width="1.5"/>
<rect x="1092.7" y="100.6" width="12.4" height="12.4" fill="none" stroke="#f4f4f4" stroke-width="1.5"/>
<rect x="1325.4" y="126.5" width="12.4" height="12.4" fill="none" stroke="#f4f4f4" stroke-width="1.5"/>
<rect x="1079.6" y="195.6" width="12.4" height="12.4" fill="none" stroke="#f4f4f4" stroke-width="1.5"/>
<rect x="1172.8" y="90.7" width="12.4" height="12.4" fill="none" stroke="#f4f4f4" stroke-width="1.5"/>
<rect x="1198.8" y="95.6" width="12.4" height="12.4" fill="none" stroke="#f4f4f4" stroke-width="1.5"/>
<rect x="1439.6" y="107.5" width="12.4" height="12.4" fill="none" stroke="#f4f4f4" stroke-width="1.5"/>
<rect x="1042.6" y="67.3" width="12.4" height="12.4" fill="none" stroke="#f4f4f4" stroke-width="1.5"/>
<rect x="1119.9" y="390.2" width="12.4" height="12.4" fill="none" stroke="#f4f4f4" stroke-width="1.5"/>
<rect x="1064.8" y="163.5" width="12.4" height="12.4" fill="none" stroke="#f4f4f4" stroke-width="1.5"/>
<rect x="1268.2" y="259.4" width="12.4" height="12.4" fill="none" stroke="#f4f4f4" stroke-width="1.5"/>
<rect x="1148.8" y="77.2" width="12.4" height="12.4" fill="none" stroke="#f4f4f4" stroke-width="1.5"/>
<rect x="1242.8" y="100.3" width="12.4" height="12.4" fill="none" stroke="#f4f4f4" stroke-width="1.5"/>
<rect x="1249.1" y="102.6" width="12.4" height="12.4" fill="none" stroke="#f4f4f4" stroke-width="1.5"/>
<rect x="1224.0" y="107.7" width="12.4" height="12.4" fill="none" stroke="#f4f4f4" stroke-width="1.5"/>
<rect x="1236.5" y="111.9" width="12.4" height="12.4" fill="none" stroke="#f4f4f4" stroke-width="1.5"/>
<rect x="1213.3" y="105.8" width="12.4" height="12.4" fill="none" stroke="#f4f4f4" stroke-width="1.5"/>
<rect x="1217.9" y="118.4" width="12.4" height="12.4" fill="none" stroke="#f4f4f4" stroke-width="1.5"/>
<rect x="1213.3" y="120.3" width="12.4" height="12.4" fill="none" stroke="#f4f4f4" stroke-width="1.5"/>
<rect x="1206.8" y="122.1" width="12.4" height="12.4" fill="none" stroke="#f4f4f4" stroke-width="1.5"/>
<rect x="1189.1" y="121.2" width="12.4" height="12.4" fill="none" stroke="#f4f4f4" stroke-width="1.5"/>
<rect x="1193.8" y="114.2" width="12.4" height="12.4" fill="none" stroke="#f4f4f4" stroke-width="1.5"/>
<rect x="1217.8" y="121.8" width="12.4" height="12.4" fill="none" stroke="#f4f4f4" stroke-width="1.5"/>
<rect x="1206.8" y="123.8" width="12.4" height="12.4" fill="none" stroke="#f4f4f4" stroke-width="1.5"/>
<rect x="1193.8" y="124.8" width="12.4" height="12.4" fill="none" stroke="#f4f4f4" stroke-width="1.5"/>
<rect x="1193.8" y="128.6" width="12.4" height="12.4" fill="none" stroke="#f4f4f4" stroke-width="1.5"/>
<rect x="1176.1" y="124.4" width="12.4" height="12.4" fill="none" stroke="#f4f4f4" stroke-width="1.5"/>
<rect x="1176.1" y="134.2" width="12.4" height="12.4" fill="none" stroke="#f4f4f4" stroke-width="1.5"/>
<rect x="1176.1" y="134.2" width="12.4" height="12.4" fill="none" stroke="#f4f4f4" stroke-width="1.5"/>
<rect x="1141.05" y="151.95" width="11.9" height="12" fill="none" stroke="#000" stroke-width="1.9"/>
<rect x="1142.75" y="153.65" width="8.5" height="8.6" fill="none" stroke="#fff" stroke-width="1.4"/>
<circle cx="1146.2" cy="159.2" r="4" fill="#111" stroke="#000" stroke-width="1"/>
<circle cx="1145.9" cy="161.4" r="4.2" fill="#9a9b9e" stroke="#111" stroke-width="1.1"/>
<circle cx="1145.7" cy="161.3" r="4.2" fill="#b2b5b8" stroke="#111" stroke-width="1.1"/>
<circle cx="1145.7" cy="160.7" r="4.2" fill="#cbced1" stroke="#111" stroke-width="1.1"/>
<circle cx="1145.7" cy="160.8" r="4.2" fill="#a8aaad" stroke="#111" stroke-width="1.1"/>
<circle cx="1145.5" cy="160.6" r="4.2" fill="#a9abae" stroke="#111" stroke-width="1.1"/>
<circle cx="1196.5" cy="137.0" r="4.2" fill="#735344" stroke="#111" stroke-width="1.1"/>
<circle cx="1180.7" cy="142.9" r="4.2" fill="#c29581" stroke="#111" stroke-width="1.1"/>
<circle cx="1121.8" cy="198.7" r="4.2" fill="#7a8aa0" stroke="#111" stroke-width="1.1"/>
<circle cx="1129.8" cy="122.1" r="4.2" fill="#5a6a44" stroke="#111" stroke-width="1.1"/>
<circle cx="1140.9" cy="202.6" r="4.2" fill="#8c8ca8" stroke="#111" stroke-width="1.1"/>
<circle cx="1103.1" cy="156.6" r="4.2" fill="#90aaa4" stroke="#111" stroke-width="1.1"/>
<circle cx="1245.5" cy="108.2" r="4.2" fill="#c88a50" stroke="#111" stroke-width="1.1"/>
<circle cx="1172.7" cy="219.2" r="4.2" fill="#5a4468" stroke="#111" stroke-width="1.1"/>
<circle cx="1258.5" cy="146.4" r="4.2" fill="#a86870" stroke="#111" stroke-width="1.1"/>
<circle cx="1234.4" cy="192.4" r="4.2" fill="#b06890" stroke="#111" stroke-width="1.1"/>
<circle cx="1133.0" cy="99.1" r="4.2" fill="#a8b060" stroke="#111" stroke-width="1.1"/>
<circle cx="1121.4" cy="251.3" r="4.2" fill="#50609a" stroke="#111" stroke-width="1.1"/>
<circle cx="1124.4" cy="302.1" r="4.2" fill="#404c80" stroke="#111" stroke-width="1.1"/>
<circle cx="1097.5" cy="108.2" r="4.2" fill="#5a7a50" stroke="#111" stroke-width="1.1"/>
<circle cx="1323.6" cy="132.7" r="4.2" fill="#9a4040" stroke="#111" stroke-width="1.1"/>
<circle cx="1083.5" cy="206.1" r="4.2" fill="#3a7a8a" stroke="#111" stroke-width="1.1"/>
<circle cx="1177.5" cy="97.4" r="4.2" fill="#e0c060" stroke="#111" stroke-width="1.1"/>
<circle cx="1204.4" cy="102.5" r="4.2" fill="#d8a850" stroke="#111" stroke-width="1.1"/>
<circle cx="1433.2" cy="113.5" r="4.2" fill="#ff0000" stroke="#111" stroke-width="1.1"/>
<circle cx="1047.4" cy="74.3" r="4.2" fill="#00ff00" stroke="#111" stroke-width="1.1"/>
<circle cx="1119.6" cy="406.1" r="4.2" fill="#0000ff" stroke="#111" stroke-width="1.1"/>
<circle cx="1069.3" cy="171.9" r="4.2" fill="#00ffff" stroke="#111" stroke-width="1.1"/>
<circle cx="1268.0" cy="266.2" r="4.2" fill="#ff00ff" stroke="#111" stroke-width="1.1"/>
<circle cx="1153.5" cy="85.4" r="4.2" fill="#ffff00" stroke="#111" stroke-width="1.1"/>
<circle cx="1245.3" cy="107.4" r="4.2" fill="#c89058" stroke="#111" stroke-width="1.1"/>
<circle cx="1252.0" cy="108.3" r="4.2" fill="#9a6a40" stroke="#111" stroke-width="1.1"/>
<circle cx="1225.5" cy="113.3" r="4.2" fill="#6a4a34" stroke="#111" stroke-width="1.1"/>
<circle cx="1239.5" cy="118.3" r="4.2" fill="#6a4a34" stroke="#111" stroke-width="1.1"/>
<circle cx="1214.6" cy="115.8" r="4.2" fill="#7a5a44" stroke="#111" stroke-width="1.1"/>
<circle cx="1222.3" cy="125.5" r="4.2" fill="#6a4a34" stroke="#111" stroke-width="1.1"/>
<circle cx="1214.4" cy="122.3" r="4.2" fill="#c89070" stroke="#111" stroke-width="1.1"/>
<circle cx="1206.0" cy="126.5" r="4.2" fill="#b88868" stroke="#111" stroke-width="1.1"/>
<circle cx="1193.0" cy="129.3" r="4.2" fill="#b08870" stroke="#111" stroke-width="1.1"/>
<circle cx="1198.6" cy="121.8" r="4.2" fill="#b89070" stroke="#111" stroke-width="1.1"/>
<circle cx="1220.4" cy="127.4" r="4.2" fill="#e0a080" stroke="#111" stroke-width="1.1"/>
<circle cx="1209.7" cy="130.6" r="4.2" fill="#c89070" stroke="#111" stroke-width="1.1"/>
<circle cx="1198.1" cy="128.8" r="4.2" fill="#b89070" stroke="#111" stroke-width="1.1"/>
<circle cx="1197.6" cy="136.7" r="4.2" fill="#5a4030" stroke="#111" stroke-width="1.1"/>
<circle cx="1180.6" cy="131.1" r="4.2" fill="#e8c0a0" stroke="#111" stroke-width="1.1"/>
<circle cx="1180.6" cy="142.0" r="4.2" fill="#101010" stroke="#111" stroke-width="1.1"/>
<circle cx="1180.6" cy="140.9" r="4.2" fill="#e8b8a0" stroke="#111" stroke-width="1.1"/>
<circle cx="1133.5" cy="186.6" r="4.4" fill="#000"/>
<rect x="950.4" y="57.4" width="600.2" height="462" fill="none" stroke="#a3a3a3" stroke-width="1.2"/>
<defs><linearGradient id="ins" x1="0" y1="0" x2="1" y2="1"><stop offset="0" stop-color="#ff8a30"/><stop offset="1" stop-color="#ff4422"/></linearGradient><clipPath id="insclip"><rect x="1358" y="358" width="186.5" height="121"/></clipPath></defs>
<rect x="1357.6" y="357.6" width="187.4" height="122" fill="url(#ins)" stroke="#8a8a8a" stroke-width="1.6"/>
<g clip-path="url(#insclip)">
<rect x="1492.2" y="370.59999999999997" width="12.6" height="12.6" fill="none" stroke="#f6f6f6" stroke-width="1.5"/>
<rect x="1374.5" y="384.3" width="12.6" height="12.6" fill="none" stroke="#f6f6f6" stroke-width="1.5"/>
<rect x="1444.4" y="411.59999999999997" width="12.6" height="12.6" fill="none" stroke="#f6f6f6" stroke-width="1.5"/>
<rect x="1457.4" y="425.59999999999997" width="12.6" height="12.6" fill="none" stroke="#f6f6f6" stroke-width="1.5"/>
<rect x="1369.0" y="429.8" width="12.6" height="12.6" fill="none" stroke="#f6f6f6" stroke-width="1.5"/>
<rect x="1377.4" y="443.5" width="12.6" height="12.6" fill="none" stroke="#f6f6f6" stroke-width="1.5"/>
<rect x="1430.4" y="443.8" width="12.6" height="12.6" fill="none" stroke="#f6f6f6" stroke-width="1.5"/>
<rect x="1350.7" y="426.5" width="12.6" height="12.6" fill="none" stroke="#f6f6f6" stroke-width="1.5"/>
<circle cx="1478.4" cy="378.2" r="4" fill="#7a5438" stroke="#1a1a1a" stroke-width="1.1"/>
<circle cx="1540.2" cy="375.6" r="4" fill="#7a5438" stroke="#1a1a1a" stroke-width="1.1"/>
<circle cx="1363.6" cy="397.4" r="4" fill="#c89878" stroke="#1a1a1a" stroke-width="1.1"/>
<circle cx="1438.4" cy="419.5" r="4" fill="#d0a080" stroke="#1a1a1a" stroke-width="1.1"/>
<circle cx="1361.6" cy="439" r="4" fill="#c89878" stroke="#1a1a1a" stroke-width="1.1"/>
<circle cx="1446.8" cy="437.4" r="4" fill="#b8886a" stroke="#1a1a1a" stroke-width="1.1"/>
<circle cx="1369.1" cy="453.3" r="4" fill="#c08a6a" stroke="#1a1a1a" stroke-width="1.1"/>
<circle cx="1426.3" cy="451.4" r="4" fill="#e0a888" stroke="#1a1a1a" stroke-width="1.1"/>
</g>
<rect x="1558.5" y="0" width="1.5" height="861" fill="#000" fill-opacity="0.6"/>
<rect x="1310.6" y="488.8" width="236.7" height="25.3" fill="#2b2b2b"/>
<text x="1312.2" y="509.3" font-size="19" fill="#ececec" textLength="217.8" lengthAdjust="spacingAndGlyphs">RGB Triplet: 207, 143, 102</text>
</svg>
<script>
(function(){
var L=[1206.50,506.34,1205.40,506.85,1204.23,506.85,1201.91,506.12,1199.32,504.39,1195.82,501.70,1193.47,499.83,1190.76,497.61,1187.76,495.05,1184.39,492.18,1181.92,490.12,1179.27,487.93,1176.33,485.51,1173.91,483.53,1171.34,481.43,1168.61,479.20,1165.76,476.85,1163.40,474.90,1160.97,472.90,1158.44,470.81,1155.80,468.59,1153.04,466.21,1150.99,464.42,1148.88,462.58,1146.71,460.67,1144.49,458.68,1142.20,456.60,1139.84,454.42,1137.42,452.11,1135.27,450.04,1133.10,447.94,1130.89,445.79,1128.62,443.56,1126.28,441.19,1123.86,438.67,1121.32,435.96,1118.66,433.01,1116.82,430.93,1114.92,428.77,1112.98,426.54,1110.99,424.22,1108.96,421.84,1106.88,419.38,1104.77,416.84,1102.63,414.22,1100.46,411.53,1098.26,408.76,1096.03,405.92,1093.78,402.99,1092.07,400.75,1090.34,398.46,1088.58,396.12,1086.80,393.74,1085.01,391.32,1083.20,388.85,1081.37,386.34,1079.52,383.78,1077.66,381.19,1075.79,378.55,1073.91,375.88,1072.02,373.17,1070.12,370.41,1068.22,367.62,1066.31,364.80,1064.39,361.94,1062.85,359.61,1061.30,357.25,1059.73,354.85,1058.16,352.42,1056.57,349.96,1054.97,347.47,1053.37,344.96,1051.76,342.42,1050.15,339.85,1048.54,337.27,1046.92,334.67,1045.30,332.06,1043.68,329.43,1042.07,326.79,1040.46,324.14,1038.85,321.48,1037.26,318.82,1035.67,316.16,1034.09,313.49,1032.52,310.83,1031.02,308.29,1029.52,305.72,1028.01,303.14,1026.50,300.53,1024.98,297.92,1023.47,295.28,1021.95,292.64,1020.44,289.99,1018.93,287.33,1017.43,284.66,1015.94,281.99,1014.45,279.32,1012.98,276.65,1011.52,273.98,1010.08,271.32,1008.65,268.67,1007.24,266.02,1005.86,263.39,1004.49,260.77,1003.15,258.16,1001.83,255.57,1000.40,252.72,998.99,249.86,997.59,246.99,996.21,244.11,994.85,241.24,993.50,238.37,992.18,235.51,990.87,232.65,989.58,229.81,988.31,226.97,987.07,224.16,985.84,221.36,984.63,218.58,983.45,215.83,982.28,213.10,981.14,210.41,980.02,207.74,978.93,205.11,977.86,202.52,976.53,199.27,975.24,196.05,973.99,192.86,972.76,189.69,971.57,186.57,970.42,183.48,969.30,180.43,968.21,177.42,967.16,174.45,966.15,171.54,965.16,168.68,964.22,165.87,963.31,163.11,962.43,160.42,961.59,157.79,960.51,154.30,959.50,150.91,958.56,147.62,957.68,144.43,956.87,141.34,956.13,138.33,955.43,135.41,954.80,132.58,954.21,129.83,953.67,127.15,953.17,124.55,952.50,120.65,951.97,116.99,951.58,113.55,951.31,110.29,951.15,107.20,951.10,104.25,951.14,101.41,951.37,97.67,951.83,94.25,952.49,91.10,953.33,88.20,954.34,85.50,955.87,82.46,957.69,79.79,959.75,77.45,961.98,75.41,965.28,73.21,968.93,71.55,972.82,70.26,975.87,69.52,979.06,69.02,982.36,68.66,985.71,68.36,989.13,68.12,992.65,67.99,996.20,67.92,999.76,67.89,1003.30,67.87,1006.84,67.90,1010.42,67.97,1014.04,68.06,1017.69,68.19,1021.37,68.35,1025.11,68.54,1028.92,68.76,1032.04,68.96,1035.19,69.17,1038.40,69.40,1041.65,69.65,1044.97,69.92,1048.34,70.20,1051.76,70.50,1055.24,70.81,1058.78,71.14,1062.40,71.49,1065.47,71.79,1068.58,72.09,1071.74,72.41,1074.95,72.74,1078.22,73.08,1081.56,73.42,1084.46,73.73,1087.41,74.04,1090.40,74.36,1093.43,74.68,1096.51,75.02,1099.63,75.35,1102.80,75.70,1106.02,76.05,1109.27,76.42,1112.58,76.78,1115.93,77.16,1119.33,77.54,1122.78,77.93,1126.29,78.32,1129.40,78.67,1132.55,79.03,1135.74,79.39,1138.97,79.75,1142.24,80.12,1145.55,80.49,1148.90,80.87,1152.30,81.26,1155.34,81.61,1158.42,81.96,1161.53,82.31,1164.68,82.67,1167.85,83.04,1171.06,83.41,1174.30,83.78,1177.57,84.15,1180.87,84.53,1183.87,84.88,1186.90,85.23,1189.95,85.58,1193.04,85.93,1196.14,86.29,1199.27,86.65,1202.43,87.01,1205.61,87.38,1208.82,87.75,1212.04,88.12,1215.00,88.46,1217.98,88.80,1220.98,89.15,1224.00,89.50,1227.05,89.85,1230.11,90.20,1233.19,90.56,1236.28,90.91,1239.39,91.27,1242.52,91.63,1245.66,91.99,1248.81,92.35,1251.99,92.72,1255.19,93.08,1258.41,93.45,1261.64,93.82,1264.88,94.19,1268.14,94.56,1271.40,94.93,1274.68,95.31,1277.95,95.68,1281.23,96.06,1284.24,96.41,1287.27,96.76,1290.32,97.11,1293.37,97.46,1296.44,97.82,1299.50,98.17,1302.57,98.53,1305.63,98.88,1308.68,99.23,1311.72,99.59,1314.75,99.94,1317.76,100.28,1321.02,100.66,1324.28,101.03,1327.52,101.41,1330.76,101.78,1333.99,102.15,1337.20,102.52,1340.41,102.89,1343.61,103.25,1346.81,103.62,1350.00,103.99,1353.17,104.35,1356.36,104.72,1359.54,105.08,1362.73,105.45,1365.91,105.82,1369.09,106.18,1372.25,106.54,1375.39,106.91,1378.50,107.26,1381.59,107.62,1384.64,107.97,1387.64,108.31,1390.91,108.68,1394.15,109.05,1397.36,109.42,1400.54,109.78,1403.69,110.14,1406.80,110.49,1409.87,110.84,1412.91,111.19,1415.91,111.53,1418.87,111.87,1422.12,112.24,1425.33,112.61,1428.49,112.97,1431.61,113.33,1434.68,113.69,1437.71,114.04,1440.68,114.38,1443.60,114.72,1446.47,115.05,1450.07,115.47,1453.59,115.88,1457.02,116.27,1460.37,116.66,1463.64,117.04,1466.84,117.41,1469.96,117.76,1473.49,118.17,1476.91,118.56,1480.22,118.93,1483.44,119.30,1486.57,119.66,1489.62,120.01,1493.17,120.41,1496.58,120.81,1499.88,121.19,1503.08,121.56,1506.20,121.92,1510.00,122.36,1513.67,122.78,1517.19,123.19,1520.58,123.58,1523.65,123.93,1526.47,124.26,1529.38,124.60,1532.74,124.98,1536.00,125.35,1539.68,125.77,1543.47,126.20,1547.07,126.61,1550.20,126.97,1554.23,127.43,1557.48,127.81,1560.58,128.16,1563.89,128.55,1567.05,128.91,1569.60,129.21,1573.09,129.61];
var c=document.getElementById('cie'),ctx=c.getContext('2d');
var W=c.width,H=c.height,OX=950,OY=57;
var off=document.createElement('canvas');off.width=W;off.height=H;
var o=off.getContext('2d');var im=o.createImageData(W,H),d=im.data;
var M=[2.4934969,-0.9313836,-0.4027108,-0.8294890,1.7626641,0.0236247,0.0358458,-0.0761724,0.9568845];
var DK=0.6;
function g(v){return v<=0.0031308?12.92*v:1.055*Math.pow(v,1/2.4)-0.055;}
function px(i,j,out){
 var u=(OX+i-949.7)/1000,v=(519.1-(OY+j))/769;
 if(v<=0.001)v=0.001;
 var den=6*u-16*v+12,x=9*u/den,y=4*v/den;
 var X=x/y,Y=1,Z=(1-x-y)/y;
 var r=M[0]*X+M[1]*Y+M[2]*Z,gg=M[3]*X+M[4]*Y+M[5]*Z,b=M[6]*X+M[7]*Y+M[8]*Z;
 var inside=(r>=0&&gg>=0&&b>=-0.012);
 if(r<0)r=0;if(gg<0)gg=0;if(b<0)b=0;
 var m=Math.max(r,gg,b)||1;r/=m;gg/=m;b/=m;
 if(!inside){r*=DK;gg*=DK;b*=DK;}
 out[0]+=r;out[1]+=gg;out[2]+=b;
}
var acc=[0,0,0];
for(var j=0;j<H;j++)for(var i=0;i<W;i++){
 acc[0]=acc[1]=acc[2]=0;
 px(i+0.25,j+0.25,acc);px(i+0.75,j+0.25,acc);px(i+0.25,j+0.75,acc);px(i+0.75,j+0.75,acc);
 var k=(j*W+i)*4;d[k]=acc[0]*63.75;d[k+1]=acc[1]*63.75;d[k+2]=acc[2]*63.75;d[k+3]=255;
}
o.putImageData(im,0,0);
ctx.beginPath();ctx.moveTo(L[0]-OX,L[1]-OY);
for(var q=2;q<L.length;q+=2)ctx.lineTo(L[q]-OX,L[q+1]-OY);
ctx.closePath();ctx.clip();ctx.drawImage(off,0,0);
})();
</script>
</body></html>
